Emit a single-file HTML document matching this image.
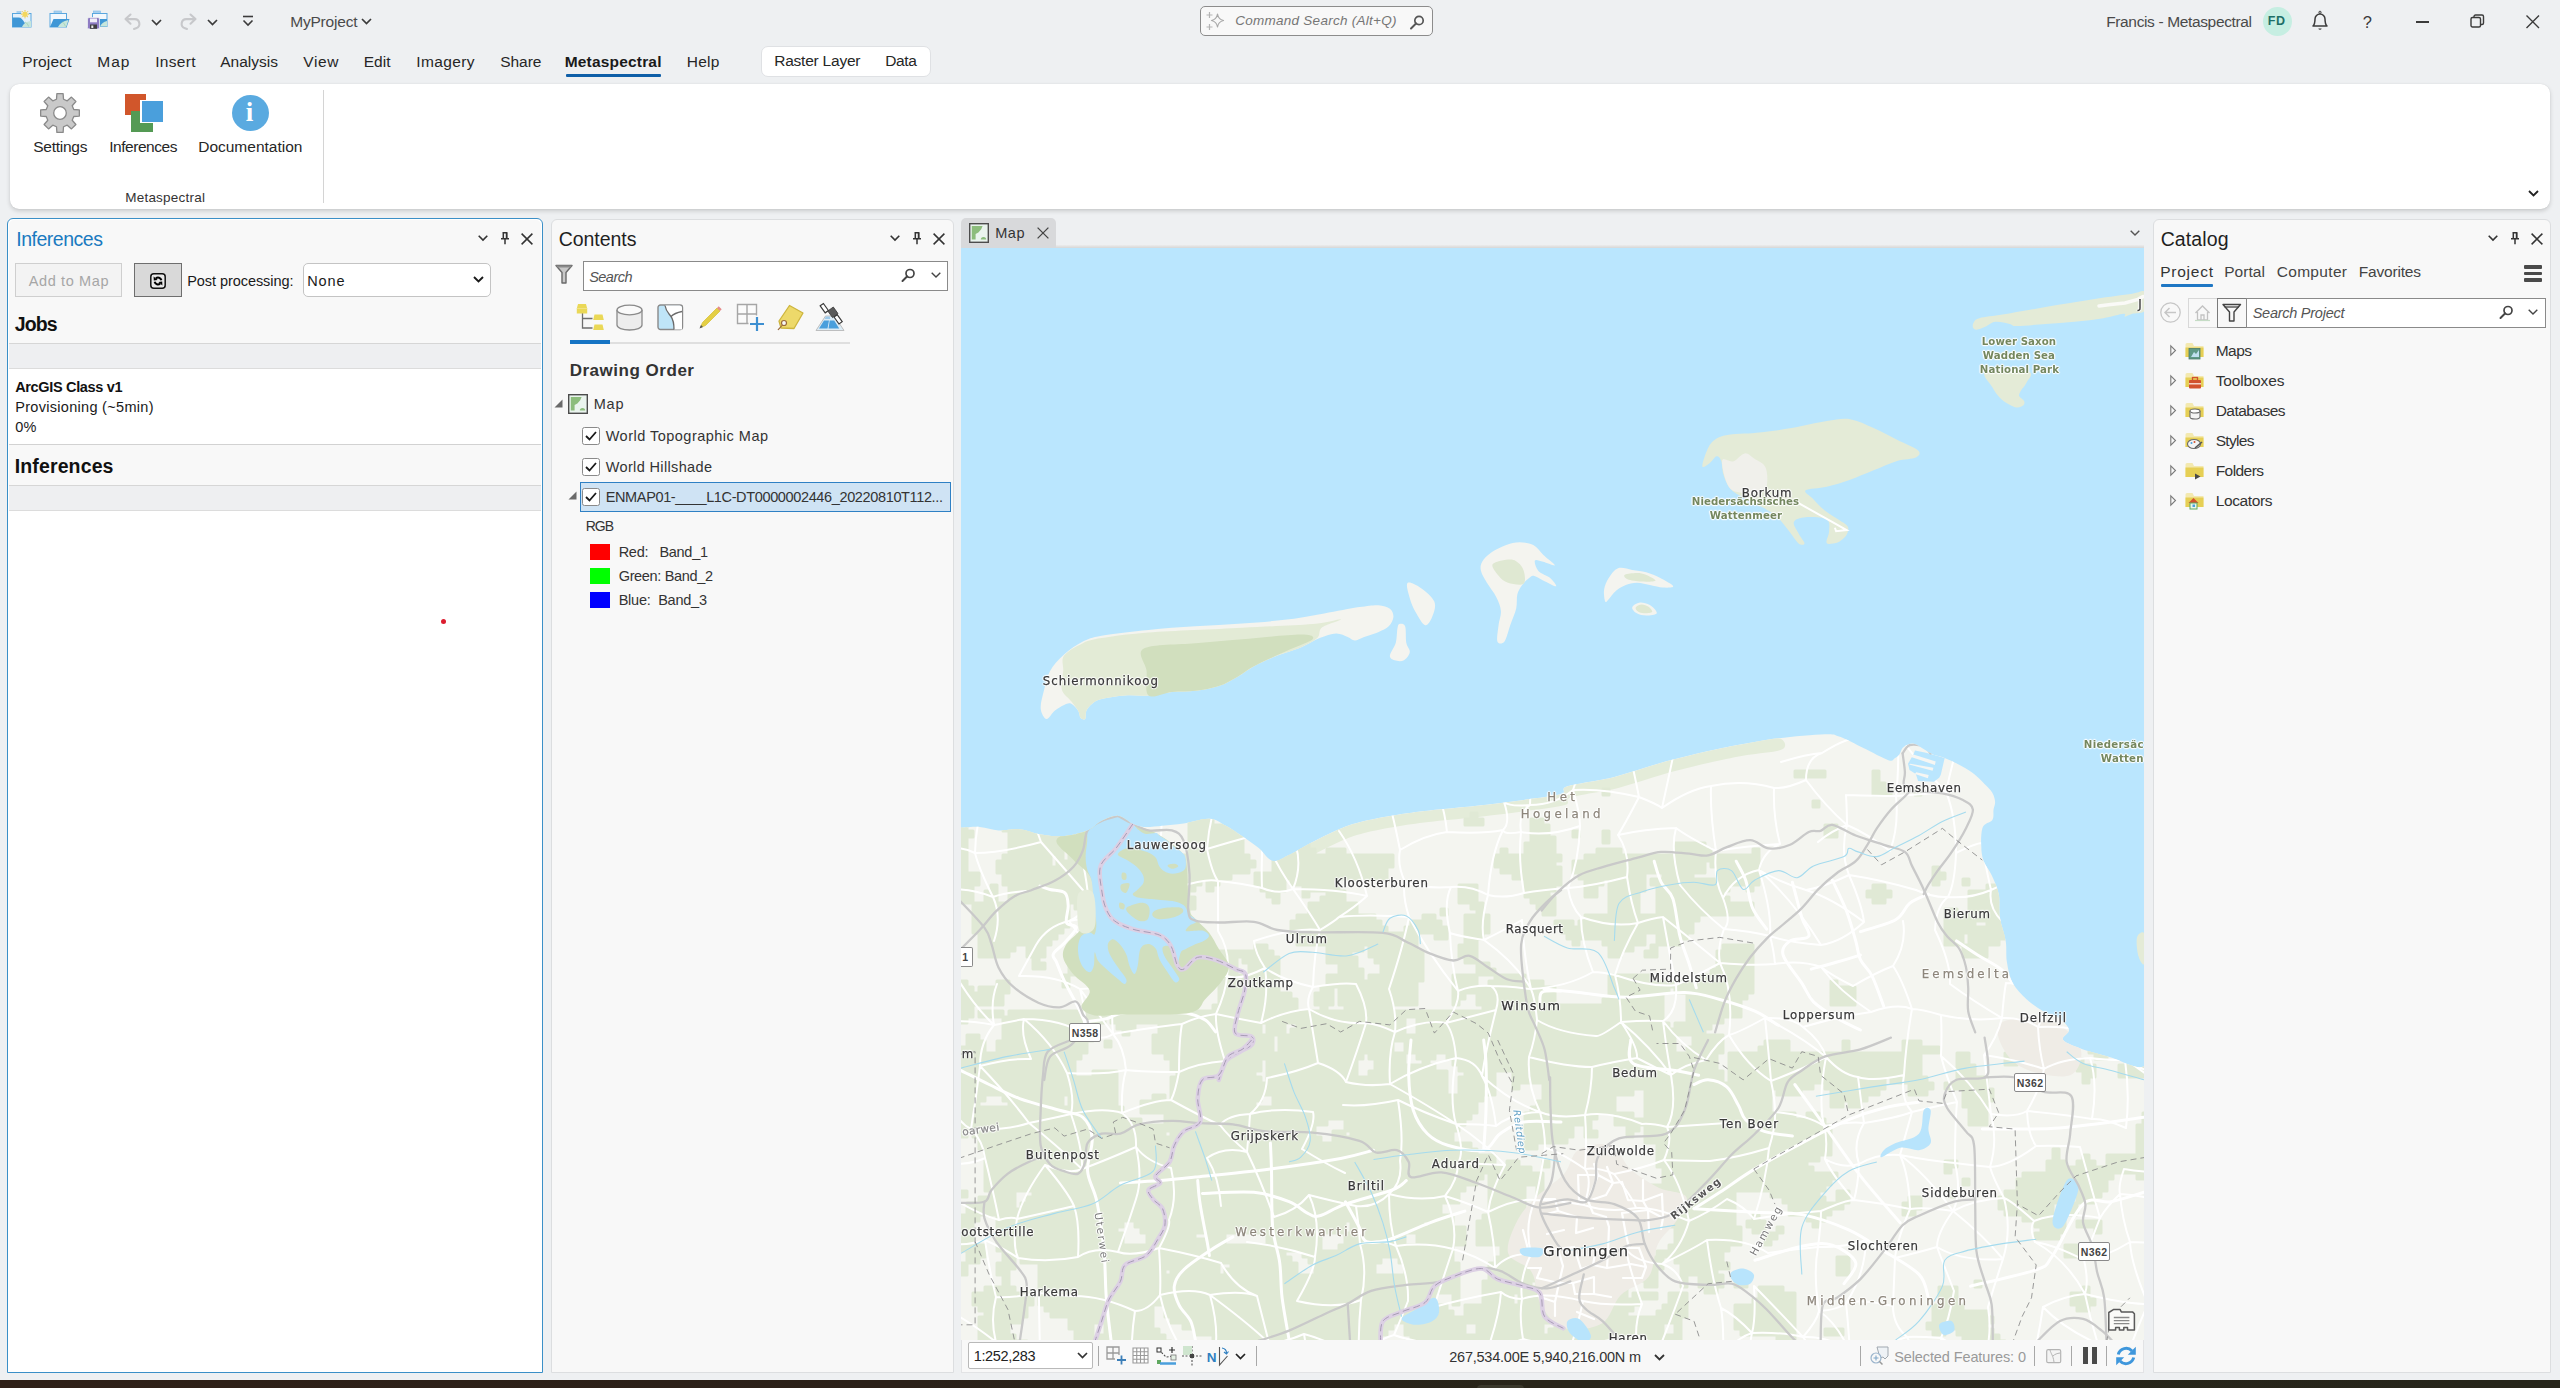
<!DOCTYPE html><html lang="en"><head><meta charset="utf-8"><title>MyProject - Map - ArcGIS Pro</title><style>
*{box-sizing:border-box;margin:0;padding:0}
html,body{width:2560px;height:1388px;overflow:hidden}
body{position:relative;background:#eef0f2;font-family:"Liberation Sans",sans-serif;color:#1f1f1f}
.b{position:absolute}
.t{position:absolute;white-space:pre;line-height:1;display:block}
svg{position:absolute;overflow:visible}

</style></head><body>
<div class="b" style="left:0px;top:1380px;width:2560px;height:8px;background:linear-gradient(90deg,#2f2118 0%,#2b2119 35%,#28251a 60%,#27261b 100%)"></div>
<div class="b" style="left:1477px;top:1385px;width:47px;height:5px;background:#3a382c;border-radius:4px 4px 0 0"></div>
<svg style="left:12px;top:10px" width="20" height="18" viewBox="0 0 20 18"><rect x="4.500" y="1" width="5" height="3" fill="#a8d0ee"/><rect x=".500" y="3.500" width="18.500" height="13.500" fill="#e4f1fb" stroke="#5aa7df" stroke-width="1"/><path d="M.500 7.500h6c3 0 4 2 6 5l3.500 4.500h-15.500z" fill="#3f97d6"/><path d="M10 17c1.500-3.500 4-5.500 9-6v6z" fill="#c6e6dc"/><path d="M13 12c2 1 3 2.500 3.500 4.500" fill="none" stroke="#9fd0b0" stroke-width=".800"/><circle cx="13" cy="4.200" r="3.900" fill="#eef0f2"/><circle cx="13" cy="4.200" r="2.700" fill="#f3d75e"/><path d="M13 0v1.200M13 7.200v1.200M8.800 4.200h1.200M16 4.200h1.200M10 1.200l.900.900M15.100 6.300l.900.900M16 1.200l-.900.900M10.900 6.300l-.900.900" stroke="#e6c440" stroke-width=".900"/></svg>
<svg style="left:49px;top:10px" width="22" height="18" viewBox="0 0 22 18"><rect x="5" y="1" width="7.500" height="2.500" fill="#a8d0ee" stroke="#7dbbe8" stroke-width=".600"/><rect x="1" y="3.500" width="16.500" height="13.500" fill="#f2f8fd" stroke="#5aa7df" stroke-width="1"/><path d="M1 17l3.500-8h16l-2.800 8z" fill="#3f97d6"/><path d="M9 17c2-3.500 5-6 10.500-7l-2.300 7z" fill="#c6e6dc"/><path d="M13 12c2 1 3 2.500 3.300 4.500" fill="none" stroke="#9fd0b0" stroke-width=".800"/></svg>
<svg style="left:87px;top:10px" width="21" height="20" viewBox="0 0 21 20"><rect x="6.500" y="1" width="7" height="2.500" fill="#a8d0ee" stroke="#7dbbe8" stroke-width=".600"/><rect x="5.500" y="3.500" width="14.500" height="13" fill="#f2f8fd" stroke="#5aa7df" stroke-width="1"/><path d="M12 9h8v7.500h-8z" fill="#3f97d6"/><path d="M13 16.500c1.500-3 3.500-4.800 7-5.500v5.500z" fill="#c6e6dc"/><rect x=".500" y="7.500" width="12" height="11.500" rx="1.500" fill="#8e7cc3" stroke="#eef0f2" stroke-width=".800"/><rect x="3" y="8.500" width="7" height="3.800" fill="#f1eef8"/><rect x="3" y="14.500" width="7" height="4.300" fill="#3f3f3f"/><rect x="4.300" y="15.500" width="2" height="2.500" fill="#e8e8e8"/></svg>
<svg style="left:124px;top:13px" width="18" height="17" viewBox="0 0 18 17"><path d="M6.500 1.500l-5 4.600 5 4.600M2 6.100h8.500a4.700 4.700 0 0 1 1.500 9.200l-2 .700" fill="none" stroke="#c7c8cb" stroke-width="2.100" stroke-linecap="round" stroke-linejoin="round"/></svg>
<svg style="left:151px;top:19px" width="11" height="7" viewBox="0 0 11 7"><path d="M1 1l4.500 4.500 4.500-4.500" fill="none" stroke="#3b3b3b" stroke-width="1.700"/></svg>
<svg style="left:179px;top:13px" width="18" height="17" viewBox="0 0 18 17"><path d="M11.500 1.500l5 4.600-5 4.600M16 6.100h-8.500a4.700 4.700 0 0 0-1.500 9.200l2 .700" fill="none" stroke="#c7c8cb" stroke-width="2.100" stroke-linecap="round" stroke-linejoin="round"/></svg>
<svg style="left:207px;top:19px" width="11" height="7" viewBox="0 0 11 7"><path d="M1 1l4.500 4.500 4.500-4.500" fill="none" stroke="#3b3b3b" stroke-width="1.700"/></svg>
<svg style="left:242px;top:15px" width="12" height="12" viewBox="0 0 12 12"><path d="M1 1.500h10" stroke="#3b3b3b" stroke-width="1.600"/><path d="M1.500 5.500l4.500 4.500 4.500-4.500" fill="none" stroke="#3b3b3b" stroke-width="1.600"/></svg>
<svg style="left:361px;top:18px" width="11" height="7" viewBox="0 0 11 7"><path d="M1 1l4.500 4.500 4.500-4.500" fill="none" stroke="#3b3b3b" stroke-width="1.700"/></svg>
<div class="b" style="left:1200px;top:6px;width:233px;height:30px;background:#f8f8f8;border:1px solid #8c8c8c;border-radius:5px"></div>
<svg style="left:1205px;top:11px" width="20" height="21" viewBox="0 0 20 21"><path d="M12.500 3c.600 4 2 5.500 6 6.500-4 1-5.400 2.500-6 6.500-.600-4-2-5.500-6-6.500 4-1 5.400-2.500 6-6.500z" fill="none" stroke="#a8a8a8" stroke-width="1.200" stroke-linejoin="round"/><path d="M4.500 1v6M1.500 4h6M4.500 13v6M1.500 16h6" stroke="#b4b4b4" stroke-width="1.200"/></svg>
<svg style="left:1410px;top:15px" width="15" height="15" viewBox="0 0 15 15"><circle cx="9" cy="5.500" r="4.200" fill="none" stroke="#555" stroke-width="1.700"/><path d="M6 8.500l-5 5" stroke="#555" stroke-width="2" stroke-linecap="round"/></svg>
<div class="b" style="left:2262.5px;top:6.5px;width:29.0px;height:29.0px;background:#c6eee2;border-radius:50%"></div>
<svg style="left:2311px;top:10px" width="18" height="21" viewBox="0 0 18 21"><path d="M2 16h14c-1.800-1.800-2-3.500-2-7a5 5 0 0 0-10 0c0 3.500-.200 5.200-2 7z" fill="none" stroke="#3b3b3b" stroke-width="1.500" stroke-linejoin="round"/><circle cx="9" cy="2.300" r="1.100" fill="none" stroke="#3b3b3b" stroke-width="1"/><path d="M7.300 18.500a1.800 1.800 0 0 0 3.400 0z" fill="#3b3b3b"/></svg>
<div class="b" style="left:2416px;top:21px;width:13px;height:1.5px;background:#3b3b3b"></div>
<svg style="left:2470px;top:14px" width="15" height="15" viewBox="0 0 15 15"><rect x="1" y="3.500" width="9.500" height="9.500" rx="1.500" fill="none" stroke="#3b3b3b" stroke-width="1.400"/><path d="M4 3.500v-1a1.500 1.500 0 0 1 1.500-1.500h6.500a1.500 1.500 0 0 1 1.500 1.500v6.500a1.500 1.500 0 0 1-1.500 1.500h-1.500" fill="none" stroke="#3b3b3b" stroke-width="1.400"/></svg>
<svg style="left:2526px;top:15px" width="14" height="14" viewBox="0 0 14 14"><path d="M.500.500l12.500 12.500M13 .500l-12.500 12.500" stroke="#3b3b3b" stroke-width="1.400"/></svg>
<div class="b" style="left:566px;top:74px;width:95px;height:3px;background:#0f5fa8;border-radius:1px"></div>
<div class="b" style="left:761px;top:45.5px;width:169.5px;height:31.0px;background:#fff;border:1px solid #dfe1e4;border-radius:7px"></div>
<div class="b" style="left:10px;top:84px;width:2540px;height:125px;background:#fff;border-radius:9px;box-shadow:0 2px 4px rgba(0,0,0,.16),0 0 1px rgba(0,0,0,.12)"></div>
<div class="b" style="left:323px;top:90px;width:1px;height:113px;background:#d4d4d4"></div>
<svg style="left:38px;top:91px" width="44" height="44" viewBox="0 0 44 44"><path d="M18.49 8.24 L18.88 2.65 L25.12 2.65 L25.51 8.24 L29.24 9.79 L33.47 6.11 L37.89 10.53 L34.21 14.76 L35.76 18.49 L41.35 18.88 L41.35 25.12 L35.76 25.51 L34.21 29.24 L37.89 33.47 L33.47 37.89 L29.24 34.21 L25.51 35.76 L25.12 41.35 L18.88 41.35 L18.49 35.76 L14.76 34.21 L10.53 37.89 L6.11 33.47 L9.79 29.24 L8.24 25.51 L2.65 25.12 L2.65 18.88 L8.24 18.49 L9.79 14.76 L6.11 10.53 L10.53 6.11 L14.76 9.79Z" fill="#c9c9c9" stroke="#8a8a8a" stroke-width="1.300" stroke-linejoin="round"/><circle cx="22" cy="22" r="6.300" fill="#fff" stroke="#8a8a8a" stroke-width="1.300"/></svg>
<div class="b" style="left:125px;top:94px;width:21px;height:21px;background:#d1562b"></div>
<div class="b" style="left:131px;top:110.5px;width:21.5px;height:21.5px;background:#549a54"></div>
<div class="b" style="left:140px;top:99.5px;width:23px;height:23.0px;background:#fff"></div>
<div class="b" style="left:141.5px;top:100.5px;width:21.5px;height:21.0px;background:#4a9fdc"></div>
<div class="b" style="left:232px;top:94.5px;width:37px;height:36.0px;background:#5aaae0;border-radius:50%"></div>
<svg style="left:2528px;top:190px" width="12" height="8" viewBox="0 0 12 8"><path d="M1 1l4.500 4.500 4.500-4.500" fill="none" stroke="#222" stroke-width="1.800"/></svg>
<div class="b" style="left:7px;top:218px;width:535.5px;height:1154.5px;background:#fff;border:1.500px solid #3a8fc7;border-radius:6px 6px 0 0"></div>
<div class="b" style="left:8.5px;top:220px;width:532.5px;height:123px;background:#f8f8f8;border-radius:5px 5px 0 0"></div>
<svg style="left:478px;top:235px" width="10" height="7" viewBox="0 0 10 7"><path d="M.700 .700l4.300 4.300 4.300-4.300" fill="none" stroke="#333" stroke-width="1.600"/></svg>
<svg style="left:500px;top:232px" width="10" height="13" viewBox="0 0 10 13"><path d="M2.500 .800h5M3.300 .800v5.500M6.700 .800v5.500M1 6.800h8M5 6.800v5.500" fill="none" stroke="#333" stroke-width="1.500"/><path d="M5.800 1h1.500v5.500h-1.500z" fill="#333"/></svg>
<svg style="left:521px;top:233px" width="12" height="12" viewBox="0 0 12 12"><path d="M.600 .600l10.800 10.800M11.400 .600l-10.800 10.800" stroke="#333" stroke-width="1.500"/></svg>
<div class="b" style="left:15px;top:263px;width:107px;height:34px;background:#f3f3f3;border:1px solid #cfcfcf"></div>
<div class="b" style="left:134px;top:263px;width:48px;height:34px;background:#d9d9d9;border:1px solid #6e6e6e"></div>
<svg style="left:150px;top:272.5px" width="16" height="16" viewBox="0 0 16 16"><rect x=".800" y=".800" width="14.400" height="14.400" rx="3" fill="#e9e9e9" stroke="#111" stroke-width="1.500"/><path d="M11.400 7.200a3.400 3.400 0 0 0-5.600-1.700M4.600 8.800a3.400 3.400 0 0 0 5.600 1.700" fill="none" stroke="#000" stroke-width="2"/><path d="M3.600 3.400l.200 4.200 3.800-.700zM12.400 12.600l-.200-4.200-3.800.700z" fill="#000"/></svg>
<div class="b" style="left:303px;top:263px;width:187.5px;height:34px;background:#fff;border:1px solid #c4c4c4;border-radius:5px"></div>
<svg style="left:473px;top:276px" width="12" height="8" viewBox="0 0 12 8"><path d="M1 1l4.500 4.500 4.500-4.500" fill="none" stroke="#1a1a1a" stroke-width="1.900"/></svg>
<div class="b" style="left:8.5px;top:343px;width:532.5px;height:26px;background:#eeeff1;border-top:1px solid #d6d6d6;border-bottom:1px solid #dcdcdc"></div>
<div class="b" style="left:8.5px;top:443.5px;width:532.5px;height:41.5px;background:#f8f8f8;border-top:1px solid #d2d2d2"></div>
<div class="b" style="left:8.5px;top:485px;width:532.5px;height:26px;background:#eeeff1;border-top:1px solid #d6d6d6;border-bottom:1px solid #dcdcdc"></div>
<div class="b" style="left:441px;top:619px;width:5px;height:5px;background:#dc1c2e;border-radius:50%"></div>
<div class="b" style="left:550.5px;top:218.5px;width:403.0px;height:1154.0px;background:#f8f8f8;border:1px solid #dcdee0;border-radius:6px 6px 0 0"></div>
<svg style="left:889.5px;top:235px" width="10" height="7" viewBox="0 0 10 7"><path d="M.700 .700l4.300 4.300 4.300-4.300" fill="none" stroke="#333" stroke-width="1.600"/></svg>
<svg style="left:912px;top:232px" width="10" height="13" viewBox="0 0 10 13"><path d="M2.500 .800h5M3.300 .800v5.500M6.700 .800v5.500M1 6.800h8M5 6.800v5.500" fill="none" stroke="#333" stroke-width="1.500"/><path d="M5.800 1h1.500v5.500h-1.500z" fill="#333"/></svg>
<svg style="left:933px;top:233px" width="12" height="12" viewBox="0 0 12 12"><path d="M.600 .600l10.800 10.800M11.400 .600l-10.800 10.800" stroke="#333" stroke-width="1.500"/></svg>
<svg style="left:555px;top:264px" width="18" height="21" viewBox="0 0 18 21"><path d="M1 1.500h16l-6 7v10.500h-4v-10.500z" fill="#c8c8c8" stroke="#6a6a6a" stroke-width="1.400" stroke-linejoin="round"/><path d="M1 1.500h16l-1.500 2h-13z" fill="#8a8a8a"/></svg>
<div class="b" style="left:582.5px;top:261px;width:365.0px;height:29.5px;background:#fff;border:1px solid #8a8a8a"></div>
<svg style="left:901px;top:268px" width="15" height="15" viewBox="0 0 15 15"><circle cx="9" cy="5.500" r="4" fill="none" stroke="#444" stroke-width="1.700"/><path d="M6 8.500l-4.500 4.500" stroke="#444" stroke-width="2" stroke-linecap="round"/></svg>
<svg style="left:931px;top:272px" width="10" height="7" viewBox="0 0 10 7"><path d="M.700 .700l4.300 4.300 4.300-4.300" fill="none" stroke="#444" stroke-width="1.400"/></svg>
<svg style="left:576px;top:303px" width="29" height="29" viewBox="0 0 29 29"><path d="M6.500 10v15h10M6.500 15.500h10" fill="none" stroke="#6e6e6e" stroke-width="1.300"/><path d="M2 1h8l1.200 4.500v5h-10.400v-5z" fill="#ead857"/><path d="M.800 5.500h10.400" stroke="#f3e68e" stroke-width=".800"/><path d="M18.500 11.500h8l1.300 5.500h-10.600z" fill="#ead857"/><path d="M18.500 21.500h8l1.300 5.500h-10.600z" fill="#ead857"/></svg>
<svg style="left:616px;top:304px" width="27" height="27" viewBox="0 0 27 27"><path d="M1 6v15c0 2.800 5.500 5 12.500 5s12.500-2.200 12.500-5v-15" fill="#ededed" stroke="#8a8a8a" stroke-width="1.300"/><ellipse cx="13.500" cy="6" rx="12.500" ry="4.800" fill="#fafafa" stroke="#8a8a8a" stroke-width="1.300"/></svg>
<svg style="left:657px;top:304px" width="27" height="27" viewBox="0 0 27 27"><rect x="1" y="1" width="24.500" height="24.500" rx="2.500" fill="#bfe5f8" stroke="#8a8a8a" stroke-width="1.400"/><path d="M8 1.500c1 6 3.500 7.500 6 11s3 7 3 13h8v-21.500a2.500 2.500 0 0 0-2.500-2.500z" fill="#fff"/><path d="M8 1.500c1 6 3.500 7.500 6 11s3 7 3 13M14 12.500c3-3 6-4 11-5" fill="none" stroke="#6a6a6a" stroke-width="1.300"/></svg>
<svg style="left:698px;top:305px" width="25" height="25" viewBox="0 0 25 25"><path d="M2.500 22.500l2-5 14.500-14.500 3 3-14.500 14.500z" fill="#e4cf45" stroke="#d8c23a" stroke-width=".8"/><path d="M19 3l1.700-1.700 3 3-1.700 1.700z" fill="#e58b8b"/><path d="M1.500 23.500l1.500-3.500 2 2z" fill="#555"/></svg>
<svg style="left:736px;top:303px" width="30" height="30" viewBox="0 0 30 30"><path d="M1.500 1.500h19v19h-19zM11 1.500v19M1.500 11h19" fill="#fbfbfb" stroke="#a6a6a6" stroke-width="1.400"/><rect x="12.500" y="12.500" width="17" height="17" fill="#f8f8f8"/><path d="M21 14v14M14 21h14" stroke="#3d8fd1" stroke-width="2.200"/></svg>
<svg style="left:777px;top:304px" width="28" height="28" viewBox="0 0 28 28"><path d="M12.500 1.500l13.500 7.500-9 15.500-13-.500-2-7z" fill="#edd96a" stroke="#cdb53e" stroke-width="1.300" stroke-linejoin="round"/><circle cx="7" cy="19" r="2.500" fill="#f8f8f8" stroke="#9a6a3a" stroke-width="1.200"/><path d="M5.500 21c-2 2.500-3.500 3.500-4.500 5" fill="none" stroke="#9a6a3a" stroke-width="1.200"/></svg>
<svg style="left:815px;top:303px" width="31" height="29" viewBox="0 0 31 29"><path d="M1 27.500l9.500-14.500 9 0 9.500 14.500z" fill="#dcecf6" stroke="#b8b8b8" stroke-width=".900"/><path d="M4 25.500l5-8h5l-1.500 8zM13.500 25.500l1.200-8h4.500l5 8z" fill="#4a9fdc"/><path d="M9.700 16l1-2.500h4l.500 2.500z" fill="#9cc9ea"/><path d="M5.200 2.800l3.200-2.300 5 7-3.200 2.300zM19 14l3.200-2.300 5 7-3.200 2.300z" fill="#fff" stroke="#3a3a3a" stroke-width="1.200"/><path d="M12.800 8l5.500-4 4.700 6.600-5.500 4z" fill="#5a5a5a" stroke="#333" stroke-width=".800"/></svg>
<div class="b" style="left:570px;top:341.5px;width:280px;height:2.5px;background:#dfdfdf"></div>
<div class="b" style="left:570px;top:339.5px;width:40px;height:4.5px;background:#1674c4"></div>
<svg style="left:553.5px;top:399px" width="9" height="9" viewBox="0 0 9 9"><path d="M8.500 .500v8h-8z" fill="#6a6a6a"/></svg>
<svg style="left:568px;top:394px" width="20" height="20" viewBox="0 0 20 20"><rect x=".700" y=".700" width="18.600" height="18.600" fill="#eaf4ee" stroke="#4c4c4c" stroke-width="1.400"/><path d="M2.800 3h10.800l-1.400 3.300-2.800 3.300-2.800 1.400v5.600h-3.800z" fill="#8cbd7c"/><path d="M11.800 16.600a2.700 2.700 0 0 1 5.400 0z" fill="#8cbd7c"/></svg>
<div class="b" style="left:582px;top:427px;width:17.5px;height:17.5px;background:#fff;border:1px solid #8a8a8a;border-radius:2.500px"></div>
<svg style="left:585px;top:431px" width="12" height="10" viewBox="0 0 12 10"><path d="M1 5l3.500 3.500 6.500-7.500" fill="none" stroke="#1a1a1a" stroke-width="1.800"/></svg>
<div class="b" style="left:582px;top:458px;width:17.5px;height:17.5px;background:#fff;border:1px solid #8a8a8a;border-radius:2.500px"></div>
<svg style="left:585px;top:462px" width="12" height="10" viewBox="0 0 12 10"><path d="M1 5l3.500 3.500 6.500-7.500" fill="none" stroke="#1a1a1a" stroke-width="1.800"/></svg>
<div class="b" style="left:580px;top:481.5px;width:370.5px;height:30.0px;background:#cfe3f4;border:1px solid #2f80c4"></div>
<svg style="left:567.5px;top:491px" width="9" height="9" viewBox="0 0 9 9"><path d="M8.500 .500v8h-8z" fill="#6a6a6a"/></svg>
<div class="b" style="left:582px;top:488px;width:17.5px;height:17.5px;background:#fff;border:1px solid #8a8a8a;border-radius:2.500px"></div>
<svg style="left:585px;top:492px" width="12" height="10" viewBox="0 0 12 10"><path d="M1 5l3.500 3.500 6.500-7.500" fill="none" stroke="#1a1a1a" stroke-width="1.800"/></svg>
<div class="b" style="left:589.5px;top:544px;width:20.0px;height:15.5px;background:#ff0000"></div>
<div class="b" style="left:589.5px;top:568px;width:20.0px;height:15.5px;background:#00ff00"></div>
<div class="b" style="left:589.5px;top:592px;width:20.0px;height:15.5px;background:#0000ff"></div>
<div class="b" style="left:961px;top:218px;width:95px;height:28px;background:#d8d9db;border-radius:5px 5px 0 0"></div>
<svg style="left:969px;top:223px" width="20" height="20" viewBox="0 0 20 20"><rect x=".700" y=".700" width="18.600" height="18.600" fill="#eaf4ee" stroke="#4c4c4c" stroke-width="1.400"/><path d="M2.800 3h10.800l-1.400 3.300-2.800 3.300-2.800 1.400v5.600h-3.800z" fill="#8cbd7c"/><path d="M11.800 16.600a2.700 2.700 0 0 1 5.400 0z" fill="#8cbd7c"/></svg>
<svg style="left:1037px;top:227px" width="12" height="12" viewBox="0 0 12 12"><path d="M.600 .600l10.800 10.800M11.400 .600l-10.800 10.800" stroke="#444" stroke-width="1.300"/></svg>
<svg style="left:2129.5px;top:230px" width="10" height="7" viewBox="0 0 10 7"><path d="M.700 .700l4.300 4.300 4.300-4.300" fill="none" stroke="#555" stroke-width="1.400"/></svg>
<div class="b" style="left:961px;top:245px;width:1183px;height:3px;background:linear-gradient(#ececec,#d6d6d6)"></div>
<div class="b" style="left:961px;top:245px;width:95px;height:3px;background:#d8d9db"></div>
<div class="b" style="left:961px;top:1340px;width:1183px;height:32.5px;background:#f8f8f8;border:1px solid #e2e3e5;border-top:none"></div>
<div class="b" style="left:2152.5px;top:218.5px;width:398.5px;height:1154.0px;background:#f8f8f8;border:1px solid #dcdee0;border-radius:6px 6px 0 0"></div>
<svg style="left:2488px;top:235px" width="10" height="7" viewBox="0 0 10 7"><path d="M.700 .700l4.300 4.300 4.300-4.300" fill="none" stroke="#333" stroke-width="1.600"/></svg>
<svg style="left:2510px;top:232px" width="10" height="13" viewBox="0 0 10 13"><path d="M2.500 .800h5M3.300 .800v5.500M6.700 .800v5.500M1 6.800h8M5 6.800v5.500" fill="none" stroke="#333" stroke-width="1.500"/><path d="M5.800 1h1.500v5.500h-1.500z" fill="#333"/></svg>
<svg style="left:2531px;top:233px" width="12" height="12" viewBox="0 0 12 12"><path d="M.600 .600l10.800 10.800M11.400 .600l-10.800 10.800" stroke="#333" stroke-width="1.500"/></svg>
<div class="b" style="left:2161px;top:283.5px;width:52px;height:3.0px;background:#1f77c4;border-radius:1px"></div>
<div class="b" style="left:2523.5px;top:265px;width:18.5px;height:3.5px;background:#4a4a4a;border-radius:1px"></div>
<div class="b" style="left:2523.5px;top:271.5px;width:18.5px;height:3.5px;background:#4a4a4a;border-radius:1px"></div>
<div class="b" style="left:2523.5px;top:278px;width:18.5px;height:3.5px;background:#4a4a4a;border-radius:1px"></div>
<svg style="left:2160px;top:302px" width="22" height="22" viewBox="0 0 22 22"><circle cx="10.500" cy="10.500" r="9.700" fill="none" stroke="#c6c6c6" stroke-width="1.300"/><path d="M16 10.500h-10.500M9.500 6l-4.500 4.500 4.500 4.500" fill="none" stroke="#c6c6c6" stroke-width="1.500"/></svg>
<div class="b" style="left:2187.5px;top:297.5px;width:30.0px;height:30.0px;background:#f8f8f8;border:1px solid #d8d8d8"></div>
<svg style="left:2194px;top:304px" width="17" height="17" viewBox="0 0 17 17"><path d="M1.500 9l7-7 7 7M3.500 8v8h10v-8M7 16v-5h3v5" fill="none" stroke="#c2c2c2" stroke-width="1.300"/><path d="M1 16.500h15" stroke="#c5dcc5" stroke-width="1.200"/></svg>
<div class="b" style="left:2217px;top:297.5px;width:30px;height:30.0px;background:#f8f8f8;border:1px solid #7a7a7a"></div>
<svg style="left:2222px;top:303px" width="20" height="19" viewBox="0 0 20 19"><path d="M1 1.500h17.500l-6.500 7.500v9h-4.500v-9z" fill="#f8f8f8" stroke="#444" stroke-width="1.400" stroke-linejoin="round"/><path d="M2.500 4h14.500" stroke="#444" stroke-width="1.300"/></svg>
<div class="b" style="left:2246px;top:297.5px;width:300px;height:30.0px;background:#fff;border:1px solid #8a8a8a"></div>
<svg style="left:2499px;top:305px" width="15" height="15" viewBox="0 0 15 15"><circle cx="9" cy="5.500" r="4" fill="none" stroke="#444" stroke-width="1.700"/><path d="M6 8.500l-4.500 4.500" stroke="#444" stroke-width="2" stroke-linecap="round"/></svg>
<svg style="left:2528px;top:309px" width="10" height="7" viewBox="0 0 10 7"><path d="M.700 .700l4.300 4.300 4.300-4.300" fill="none" stroke="#444" stroke-width="1.400"/></svg>
<svg style="left:2169.5px;top:344.5px" width="7" height="12" viewBox="0 0 7 12"><path d="M.800 .800l4.700 4.700-4.700 4.700z" fill="#f8f8f8" stroke="#7a7a7a" stroke-width="1.100"/></svg>
<svg style="left:2185px;top:340.5px" width="20" height="20" viewBox="0 0 20 20"><path d="M.500 3.500v12.500h18v-11h-9.500l-1.500-3h-5.500a1.500 1.500 0 0 0-1.500 1.500z" fill="#f3e9b0"/><path d="M.500 6.500h18v9.500h-18z" fill="#e6cf55"/><rect x="4" y="7.500" width="11" height="10.500" fill="#5f9a86" stroke="#4a7d6b" stroke-width=".8"/><path d="M6 16l3-5 2 2 3-4v7z" fill="#bfe0ef"/></svg>
<svg style="left:2169.5px;top:374.5px" width="7" height="12" viewBox="0 0 7 12"><path d="M.800 .800l4.700 4.700-4.700 4.700z" fill="#f8f8f8" stroke="#7a7a7a" stroke-width="1.100"/></svg>
<svg style="left:2185px;top:370.5px" width="20" height="20" viewBox="0 0 20 20"><path d="M.500 3.500v12.500h18v-11h-9.500l-1.500-3h-5.500a1.500 1.500 0 0 0-1.500 1.500z" fill="#f3e9b0"/><path d="M.500 6.500h18v9.500h-18z" fill="#e6cf55"/><rect x="4" y="9" width="12" height="8.500" rx="1" fill="#d2522e"/><rect x="7.500" y="6.500" width="5" height="3" fill="none" stroke="#d2522e" stroke-width="1.300"/><rect x="4" y="12" width="12" height="1.500" fill="#f5d2c5"/></svg>
<svg style="left:2169.5px;top:404.5px" width="7" height="12" viewBox="0 0 7 12"><path d="M.800 .800l4.700 4.700-4.700 4.700z" fill="#f8f8f8" stroke="#7a7a7a" stroke-width="1.100"/></svg>
<svg style="left:2185px;top:400.5px" width="20" height="20" viewBox="0 0 20 20"><path d="M.500 3.500v12.500h18v-11h-9.500l-1.500-3h-5.500a1.500 1.500 0 0 0-1.500 1.500z" fill="#f3e9b0"/><path d="M.500 6.500h18v9.500h-18z" fill="#e6cf55"/><path d="M5 10v6c0 1.200 2 2 5 2s5-.800 5-2v-6" fill="#f4f4f4" stroke="#6a6a6a" stroke-width="1.100"/><ellipse cx="10" cy="10" rx="5" ry="2" fill="#fff" stroke="#6a6a6a" stroke-width="1.100"/></svg>
<svg style="left:2169.5px;top:434.5px" width="7" height="12" viewBox="0 0 7 12"><path d="M.800 .800l4.700 4.700-4.700 4.700z" fill="#f8f8f8" stroke="#7a7a7a" stroke-width="1.100"/></svg>
<svg style="left:2185px;top:430.5px" width="20" height="20" viewBox="0 0 20 20"><path d="M.500 3.500v12.500h18v-11h-9.500l-1.500-3h-5.500a1.500 1.500 0 0 0-1.500 1.500z" fill="#f3e9b0"/><path d="M.500 6.500h18v9.500h-18z" fill="#e6cf55"/><ellipse cx="9" cy="13" rx="6.500" ry="4.500" fill="#f4f4f4" stroke="#6a6a6a" stroke-width="1.100"/><circle cx="6.500" cy="12" r="1" fill="#4a9fdc"/><circle cx="9.500" cy="11" r="1" fill="#d2522e"/><path d="M10 17l7-6" stroke="#555" stroke-width="1.600"/></svg>
<svg style="left:2169.5px;top:464.5px" width="7" height="12" viewBox="0 0 7 12"><path d="M.800 .800l4.700 4.700-4.700 4.700z" fill="#f8f8f8" stroke="#7a7a7a" stroke-width="1.100"/></svg>
<svg style="left:2185px;top:460.5px" width="20" height="20" viewBox="0 0 20 20"><path d="M.500 3.500v12.500h18v-11h-9.500l-1.500-3h-5.500a1.500 1.500 0 0 0-1.500 1.500z" fill="#f3e9b0"/><path d="M.500 6.500h18v9.500h-18z" fill="#e6cf55"/><path d="M10 12.500l5.500 3-5.500 3z" fill="#4a4a4a"/></svg>
<svg style="left:2169.5px;top:494.5px" width="7" height="12" viewBox="0 0 7 12"><path d="M.800 .800l4.700 4.700-4.700 4.700z" fill="#f8f8f8" stroke="#7a7a7a" stroke-width="1.100"/></svg>
<svg style="left:2185px;top:490.5px" width="20" height="20" viewBox="0 0 20 20"><path d="M.500 3.500v12.500h18v-11h-9.500l-1.500-3h-5.500a1.500 1.500 0 0 0-1.500 1.500z" fill="#f3e9b0"/><path d="M.500 6.500h18v9.500h-18z" fill="#e6cf55"/><path d="M3.500 12l5-5 5 5z" fill="#d2522e"/><rect x="5" y="12" width="7" height="6" fill="#eaf5ea" stroke="#5fa85f" stroke-width="1"/><rect x="7.500" y="13.500" width="2.500" height="2.500" fill="#4a9fdc"/></svg>
<div class="b" style="left:968px;top:1342px;width:125px;height:27px;background:#fff;border:1px solid #b9b9b9;border-radius:2px"></div>
<svg style="left:1077px;top:1352px" width="11" height="8" viewBox="0 0 11 8"><path d="M1 1l4.500 4.500 4.500-4.500" fill="none" stroke="#333" stroke-width="1.700"/></svg>
<div class="b" style="left:1098px;top:1346px;width:1.2999999999999545px;height:20px;background:#a8a8a8"></div>
<svg style="left:1106px;top:1346px" width="22" height="19" viewBox="0 0 22 19"><path d="M1 1h12v12h-12zM7 1v12M1 7h12" fill="none" stroke="#9a9a9a" stroke-width="1.300"/><rect x="9" y="9" width="12" height="10" fill="#f8f8f8"/><path d="M15.500 9.500v9M11 14h9" stroke="#3d7fb8" stroke-width="1.800"/></svg>
<svg style="left:1132px;top:1347px" width="17" height="17" viewBox="0 0 17 17"><path d="M1 1h15v15h-15zM1 4.750h15M1 8.500h15M1 12.250h15M4.750 1v15M8.500 1v15M12.250 1v15" fill="#fff" stroke="#9a9a9a" stroke-width="1.100"/></svg>
<svg style="left:1156px;top:1346px" width="21" height="20" viewBox="0 0 21 20"><path d="M3 4l7 7 8-1" fill="none" stroke="#4a4a4a" stroke-width="1.100" stroke-dasharray="2 1.500"/><rect x="1" y="2" width="4" height="4" fill="#fff" stroke="#333" stroke-width="1"/><rect x="1" y="14" width="4" height="4" fill="#5fa85f"/><path d="M4 17.500h16" stroke="#4a9fdc" stroke-width="2.500"/><path d="M16 1v6M13 4h6" stroke="#333" stroke-width="1.200"/><rect x="15" y="9" width="5" height="5" fill="#e4f0e4" stroke="#777" stroke-width=".8"/></svg>
<svg style="left:1182px;top:1346px" width="20" height="20" viewBox="0 0 20 20"><path d="M10 0v20M0 10h20" stroke="#555" stroke-width="1.100" stroke-dasharray="2 1.500"/><rect x="1" y="0" width="9" height="9" fill="#cfe5cf"/><rect x="8" y="8" width="4" height="4" fill="#444"/></svg>
<svg style="left:1217px;top:1346px" width="12" height="20" viewBox="0 0 12 20"><path d="M2.500 1v18l8-9" fill="none" stroke="#555" stroke-width="1.100"/><path d="M5 2c3 .500 4.500 2 4.500 5M7 6l2.500 2 2-2.500" fill="none" stroke="#2f7fc0" stroke-width="1.200"/></svg>
<svg style="left:1235px;top:1353px" width="11" height="7" viewBox="0 0 11 7"><path d="M1 1l4.500 4.500 4.500-4.500" fill="none" stroke="#222" stroke-width="1.700"/></svg>
<div class="b" style="left:1256px;top:1346px;width:1.2999999999999545px;height:20px;background:#a8a8a8"></div>
<svg style="left:1654px;top:1354px" width="11" height="7" viewBox="0 0 11 7"><path d="M1 1l4.500 4.500 4.500-4.500" fill="none" stroke="#333" stroke-width="1.800"/></svg>
<div class="b" style="left:1860px;top:1346px;width:1.2999999999999545px;height:20px;background:#a8a8a8"></div>
<svg style="left:1869px;top:1346px" width="20" height="20" viewBox="0 0 20 20"><path d="M8 1h11v9l-3 3-2-2-3 1z" fill="#eef2f6" stroke="#a0a8b0" stroke-width="1"/><circle cx="7" cy="12" r="5" fill="#f8f8f8" stroke="#9ab4cc" stroke-width="1.200"/><path d="M7 9.500v5M4.500 12h5" stroke="#7fa6c8" stroke-width="1.100"/><path d="M10.500 15.500l3 3" stroke="#9a9a9a" stroke-width="1.500"/></svg>
<div class="b" style="left:2034px;top:1346px;width:1.2999999999999545px;height:20px;background:#a8a8a8"></div>
<svg style="left:2046px;top:1349px" width="16" height="15" viewBox="0 0 16 15"><rect x=".700" y=".700" width="14" height="13" rx="1.500" fill="#f4f4f4" stroke="#b4b4b4" stroke-width="1.200"/><path d="M4 1c1 4 3 5 4 12M7 7c2-2 4-2.500 7-3" fill="none" stroke="#b4b4b4" stroke-width="1"/></svg>
<div class="b" style="left:2071px;top:1346px;width:1.300000000000182px;height:20px;background:#a8a8a8"></div>
<div class="b" style="left:2082.5px;top:1347px;width:5.0px;height:17px;background:#4a4a4a"></div>
<div class="b" style="left:2091.5px;top:1347px;width:5.0px;height:17px;background:#4a4a4a"></div>
<div class="b" style="left:2106px;top:1346px;width:1.300000000000182px;height:20px;background:#a8a8a8"></div>
<svg style="left:2115px;top:1345px" width="22" height="22" viewBox="0 0 22 22"><path d="M3.300 9.500a8 8 0 0 1 13.700-3.500M18.700 12.500a8 8 0 0 1-13.700 3.500" fill="none" stroke="#3f97dc" stroke-width="3"/><path d="M20.800 1.800v8h-8zM1.200 20.200v-8h8z" fill="#3f97dc"/></svg>
<svg style="left:961px;top:248px;overflow:hidden" width="1183" height="1092" viewBox="961 248 1183 1092"><rect x="961" y="248" width="1183" height="1092" fill="#bae6fe"/><path d="M1046.5 718.9C1044.2 718.5 1041.1 713.3 1040.7 708.4C1040.3 703.5 1042.6 695.9 1044.2 689.6C1045.8 683.4 1046.7 676.7 1050.1 670.9C1053.4 665.0 1058.7 659.4 1064.1 654.5C1069.6 649.6 1076.6 644.7 1082.9 641.6C1089.1 638.5 1090.7 637.7 1101.6 635.7C1112.6 633.8 1132.9 631.4 1148.5 629.9C1164.1 628.3 1179.7 627.4 1195.4 626.3C1211.0 625.3 1226.6 624.7 1242.2 623.5C1257.9 622.4 1275.5 621.0 1289.1 619.3C1302.8 617.6 1312.6 615.5 1324.3 613.5C1336.0 611.4 1350.5 608.5 1359.4 607.1C1368.4 605.8 1373.1 605.0 1378.2 605.2C1383.3 605.5 1387.4 606.8 1389.9 608.8C1392.4 610.7 1393.6 614.0 1393.4 617.0C1393.2 619.9 1391.3 623.8 1388.7 626.3C1386.2 628.9 1382.3 630.4 1378.2 632.2C1374.1 634.0 1368.0 635.5 1364.1 636.9C1360.2 638.3 1357.5 640.4 1354.7 640.4C1352.0 640.4 1350.8 638.1 1347.7 636.9C1344.6 635.7 1340.7 633.2 1336.0 633.4C1331.3 633.6 1325.5 635.7 1319.6 638.1C1313.7 640.4 1307.9 644.5 1300.8 647.4C1293.8 650.4 1285.2 652.5 1277.4 655.6C1269.6 658.8 1260.6 662.7 1254.0 666.2C1247.3 669.7 1243.4 673.4 1237.6 676.7C1231.7 680.1 1225.8 683.8 1218.8 686.1C1211.8 688.5 1203.2 689.8 1195.4 690.8C1187.6 691.8 1179.7 691.2 1171.9 692.0C1164.1 692.7 1156.3 694.9 1148.5 695.5C1140.7 696.1 1132.9 694.9 1125.1 695.5C1117.2 696.1 1107.1 697.6 1101.6 699.0C1096.2 700.4 1094.8 701.7 1092.2 703.7C1089.7 705.6 1087.6 708.2 1086.4 710.7C1085.2 713.3 1086.2 717.7 1085.2 718.9C1084.2 720.1 1081.7 719.1 1080.5 717.7C1079.4 716.4 1079.7 713.1 1078.2 710.7C1076.6 708.4 1073.5 704.7 1071.2 703.7C1068.8 702.7 1066.9 703.7 1064.1 704.9C1061.4 706.0 1057.7 708.4 1054.7 710.7C1051.8 713.1 1048.9 719.3 1046.5 718.9Z" fill="#f4f4ef"/><path d="M1064.1 655.6C1067.4 651.0 1076.6 646.1 1082.9 643.2C1089.1 640.3 1090.7 639.9 1101.6 638.1C1112.6 636.3 1125.1 634.2 1148.5 632.4C1171.9 630.7 1214.9 629.2 1242.2 627.7C1269.6 626.3 1296.2 625.4 1312.6 624.0C1329.0 622.6 1339.1 618.7 1340.7 619.3C1342.2 619.9 1325.8 624.4 1321.9 627.5C1318.0 630.6 1320.8 634.7 1317.2 638.1C1313.7 641.4 1307.5 644.5 1300.8 647.4C1294.2 650.4 1285.2 652.5 1277.4 655.6C1269.6 658.8 1260.6 662.7 1254.0 666.2C1247.3 669.7 1243.4 673.4 1237.6 676.7C1231.7 680.1 1225.8 683.8 1218.8 686.1C1211.8 688.5 1203.2 689.8 1195.4 690.8C1187.6 691.8 1179.7 691.2 1171.9 692.0C1164.1 692.7 1156.3 694.9 1148.5 695.5C1140.7 696.1 1132.9 694.9 1125.1 695.5C1117.2 696.1 1107.1 697.6 1101.6 699.0C1096.2 700.4 1094.8 701.7 1092.2 703.7C1089.7 705.6 1087.6 708.2 1086.4 710.7C1085.2 713.3 1086.2 717.7 1085.2 718.9C1084.2 720.1 1081.7 719.1 1080.5 717.7C1079.4 716.4 1079.7 713.5 1078.2 710.7C1076.6 708.0 1073.9 704.9 1071.2 701.3C1068.4 697.8 1063.1 694.7 1061.8 689.6C1060.5 684.5 1062.8 676.5 1063.2 670.9C1063.6 665.2 1060.8 660.2 1064.1 655.6Z" fill="#e3ebd6"/><path d="M1143.8 648.6C1151.9 644.0 1179.0 644.8 1195.4 643.2C1211.8 641.7 1224.7 640.7 1242.2 639.2C1259.8 637.8 1289.1 634.5 1300.8 634.5C1312.6 634.5 1314.5 636.7 1312.6 639.2C1310.6 641.8 1298.9 645.3 1289.1 649.8C1279.4 654.3 1262.6 661.7 1254.0 666.2C1245.4 670.7 1243.4 673.4 1237.6 676.7C1231.7 680.1 1225.8 683.8 1218.8 686.1C1211.8 688.5 1203.2 689.8 1195.4 690.8C1187.6 691.8 1179.7 691.2 1171.9 692.0C1164.1 692.7 1152.7 699.0 1148.5 695.5C1144.3 692.0 1147.4 678.7 1146.6 670.9C1145.8 663.1 1135.7 653.2 1143.8 648.6Z" fill="#d1dfbe"/><path d="M1407.5 583.0C1409.2 581.2 1415.9 584.5 1420.4 587.7C1424.9 590.8 1432.5 596.9 1434.4 601.7C1436.4 606.6 1433.7 613.1 1432.1 617.0C1430.5 620.9 1427.8 626.0 1425.1 625.2C1422.3 624.4 1418.2 616.8 1415.7 612.3C1413.1 607.8 1411.2 603.1 1409.8 598.2C1408.5 593.3 1405.7 584.7 1407.5 583.0Z" fill="#f4f4ef"/><path d="M1399.3 624.0C1400.6 623.6 1404.0 623.2 1405.1 626.3C1406.3 629.5 1405.5 638.5 1406.3 642.7C1407.1 647.0 1410.2 649.2 1409.8 652.1C1409.4 655.1 1406.5 659.0 1404.0 660.3C1401.4 661.7 1396.9 661.1 1394.6 660.3C1392.2 659.5 1389.7 658.6 1389.9 655.6C1390.1 652.7 1394.5 647.2 1395.8 642.7C1397.0 638.3 1396.8 631.8 1397.4 628.7C1398.0 625.6 1398.0 624.4 1399.3 624.0Z" fill="#f4f4ef"/><path d="M1497.4 641.4C1496.4 638.7 1498.0 630.1 1498.6 625.0C1499.2 619.9 1501.3 615.6 1500.9 610.9C1500.5 606.2 1498.6 601.6 1496.2 596.9C1493.9 592.2 1489.4 587.1 1486.9 582.8C1484.3 578.5 1481.8 574.6 1481.0 571.1C1480.2 567.6 1480.4 564.8 1482.2 561.7C1483.9 558.6 1487.7 555.1 1491.6 552.3C1495.5 549.6 1500.9 547.0 1505.6 545.3C1510.3 543.6 1515.0 542.3 1519.7 542.3C1524.4 542.3 1529.8 543.2 1533.7 545.3C1537.7 547.4 1539.6 551.4 1543.1 554.7C1546.6 558.0 1554.8 564.1 1554.8 565.2C1554.8 566.4 1546.4 562.5 1543.1 561.7C1539.8 560.9 1535.7 559.0 1534.9 560.5C1534.1 562.1 1535.9 568.2 1538.4 571.1C1541.0 574.0 1547.2 575.6 1550.2 578.1C1553.1 580.7 1557.2 585.9 1556.0 586.3C1554.8 586.7 1546.8 582.2 1543.1 580.5C1539.4 578.7 1536.1 576.2 1533.7 575.8C1531.4 575.4 1531.0 576.6 1529.1 578.1C1527.1 579.7 1524.0 582.4 1522.0 585.2C1520.1 587.9 1518.3 590.6 1517.3 594.5C1516.4 598.4 1517.3 603.5 1516.2 608.6C1515.0 613.7 1512.3 619.5 1510.3 625.0C1508.4 630.5 1506.6 638.7 1504.5 641.4C1502.3 644.1 1498.4 644.1 1497.4 641.4Z" fill="#f4f4ef"/><path d="M1492.7 564.1C1494.7 561.3 1505.8 559.4 1510.3 559.4C1514.8 559.4 1517.3 561.7 1519.7 564.1C1522.0 566.4 1523.8 570.1 1524.4 573.4C1525.0 576.8 1525.9 582.4 1523.2 584.0C1520.5 585.5 1512.1 584.2 1508.0 582.8C1503.9 581.4 1501.1 578.9 1498.6 575.8C1496.1 572.7 1490.8 566.8 1492.7 564.1Z" fill="#dfe8d2"/><path d="M1605.2 601.6C1604.5 600.0 1603.5 593.7 1604.1 589.8C1604.6 585.9 1606.4 581.7 1608.7 578.1C1611.1 574.5 1614.2 569.6 1618.1 568.3C1622.0 566.9 1627.5 569.3 1632.2 569.9C1636.9 570.6 1641.6 570.9 1646.2 572.3C1650.9 573.6 1655.8 575.8 1660.3 578.1C1664.8 580.5 1672.8 584.8 1673.2 586.3C1673.6 587.9 1666.4 587.7 1662.7 587.5C1658.9 587.3 1655.2 585.9 1650.9 585.2C1646.6 584.4 1641.2 582.8 1636.9 582.8C1632.6 582.8 1628.7 583.8 1625.2 585.2C1621.6 586.5 1618.5 588.7 1615.8 591.0C1613.0 593.4 1610.5 597.5 1608.7 599.2C1607.0 601.0 1606.0 603.1 1605.2 601.6Z" fill="#f4f4ef"/><path d="M1625.2 574.6C1627.5 573.6 1636.5 572.5 1641.6 573.4C1646.6 574.4 1655.6 579.1 1655.6 580.5C1655.6 581.8 1646.2 581.8 1641.6 581.6C1636.9 581.4 1630.2 580.5 1627.5 579.3C1624.8 578.1 1622.8 575.6 1625.2 574.6Z" fill="#dfe8d2"/><path d="M1632.2 607.4C1632.6 605.7 1636.3 603.1 1639.2 602.7C1642.1 602.3 1646.8 603.3 1649.8 605.1C1652.7 606.8 1657.4 611.5 1656.8 613.3C1656.2 615.0 1649.6 615.6 1646.2 615.6C1642.9 615.6 1639.2 614.6 1636.9 613.3C1634.5 611.9 1631.8 609.2 1632.2 607.4Z" fill="#f4f4ef"/><path d="M1635.7 607.4C1636.3 606.2 1639.4 604.5 1641.6 604.4C1643.7 604.3 1646.8 605.4 1648.6 606.7C1650.3 608.0 1652.9 611.0 1652.1 612.1C1651.3 613.2 1646.2 613.4 1643.9 613.3C1641.6 613.2 1639.4 612.6 1638.0 611.6C1636.7 610.7 1635.1 608.6 1635.7 607.4Z" fill="#dfe8d2"/><path d="M1702.5 466.8C1701.7 465.6 1703.3 460.4 1704.8 456.2C1706.4 452.1 1708.4 445.7 1711.9 442.2C1715.4 438.7 1718.5 436.7 1725.9 435.2C1733.4 433.6 1745.5 434.0 1756.4 432.8C1767.3 431.6 1779.8 430.1 1791.6 428.1C1803.3 426.2 1817.0 422.6 1826.7 421.1C1836.5 419.6 1842.3 418.0 1850.2 419.2C1858.0 420.4 1865.8 424.7 1873.6 428.1C1881.4 431.6 1889.6 436.1 1897.0 439.8C1904.4 443.6 1915.0 447.5 1918.1 450.4C1921.2 453.3 1919.3 455.7 1915.8 457.4C1912.3 459.2 1904.1 458.8 1897.0 460.9C1890.0 463.1 1881.4 467.2 1873.6 470.3C1865.8 473.4 1858.0 477.0 1850.2 479.7C1842.3 482.4 1834.1 485.0 1826.7 486.7C1819.3 488.5 1808.0 488.3 1805.6 490.2C1803.3 492.2 1809.5 495.1 1812.7 498.4C1815.8 501.8 1820.1 506.6 1824.4 510.2C1828.7 513.7 1834.5 516.8 1838.4 519.5C1842.3 522.3 1846.4 524.0 1847.8 526.6C1849.2 529.1 1847.8 532.4 1846.6 534.8C1845.5 537.1 1842.5 539.3 1840.8 540.6C1839.0 542.0 1838.4 542.6 1836.1 543.0C1833.7 543.4 1827.9 544.9 1826.7 543.0C1825.5 541.0 1829.1 535.2 1829.1 531.2C1829.1 527.3 1830.6 521.9 1826.7 519.5C1822.8 517.2 1811.1 516.8 1805.6 517.2C1800.2 517.6 1795.1 519.1 1793.9 521.9C1792.7 524.6 1796.8 530.0 1798.6 533.6C1800.3 537.2 1804.5 541.8 1804.5 543.4C1804.5 545.1 1801.1 545.5 1798.6 543.4C1796.1 541.4 1792.7 535.6 1789.2 531.2C1785.7 526.9 1781.8 521.1 1777.5 517.2C1773.2 513.3 1768.9 510.9 1763.4 507.8C1758.0 504.7 1750.2 501.6 1744.7 498.4C1739.2 495.3 1734.1 493.0 1730.6 489.1C1727.1 485.2 1725.2 479.7 1723.6 475.0C1722.0 470.3 1722.4 464.1 1721.2 460.9C1720.1 457.8 1718.5 455.9 1716.6 456.2C1714.6 456.6 1711.9 461.5 1709.5 463.3C1707.2 465.0 1703.3 468.0 1702.5 466.8Z" fill="#e4ebd7"/><path d="M1722.4 459.8C1723.8 457.1 1729.3 462.5 1733.0 461.4C1736.7 460.4 1741.2 453.9 1744.7 453.4C1748.2 453.0 1750.5 456.2 1754.1 458.6C1757.6 461.0 1763.8 462.9 1765.8 468.0C1767.7 473.0 1768.1 484.8 1765.8 489.1C1763.4 493.4 1756.0 493.2 1751.7 493.7C1747.4 494.3 1743.5 493.4 1740.0 492.6C1736.5 491.8 1733.2 491.6 1730.6 489.1C1728.1 486.5 1726.1 482.2 1724.8 477.3C1723.4 472.5 1721.1 462.4 1722.4 459.8Z" fill="#f0f0eb"/><path d="M1798.6 503.1 1836.1 524.2 1846.6 530.1 1836.1 531.2 1834.9 527.7" fill="none" stroke="#fff" stroke-width="2"/><path d="M1973.0 327.5C1972.5 326.3 1972.6 324.0 1973.7 322.5C1974.8 320.9 1974.6 319.5 1979.4 318.2C1984.2 316.8 1993.9 316.0 2002.5 314.6C2011.1 313.1 2021.7 311.2 2031.3 309.5C2040.9 307.8 2049.3 306.3 2060.1 304.5C2070.9 302.7 2084.2 300.5 2096.2 298.7C2108.2 296.9 2124.0 294.7 2132.2 293.7C2140.3 292.6 2143.0 289.5 2145.2 292.2C2147.3 295.0 2147.3 306.6 2145.2 310.2C2143.0 313.8 2135.5 312.8 2132.2 313.8C2128.8 314.9 2126.4 316.7 2125.0 316.7C2123.5 316.7 2127.1 313.6 2123.5 313.8C2119.9 314.1 2111.5 316.8 2103.4 318.2C2095.2 319.5 2084.2 320.8 2074.5 321.8C2064.9 322.7 2055.3 323.2 2045.7 323.9C2036.1 324.6 2022.9 326.1 2016.9 326.1C2010.9 326.1 2013.3 324.6 2009.7 323.9C2006.1 323.2 1999.4 321.3 1995.3 321.8C1991.2 322.2 1988.3 325.5 1985.2 326.8C1982.1 328.1 1978.6 329.6 1976.6 329.7C1974.5 329.8 1973.4 328.7 1973.0 327.5Z" fill="#e4ebd7"/><path d="M2099.0 305.9 2110.6 304.5 2125.0 303.0 2137.9 299.4 2143.0 296.6" fill="none" stroke="#fafaf7" stroke-width="3.500" stroke-linecap="round"/><path d="M1985.9 371.5C1991.9 368.8 2021.7 369.6 2028.4 371.5C2035.2 373.4 2027.5 379.9 2026.3 383.0C2025.1 386.1 2022.4 388.0 2021.2 390.2C2020.0 392.4 2018.6 394.2 2019.1 396.0C2019.6 397.8 2023.4 399.5 2024.1 401.0C2024.8 402.6 2024.6 404.3 2023.4 405.3C2022.2 406.4 2019.4 407.7 2016.9 407.5C2014.4 407.3 2011.1 405.6 2008.3 403.9C2005.4 402.2 2002.3 400.2 1999.6 397.4C1997.0 394.7 1994.7 391.7 1992.4 387.3C1990.1 383.0 1979.9 374.1 1985.9 371.5Z" fill="#e4ebd7"/><path d="M2137.0 937.4C2137.9 933.7 2142.0 931.0 2144.0 932.7C2145.9 934.5 2148.7 942.7 2148.7 948.0C2148.7 953.2 2145.8 963.2 2144.0 964.4C2142.2 965.5 2139.3 959.5 2138.1 955.0C2137.0 950.5 2136.0 941.1 2137.0 937.4Z" fill="#e4ebd7"/><clipPath id="lc"><path d="M958.7 828.0C962.2 827.9 973.1 826.5 979.7 826.9C986.4 827.3 991.9 830.0 998.5 830.4C1005.1 830.8 1013.0 828.6 1019.6 829.2C1026.2 829.8 1031.3 832.7 1038.3 833.9C1045.4 835.1 1053.6 836.8 1061.8 836.2C1070.0 835.7 1080.9 832.9 1087.6 830.4C1094.2 827.9 1096.5 823.4 1101.6 821.0C1106.7 818.6 1113.0 815.5 1118.0 815.9C1123.1 816.2 1127.8 821.5 1132.1 823.4C1136.4 825.2 1138.7 826.5 1143.8 826.9C1148.9 827.3 1155.9 826.3 1162.6 825.7C1169.2 825.1 1175.8 824.5 1183.7 823.4C1191.5 822.2 1202.4 818.3 1209.4 818.7C1216.5 819.1 1220.4 822.8 1225.8 825.7C1231.3 828.6 1236.8 832.5 1242.2 836.2C1247.7 840.0 1253.6 843.9 1258.7 848.0C1263.7 852.1 1267.6 859.7 1272.7 860.9C1277.8 862.0 1282.5 858.1 1289.1 855.0C1295.8 851.9 1304.7 846.2 1312.6 842.1C1320.4 838.0 1328.2 833.7 1336.0 830.4C1343.8 827.1 1349.7 824.7 1359.4 822.2C1369.2 819.6 1382.9 817.1 1394.6 815.2C1406.3 813.2 1416.1 812.0 1429.7 810.5C1443.4 808.9 1461.0 807.5 1476.6 805.8C1492.2 804.0 1509.4 801.9 1523.5 799.9C1537.6 798.0 1553.7 796.3 1561.0 794.1C1568.3 791.8 1558.6 789.1 1567.4 786.2C1576.3 783.4 1598.7 780.8 1614.3 776.9C1629.9 773.0 1645.6 767.1 1661.2 762.8C1676.8 758.5 1694.4 754.2 1708.1 751.1C1721.7 748.0 1731.5 746.2 1743.2 744.1C1754.9 741.9 1764.7 739.8 1778.4 738.2C1792.0 736.6 1815.0 734.5 1825.2 734.2C1835.5 734.0 1833.6 734.5 1840.0 736.8C1846.4 739.1 1855.4 744.2 1863.4 748.1C1871.5 752.0 1883.2 758.5 1888.4 760.2C1893.6 761.9 1892.9 759.3 1894.7 758.3C1896.5 757.3 1898.1 756.1 1899.4 754.4C1900.7 752.7 1901.1 749.8 1902.5 748.1C1903.9 746.5 1906.0 745.1 1908.0 744.4C1909.9 743.7 1911.9 743.2 1914.2 743.8C1916.6 744.5 1919.4 746.6 1922.0 748.1C1924.6 749.6 1927.6 751.6 1929.8 752.8C1932.1 754.0 1932.8 754.5 1935.3 755.3C1937.8 756.2 1941.0 756.5 1944.7 757.9C1948.3 759.3 1952.5 761.2 1957.2 763.8C1961.9 766.3 1968.3 769.7 1972.8 773.1C1977.4 776.5 1981.3 780.8 1984.5 784.1C1987.8 787.3 1990.6 789.7 1992.3 792.7C1994.1 795.7 1994.9 799.2 1995.1 802.0C1995.3 804.9 1994.0 806.8 1993.5 809.8C1993.1 812.8 1994.2 816.9 1992.3 820.0C1990.5 823.1 1984.0 822.3 1982.3 828.4C1980.6 834.5 1980.7 848.7 1982.3 856.6C1983.8 864.4 1988.9 869.1 1991.7 875.3C1994.4 881.6 1997.3 887.0 1998.7 894.1C2000.1 901.1 1998.7 909.7 1999.9 917.5C2001.0 925.3 2004.5 933.5 2005.7 940.9C2006.9 948.4 2005.7 955.0 2006.9 962.0C2008.1 969.1 2009.4 976.9 2012.7 983.1C2016.1 989.4 2021.7 994.8 2026.8 999.5C2031.9 1004.2 2037.7 1008.1 2043.2 1011.2C2048.7 1014.4 2055.3 1015.2 2059.6 1018.3C2063.9 1021.4 2068.4 1026.4 2069.0 1030.0C2069.6 1033.6 2060.8 1036.8 2063.1 1040.0C2065.5 1043.2 2075.1 1046.4 2083.1 1049.4C2091.1 1052.3 2102.2 1054.6 2111.2 1057.6C2120.2 1060.5 2129.9 1066.0 2137.0 1067.0C2144.0 1067.9 2150.6 1064.0 2153.4 1063.4L2160 1350L950 1350Z"/></clipPath><path d="M958.7 828.0C962.2 827.9 973.1 826.5 979.7 826.9C986.4 827.3 991.9 830.0 998.5 830.4C1005.1 830.8 1013.0 828.6 1019.6 829.2C1026.2 829.8 1031.3 832.7 1038.3 833.9C1045.4 835.1 1053.6 836.8 1061.8 836.2C1070.0 835.7 1080.9 832.9 1087.6 830.4C1094.2 827.9 1096.5 823.4 1101.6 821.0C1106.7 818.6 1113.0 815.5 1118.0 815.9C1123.1 816.2 1127.8 821.5 1132.1 823.4C1136.4 825.2 1138.7 826.5 1143.8 826.9C1148.9 827.3 1155.9 826.3 1162.6 825.7C1169.2 825.1 1175.8 824.5 1183.7 823.4C1191.5 822.2 1202.4 818.3 1209.4 818.7C1216.5 819.1 1220.4 822.8 1225.8 825.7C1231.3 828.6 1236.8 832.5 1242.2 836.2C1247.7 840.0 1253.6 843.9 1258.7 848.0C1263.7 852.1 1267.6 859.7 1272.7 860.9C1277.8 862.0 1282.5 858.1 1289.1 855.0C1295.8 851.9 1304.7 846.2 1312.6 842.1C1320.4 838.0 1328.2 833.7 1336.0 830.4C1343.8 827.1 1349.7 824.7 1359.4 822.2C1369.2 819.6 1382.9 817.1 1394.6 815.2C1406.3 813.2 1416.1 812.0 1429.7 810.5C1443.4 808.9 1461.0 807.5 1476.6 805.8C1492.2 804.0 1509.4 801.9 1523.5 799.9C1537.6 798.0 1553.7 796.3 1561.0 794.1C1568.3 791.8 1558.6 789.1 1567.4 786.2C1576.3 783.4 1598.7 780.8 1614.3 776.9C1629.9 773.0 1645.6 767.1 1661.2 762.8C1676.8 758.5 1694.4 754.2 1708.1 751.1C1721.7 748.0 1731.5 746.2 1743.2 744.1C1754.9 741.9 1764.7 739.8 1778.4 738.2C1792.0 736.6 1815.0 734.5 1825.2 734.2C1835.5 734.0 1833.6 734.5 1840.0 736.8C1846.4 739.1 1855.4 744.2 1863.4 748.1C1871.5 752.0 1883.2 758.5 1888.4 760.2C1893.6 761.9 1892.9 759.3 1894.7 758.3C1896.5 757.3 1898.1 756.1 1899.4 754.4C1900.7 752.7 1901.1 749.8 1902.5 748.1C1903.9 746.5 1906.0 745.1 1908.0 744.4C1909.9 743.7 1911.9 743.2 1914.2 743.8C1916.6 744.5 1919.4 746.6 1922.0 748.1C1924.6 749.6 1927.6 751.6 1929.8 752.8C1932.1 754.0 1932.8 754.5 1935.3 755.3C1937.8 756.2 1941.0 756.5 1944.7 757.9C1948.3 759.3 1952.5 761.2 1957.2 763.8C1961.9 766.3 1968.3 769.7 1972.8 773.1C1977.4 776.5 1981.3 780.8 1984.5 784.1C1987.8 787.3 1990.6 789.7 1992.3 792.7C1994.1 795.7 1994.9 799.2 1995.1 802.0C1995.3 804.9 1994.0 806.8 1993.5 809.8C1993.1 812.8 1994.2 816.9 1992.3 820.0C1990.5 823.1 1984.0 822.3 1982.3 828.4C1980.6 834.5 1980.7 848.7 1982.3 856.6C1983.8 864.4 1988.9 869.1 1991.7 875.3C1994.4 881.6 1997.3 887.0 1998.7 894.1C2000.1 901.1 1998.7 909.7 1999.9 917.5C2001.0 925.3 2004.5 933.5 2005.7 940.9C2006.9 948.4 2005.7 955.0 2006.9 962.0C2008.1 969.1 2009.4 976.9 2012.7 983.1C2016.1 989.4 2021.7 994.8 2026.8 999.5C2031.9 1004.2 2037.7 1008.1 2043.2 1011.2C2048.7 1014.4 2055.3 1015.2 2059.6 1018.3C2063.9 1021.4 2068.4 1026.4 2069.0 1030.0C2069.6 1033.6 2060.8 1036.8 2063.1 1040.0C2065.5 1043.2 2075.1 1046.4 2083.1 1049.4C2091.1 1052.3 2102.2 1054.6 2111.2 1057.6C2120.2 1060.5 2129.9 1066.0 2137.0 1067.0C2144.0 1067.9 2150.6 1064.0 2153.4 1063.4L2160 1350L950 1350Z" fill="#f4f5f0"/><g clip-path="url(#lc)"><path d="M1272.7 860.9C1274.8 858.0 1282.5 858.1 1289.1 855.0C1295.8 851.9 1304.7 846.2 1312.6 842.1C1320.4 838.0 1328.2 833.7 1336.0 830.4C1343.8 827.1 1349.7 824.7 1359.4 822.2C1369.2 819.6 1382.9 817.1 1394.6 815.2C1406.3 813.2 1416.1 812.0 1429.7 810.5C1443.4 808.9 1461.0 807.5 1476.6 805.8C1492.2 804.0 1509.4 801.9 1523.5 799.9C1537.6 798.0 1553.7 796.3 1561.0 794.1C1568.3 791.8 1558.6 789.1 1567.4 786.2C1576.3 783.4 1598.7 780.8 1614.3 776.9C1629.9 773.0 1645.6 767.1 1661.2 762.8C1676.8 758.5 1694.4 754.2 1708.1 751.1C1721.7 748.0 1731.5 746.2 1743.2 744.1C1754.9 741.9 1771.8 737.3 1778.4 738.2C1784.9 739.1 1787.6 746.4 1782.4 749.2C1777.2 752.0 1758.9 752.9 1747.2 755.1C1735.5 757.2 1725.7 759.0 1712.1 762.1C1698.4 765.2 1680.8 769.5 1665.2 773.8C1649.6 778.1 1633.9 784.0 1618.3 787.9C1602.7 791.8 1580.3 794.4 1571.4 797.2C1562.6 800.1 1572.3 802.8 1565.0 805.1C1557.7 807.3 1541.6 809.0 1527.5 810.9C1513.4 812.9 1496.2 815.0 1480.6 816.8C1465.0 818.5 1447.4 819.9 1433.7 821.5C1420.1 823.0 1410.3 824.2 1398.6 826.2C1386.9 828.1 1373.2 830.6 1363.4 833.2C1353.7 835.7 1347.8 838.1 1340.0 841.4C1332.2 844.7 1324.4 849.0 1316.6 853.1C1308.7 857.2 1299.8 862.9 1293.1 866.0C1286.5 869.1 1280.1 872.7 1276.7 871.9C1273.3 871.0 1270.6 863.7 1272.7 860.9Z" fill="#e4ecd9"/><path d="M1045 771h12v6h-12zM1087 771h18v6h-18zM1147 771h30v6h-30zM1795 771h30v6h-30zM1873 771h6v6h-6zM2005 771h12v6h-12zM2035 771h42v6h-42zM2095 771h12v6h-12zM2131 771h24v6h-24zM1027 777h18v6h-18zM1147 777h30v6h-30zM1873 777h6v6h-6zM2035 777h36v6h-36zM2125 777h30v6h-30zM1021 783h24v6h-24zM1153 783h24v6h-24zM1873 783h12v6h-12zM2035 783h30v6h-30zM2119 783h36v6h-36zM1021 789h24v6h-24zM1153 789h24v6h-24zM1603 789h6v6h-6zM1873 789h18v6h-18zM1915 789h6v6h-6zM2035 789h30v6h-30zM2125 789h30v6h-30zM1015 795h30v6h-30zM1147 795h30v6h-30zM2035 795h30v6h-30zM2137 795h18v6h-18zM1015 801h30v6h-30zM1153 801h18v6h-18zM1813 801h6v6h-6zM2035 801h30v6h-30zM2137 801h18v6h-18zM1015 807h66v6h-66zM2035 807h30v6h-30zM2137 807h18v6h-18zM1003 813h126v6h-126zM1195 813h12v6h-12zM1471 813h6v6h-6zM2035 813h30v6h-30zM2143 813h12v6h-12zM985 819h144v6h-144zM1189 819h24v6h-24zM1225 819h18v6h-18zM1465 819h18v6h-18zM1531 819h12v6h-12zM2035 819h24v6h-24zM2143 819h12v6h-12zM961 825h6v6h-6zM1003 825h114v6h-114zM1189 825h54v6h-54zM1531 825h18v6h-18zM1825 825h12v6h-12zM2035 825h30v6h-30zM2137 825h18v6h-18zM961 831h12v6h-12zM1009 831h102v6h-102zM1189 831h54v6h-54zM1531 831h18v6h-18zM1573 831h6v6h-6zM1603 831h6v6h-6zM1825 831h12v6h-12zM2035 831h36v6h-36zM2137 831h12v6h-12zM961 837h6v6h-6zM1009 837h132v6h-132zM1189 837h54v6h-54zM1531 837h24v6h-24zM1603 837h6v6h-6zM2035 837h18v6h-18zM961 843h6v6h-6zM1009 843h54v6h-54zM1069 843h78v6h-78zM1189 843h54v6h-54zM1291 843h18v6h-18zM1525 843h30v6h-30zM1675 843h30v6h-30zM961 849h6v6h-6zM1009 849h54v6h-54zM1075 849h72v6h-72zM1189 849h54v6h-54zM1285 849h30v6h-30zM1327 849h18v6h-18zM1501 849h6v6h-6zM1525 849h30v6h-30zM1597 849h24v6h-24zM1675 849h36v6h-36zM1753 849h6v6h-6zM2095 849h24v6h-24zM961 855h6v6h-6zM1003 855h48v6h-48zM1057 855h6v6h-6zM1069 855h18v6h-18zM1105 855h36v6h-36zM1183 855h66v6h-66zM1279 855h114v6h-114zM1495 855h66v6h-66zM1585 855h174v6h-174zM2077 855h48v6h-48zM961 861h6v6h-6zM997 861h54v6h-54zM1057 861h30v6h-30zM1111 861h24v6h-24zM1183 861h72v6h-72zM1273 861h120v6h-120zM1495 861h60v6h-60zM1573 861h132v6h-132zM1711 861h48v6h-48zM2071 861h24v6h-24zM2107 861h18v6h-18zM961 867h6v6h-6zM997 867h96v6h-96zM1111 867h30v6h-30zM1183 867h66v6h-66zM1273 867h114v6h-114zM1501 867h60v6h-60zM1573 867h132v6h-132zM1717 867h42v6h-42zM1933 867h6v6h-6zM2077 867h18v6h-18zM2107 867h18v6h-18zM961 873h18v6h-18zM1003 873h102v6h-102zM1117 873h30v6h-30zM1177 873h54v6h-54zM1255 873h132v6h-132zM1513 873h48v6h-48zM1579 873h66v6h-66zM1663 873h30v6h-30zM1717 873h42v6h-42zM1933 873h12v6h-12zM2107 873h24v6h-24zM961 879h18v6h-18zM1003 879h144v6h-144zM1171 879h30v6h-30zM1207 879h12v6h-12zM1255 879h30v6h-30zM1291 879h42v6h-42zM1525 879h36v6h-36zM1585 879h18v6h-18zM1609 879h36v6h-36zM1651 879h108v6h-108zM1933 879h6v6h-6zM1963 879h6v6h-6zM2107 879h30v6h-30zM961 885h12v6h-12zM991 885h6v6h-6zM1009 885h132v6h-132zM1165 885h30v6h-30zM1207 885h6v6h-6zM1261 885h24v6h-24zM1303 885h36v6h-36zM1459 885h18v6h-18zM1525 885h30v6h-30zM1585 885h12v6h-12zM1609 885h36v6h-36zM1657 885h72v6h-72zM1747 885h6v6h-6zM1873 885h12v6h-12zM1987 885h12v6h-12zM2107 885h30v6h-30zM961 891h12v6h-12zM985 891h12v6h-12zM1009 891h126v6h-126zM1165 891h24v6h-24zM1267 891h12v6h-12zM1303 891h6v6h-6zM1327 891h18v6h-18zM1459 891h18v6h-18zM1525 891h24v6h-24zM1585 891h12v6h-12zM1609 891h30v6h-30zM1657 891h66v6h-66zM1867 891h24v6h-24zM1969 891h36v6h-36zM2107 891h30v6h-30zM961 897h12v6h-12zM985 897h12v6h-12zM1009 897h138v6h-138zM1165 897h30v6h-30zM1273 897h6v6h-6zM1321 897h24v6h-24zM1459 897h18v6h-18zM1531 897h24v6h-24zM1609 897h30v6h-30zM1657 897h72v6h-72zM1873 897h12v6h-12zM1969 897h36v6h-36zM2107 897h30v6h-30zM973 903h96v6h-96zM1075 903h42v6h-42zM1129 903h24v6h-24zM1159 903h36v6h-36zM1309 903h48v6h-48zM1471 903h12v6h-12zM1537 903h18v6h-18zM1609 903h30v6h-30zM1657 903h96v6h-96zM1969 903h30v6h-30zM2107 903h24v6h-24zM2137 903h12v6h-12zM973 909h96v6h-96zM1129 909h60v6h-60zM1309 909h48v6h-48zM1441 909h6v6h-6zM1477 909h6v6h-6zM1543 909h12v6h-12zM1609 909h30v6h-30zM1657 909h96v6h-96zM1945 909h12v6h-12zM1969 909h30v6h-30zM2107 909h24v6h-24zM2137 909h18v6h-18zM973 915h96v6h-96zM1129 915h60v6h-60zM1297 915h78v6h-78zM1423 915h12v6h-12zM1465 915h24v6h-24zM1585 915h114v6h-114zM1945 915h54v6h-54zM2089 915h60v6h-60zM973 921h96v6h-96zM1129 921h60v6h-60zM1291 921h90v6h-90zM1411 921h30v6h-30zM1465 921h24v6h-24zM1555 921h18v6h-18zM1579 921h114v6h-114zM1945 921h30v6h-30zM1987 921h18v6h-18zM2071 921h12v6h-12zM2089 921h54v6h-54zM2149 921h6v6h-6zM973 927h90v6h-90zM1123 927h66v6h-66zM1291 927h96v6h-96zM1405 927h42v6h-42zM1465 927h24v6h-24zM1561 927h132v6h-132zM1945 927h60v6h-60zM2071 927h78v6h-78zM979 933h78v6h-78zM1117 933h54v6h-54zM1297 933h120v6h-120zM1435 933h12v6h-12zM1465 933h18v6h-18zM1567 933h78v6h-78zM1657 933h30v6h-30zM1945 933h18v6h-18zM1969 933h36v6h-36zM2077 933h36v6h-36zM2143 933h6v6h-6zM979 939h72v6h-72zM1117 939h48v6h-48zM1297 939h120v6h-120zM1465 939h12v6h-12zM1573 939h6v6h-6zM1603 939h42v6h-42zM1657 939h24v6h-24zM1945 939h18v6h-18zM1969 939h30v6h-30zM2077 939h48v6h-48zM979 945h36v6h-36zM1027 945h18v6h-18zM1111 945h54v6h-54zM1255 945h12v6h-12zM1327 945h36v6h-36zM1369 945h48v6h-48zM1459 945h18v6h-18zM1609 945h24v6h-24zM1651 945h6v6h-6zM1723 945h30v6h-30zM1963 945h24v6h-24zM2077 945h60v6h-60zM979 951h30v6h-30zM1027 951h18v6h-18zM1105 951h54v6h-54zM1207 951h66v6h-66zM1327 951h24v6h-24zM1369 951h54v6h-54zM1459 951h18v6h-18zM1609 951h12v6h-12zM1645 951h12v6h-12zM1717 951h36v6h-36zM1963 951h24v6h-24zM2077 951h60v6h-60zM1033 957h6v6h-6zM1105 957h48v6h-48zM1219 957h18v6h-18zM1243 957h36v6h-36zM1327 957h30v6h-30zM1375 957h48v6h-48zM1465 957h12v6h-12zM1717 957h36v6h-36zM2077 957h60v6h-60zM1033 963h12v6h-12zM1069 963h6v6h-6zM1105 963h42v6h-42zM1195 963h12v6h-12zM1225 963h12v6h-12zM1249 963h30v6h-30zM1339 963h18v6h-18zM1381 963h42v6h-42zM1477 963h12v6h-12zM1717 963h36v6h-36zM2077 963h66v6h-66zM1069 969h6v6h-6zM1111 969h36v6h-36zM1225 969h12v6h-12zM1249 969h30v6h-30zM1339 969h24v6h-24zM1381 969h42v6h-42zM1477 969h18v6h-18zM1711 969h42v6h-42zM2077 969h66v6h-66zM1063 975h6v6h-6zM1117 975h36v6h-36zM1165 975h6v6h-6zM1225 975h54v6h-54zM1327 975h36v6h-36zM1369 975h54v6h-54zM1453 975h24v6h-24zM1495 975h30v6h-30zM1609 975h42v6h-42zM1699 975h54v6h-54zM2083 975h24v6h-24zM2119 975h24v6h-24zM961 981h6v6h-6zM997 981h12v6h-12zM1063 981h6v6h-6zM1123 981h54v6h-54zM1219 981h60v6h-60zM1327 981h90v6h-90zM1453 981h24v6h-24zM1489 981h54v6h-54zM1609 981h144v6h-144zM1831 981h6v6h-6zM2071 981h6v6h-6zM2095 981h6v6h-6zM2125 981h24v6h-24zM961 987h12v6h-12zM979 987h30v6h-30zM1123 987h54v6h-54zM1219 987h60v6h-60zM1321 987h12v6h-12zM1339 987h78v6h-78zM1453 987h102v6h-102zM1609 987h60v6h-60zM1675 987h78v6h-78zM1831 987h24v6h-24zM961 993h42v6h-42zM1117 993h60v6h-60zM1219 993h72v6h-72zM1315 993h18v6h-18zM1339 993h78v6h-78zM1453 993h12v6h-12zM1477 993h78v6h-78zM1609 993h54v6h-54zM1687 993h60v6h-60zM1831 993h24v6h-24zM961 999h42v6h-42zM1123 999h54v6h-54zM1219 999h78v6h-78zM1315 999h18v6h-18zM1339 999h78v6h-78zM1453 999h6v6h-6zM1477 999h78v6h-78zM1603 999h60v6h-60zM1687 999h54v6h-54zM1831 999h24v6h-24zM961 1005h12v6h-12zM1135 1005h12v6h-12zM1165 1005h12v6h-12zM1213 1005h84v6h-84zM1321 1005h6v6h-6zM1345 1005h48v6h-48zM1483 1005h180v6h-180zM1687 1005h54v6h-54zM2125 1005h24v6h-24zM961 1011h12v6h-12zM979 1011h24v6h-24zM1009 1011h654v6h-654zM1687 1011h54v6h-54zM2071 1011h18v6h-18zM2119 1011h36v6h-36zM961 1017h6v6h-6zM1003 1017h102v6h-102zM1111 1017h294v6h-294zM1417 1017h246v6h-246zM1687 1017h36v6h-36zM2071 1017h84v6h-84zM1003 1023h96v6h-96zM1117 1023h18v6h-18zM1159 1023h102v6h-102zM1267 1023h18v6h-18zM1297 1023h108v6h-108zM1417 1023h252v6h-252zM1675 1023h36v6h-36zM2071 1023h84v6h-84zM1003 1029h96v6h-96zM1123 1029h6v6h-6zM1159 1029h102v6h-102zM1267 1029h18v6h-18zM1291 1029h114v6h-114zM1417 1029h288v6h-288zM2071 1029h84v6h-84zM967 1035h12v6h-12zM1003 1035h90v6h-90zM1153 1035h120v6h-120zM1279 1035h396v6h-396zM1693 1035h30v6h-30zM2077 1035h78v6h-78zM967 1041h18v6h-18zM997 1041h90v6h-90zM1105 1041h6v6h-6zM1153 1041h120v6h-120zM1279 1041h114v6h-114zM1405 1041h270v6h-270zM1693 1041h30v6h-30zM1765 1041h24v6h-24zM1843 1041h6v6h-6zM1903 1041h18v6h-18zM2089 1041h66v6h-66zM961 1047h24v6h-24zM997 1047h90v6h-90zM1153 1047h120v6h-120zM1279 1047h114v6h-114zM1405 1047h270v6h-270zM1687 1047h36v6h-36zM1759 1047h30v6h-30zM1843 1047h6v6h-6zM1903 1047h36v6h-36zM2089 1047h60v6h-60zM961 1053h120v6h-120zM1165 1053h198v6h-198zM1369 1053h36v6h-36zM1417 1053h18v6h-18zM1447 1053h270v6h-270zM1729 1053h192v6h-192zM1957 1053h12v6h-12zM2005 1053h12v6h-12zM2095 1053h12v6h-12zM961 1059h114v6h-114zM1171 1059h90v6h-90zM1267 1059h90v6h-90zM1375 1059h30v6h-30zM1423 1059h6v6h-6zM1453 1059h264v6h-264zM1729 1059h192v6h-192zM1957 1059h12v6h-12zM2005 1059h12v6h-12zM2077 1059h6v6h-6zM961 1065h114v6h-114zM1171 1065h90v6h-90zM1267 1065h90v6h-90zM1375 1065h60v6h-60zM1459 1065h258v6h-258zM1729 1065h192v6h-192zM1957 1065h18v6h-18zM2077 1065h18v6h-18zM2119 1065h24v6h-24zM961 1071h114v6h-114zM1093 1071h24v6h-24zM1177 1071h78v6h-78zM1267 1071h90v6h-90zM1369 1071h78v6h-78zM1465 1071h30v6h-30zM1513 1071h210v6h-210zM1729 1071h192v6h-192zM1957 1071h18v6h-18zM2083 1071h12v6h-12zM2119 1071h24v6h-24zM961 1077h156v6h-156zM1171 1077h90v6h-90zM1267 1077h180v6h-180zM1459 1077h36v6h-36zM1513 1077h210v6h-210zM1729 1077h156v6h-156zM1891 1077h36v6h-36zM1957 1077h30v6h-30zM2083 1077h6v6h-6zM961 1083h156v6h-156zM1171 1083h276v6h-276zM1459 1083h36v6h-36zM1513 1083h6v6h-6zM1543 1083h270v6h-270zM1825 1083h60v6h-60zM1909 1083h24v6h-24zM1945 1083h42v6h-42zM961 1089h156v6h-156zM1171 1089h276v6h-276zM1459 1089h36v6h-36zM1543 1089h90v6h-90zM1645 1089h126v6h-126zM1777 1089h24v6h-24zM1831 1089h48v6h-48zM1909 1089h18v6h-18zM1963 1089h30v6h-30zM961 1095h24v6h-24zM1003 1095h60v6h-60zM1069 1095h48v6h-48zM1153 1095h12v6h-12zM1171 1095h90v6h-90zM1273 1095h210v6h-210zM1543 1095h72v6h-72zM1645 1095h126v6h-126zM1831 1095h36v6h-36zM1963 1095h30v6h-30zM961 1101h18v6h-18zM1009 1101h54v6h-54zM1069 1101h48v6h-48zM1141 1101h114v6h-114zM1273 1101h204v6h-204zM1537 1101h78v6h-78zM1645 1101h126v6h-126zM1831 1101h12v6h-12zM1849 1101h12v6h-12zM1963 1101h24v6h-24zM961 1107h162v6h-162zM1141 1107h336v6h-336zM1531 1107h84v6h-84zM1645 1107h126v6h-126zM1969 1107h18v6h-18zM961 1113h162v6h-162zM1165 1113h306v6h-306zM1525 1113h72v6h-72zM1615 1113h18v6h-18zM1645 1113h150v6h-150zM1807 1113h12v6h-12zM1969 1113h18v6h-18zM2143 1113h6v6h-6zM961 1119h180v6h-180zM1165 1119h162v6h-162zM1345 1119h120v6h-120zM1525 1119h66v6h-66zM1615 1119h210v6h-210zM1969 1119h18v6h-18zM2143 1119h12v6h-12zM961 1125h354v6h-354zM1345 1125h114v6h-114zM1525 1125h48v6h-48zM1585 1125h6v6h-6zM1627 1125h12v6h-12zM1645 1125h186v6h-186zM2137 1125h18v6h-18zM961 1131h6v6h-6zM973 1131h192v6h-192zM1171 1131h144v6h-144zM1333 1131h12v6h-12zM1351 1131h102v6h-102zM1525 1131h48v6h-48zM1585 1131h12v6h-12zM1627 1131h6v6h-6zM1645 1131h186v6h-186zM2137 1131h18v6h-18zM979 1137h342v6h-342zM1333 1137h120v6h-120zM1525 1137h42v6h-42zM1645 1137h186v6h-186zM2137 1137h18v6h-18zM979 1143h492v6h-492zM1525 1143h12v6h-12zM1657 1143h174v6h-174zM2137 1143h18v6h-18zM985 1149h492v6h-492zM1657 1149h174v6h-174zM2053 1149h6v6h-6zM2137 1149h18v6h-18zM985 1155h510v6h-510zM1603 1155h6v6h-6zM1657 1155h162v6h-162zM2053 1155h6v6h-6zM2083 1155h6v6h-6zM2107 1155h48v6h-48zM985 1161h510v6h-510zM1507 1161h12v6h-12zM1543 1161h6v6h-6zM1657 1161h150v6h-150zM1945 1161h12v6h-12zM2047 1161h18v6h-18zM2077 1161h18v6h-18zM2107 1161h48v6h-48zM985 1167h546v6h-546zM1603 1167h6v6h-6zM1663 1167h150v6h-150zM1945 1167h6v6h-6zM2047 1167h108v6h-108zM985 1173h498v6h-498zM1489 1173h54v6h-54zM1603 1173h6v6h-6zM1663 1173h174v6h-174zM2023 1173h90v6h-90zM2137 1173h18v6h-18zM985 1179h492v6h-492zM1489 1179h54v6h-54zM1597 1179h18v6h-18zM1663 1179h168v6h-168zM1963 1179h6v6h-6zM2017 1179h90v6h-90zM985 1185h480v6h-480zM1489 1185h36v6h-36zM1537 1185h6v6h-6zM1591 1185h12v6h-12zM1609 1185h6v6h-6zM1651 1185h174v6h-174zM2017 1185h90v6h-90zM961 1191h6v6h-6zM991 1191h24v6h-24zM1033 1191h426v6h-426zM1489 1191h36v6h-36zM1537 1191h6v6h-6zM1585 1191h18v6h-18zM1609 1191h18v6h-18zM1645 1191h90v6h-90zM1771 1191h48v6h-48zM1837 1191h12v6h-12zM1951 1191h6v6h-6zM2005 1191h60v6h-60zM2077 1191h24v6h-24zM979 1197h36v6h-36zM1027 1197h432v6h-432zM1489 1197h36v6h-36zM1537 1197h6v6h-6zM1579 1197h156v6h-156zM1783 1197h42v6h-42zM1837 1197h12v6h-12zM1909 1197h12v6h-12zM1999 1197h66v6h-66zM2077 1197h18v6h-18zM967 1203h48v6h-48zM1021 1203h420v6h-420zM1489 1203h36v6h-36zM1537 1203h6v6h-6zM1579 1203h36v6h-36zM1627 1203h108v6h-108zM1789 1203h54v6h-54zM1903 1203h18v6h-18zM1999 1203h54v6h-54zM2065 1203h12v6h-12zM967 1209h474v6h-474zM1489 1209h36v6h-36zM1537 1209h6v6h-6zM1579 1209h30v6h-30zM1627 1209h18v6h-18zM1657 1209h78v6h-78zM1789 1209h42v6h-42zM1903 1209h12v6h-12zM2005 1209h48v6h-48zM2065 1209h12v6h-12zM961 1215h18v6h-18zM997 1215h456v6h-456zM1483 1215h42v6h-42zM1537 1215h6v6h-6zM1633 1215h12v6h-12zM1669 1215h66v6h-66zM1753 1215h6v6h-6zM1807 1215h18v6h-18zM2023 1215h42v6h-42zM961 1221h12v6h-12zM997 1221h126v6h-126zM1135 1221h210v6h-210zM1351 1221h72v6h-72zM1429 1221h24v6h-24zM1477 1221h42v6h-42zM1537 1221h6v6h-6zM1669 1221h66v6h-66zM1747 1221h18v6h-18zM1813 1221h6v6h-6zM2035 1221h30v6h-30zM2077 1221h24v6h-24zM961 1227h12v6h-12zM997 1227h120v6h-120zM1141 1227h120v6h-120zM1267 1227h54v6h-54zM1327 1227h18v6h-18zM1351 1227h114v6h-114zM1477 1227h48v6h-48zM1537 1227h6v6h-6zM1675 1227h66v6h-66zM1753 1227h12v6h-12zM1777 1227h6v6h-6zM2041 1227h24v6h-24zM2095 1227h6v6h-6zM961 1233h12v6h-12zM997 1233h126v6h-126zM1147 1233h48v6h-48zM1207 1233h18v6h-18zM1267 1233h54v6h-54zM1345 1233h60v6h-60zM1417 1233h48v6h-48zM1477 1233h48v6h-48zM1675 1233h66v6h-66zM1765 1233h12v6h-12zM2035 1233h24v6h-24zM961 1239h12v6h-12zM997 1239h126v6h-126zM1147 1239h78v6h-78zM1267 1239h54v6h-54zM1345 1239h60v6h-60zM1417 1239h48v6h-48zM1477 1239h48v6h-48zM1675 1239h66v6h-66zM1765 1239h6v6h-6zM961 1245h24v6h-24zM997 1245h324v6h-324zM1339 1245h114v6h-114zM1501 1245h24v6h-24zM1669 1245h60v6h-60zM2065 1245h12v6h-12zM967 1251h18v6h-18zM1003 1251h282v6h-282zM1303 1251h150v6h-150zM1501 1251h24v6h-24zM1585 1251h12v6h-12zM1657 1251h66v6h-66zM2065 1251h12v6h-12zM967 1257h12v6h-12zM1003 1257h12v6h-12zM1021 1257h270v6h-270zM1309 1257h72v6h-72zM1399 1257h54v6h-54zM1495 1257h36v6h-36zM1537 1257h6v6h-6zM1585 1257h12v6h-12zM1633 1257h30v6h-30zM1675 1257h48v6h-48zM1837 1257h12v6h-12zM961 1263h6v6h-6zM997 1263h18v6h-18zM1039 1263h180v6h-180zM1231 1263h66v6h-66zM1315 1263h60v6h-60zM1405 1263h54v6h-54zM1489 1263h54v6h-54zM1585 1263h30v6h-30zM1627 1263h36v6h-36zM1681 1263h48v6h-48zM1837 1263h12v6h-12zM961 1269h6v6h-6zM997 1269h12v6h-12zM1039 1269h126v6h-126zM1171 1269h48v6h-48zM1225 1269h72v6h-72zM1315 1269h60v6h-60zM1405 1269h54v6h-54zM1489 1269h54v6h-54zM1555 1269h6v6h-6zM1585 1269h30v6h-30zM1627 1269h30v6h-30zM1681 1269h36v6h-36zM1837 1269h12v6h-12zM1003 1275h6v6h-6zM1039 1275h420v6h-420zM1489 1275h54v6h-54zM1555 1275h78v6h-78zM1639 1275h18v6h-18zM1681 1275h6v6h-6zM1699 1275h24v6h-24zM1003 1281h6v6h-6zM1039 1281h420v6h-420zM1483 1281h48v6h-48zM1537 1281h6v6h-6zM1555 1281h72v6h-72zM1645 1281h12v6h-12zM1681 1281h6v6h-6zM1699 1281h24v6h-24zM1735 1281h12v6h-12zM1975 1281h6v6h-6zM985 1287h30v6h-30zM1039 1287h420v6h-420zM1483 1287h60v6h-60zM1585 1287h42v6h-42zM1705 1287h12v6h-12zM1759 1287h24v6h-24zM1939 1287h18v6h-18zM2083 1287h6v6h-6zM973 1293h60v6h-60zM1039 1293h396v6h-396zM1453 1293h6v6h-6zM1483 1293h30v6h-30zM1519 1293h24v6h-24zM1591 1293h36v6h-36zM1633 1293h24v6h-24zM1669 1293h18v6h-18zM1759 1293h36v6h-36zM1939 1293h18v6h-18zM2071 1293h18v6h-18zM973 1299h60v6h-60zM1039 1299h396v6h-396zM1453 1299h6v6h-6zM1483 1299h30v6h-30zM1519 1299h24v6h-24zM1585 1299h54v6h-54zM1669 1299h18v6h-18zM1753 1299h42v6h-42zM1939 1299h18v6h-18zM2071 1299h24v6h-24zM979 1305h48v6h-48zM1045 1305h108v6h-108zM1165 1305h282v6h-282zM1465 1305h90v6h-90zM1579 1305h54v6h-54zM1663 1305h24v6h-24zM1735 1305h60v6h-60zM1933 1305h30v6h-30zM2077 1305h12v6h-12zM985 1311h42v6h-42zM1051 1311h102v6h-102zM1165 1311h288v6h-288zM1465 1311h102v6h-102zM1579 1311h48v6h-48zM1657 1311h30v6h-30zM1735 1311h60v6h-60zM1933 1311h54v6h-54zM979 1317h42v6h-42zM1069 1317h84v6h-84zM1171 1317h510v6h-510zM1735 1317h60v6h-60zM1933 1317h60v6h-60zM979 1323h30v6h-30zM1069 1323h24v6h-24zM1105 1323h48v6h-48zM1183 1323h210v6h-210zM1405 1323h60v6h-60zM1477 1323h66v6h-66zM1555 1323h108v6h-108zM1675 1323h6v6h-6zM1735 1323h60v6h-60zM1927 1323h60v6h-60zM979 1329h30v6h-30zM1075 1329h18v6h-18zM1105 1329h54v6h-54zM1195 1329h192v6h-192zM1405 1329h60v6h-60zM1477 1329h66v6h-66zM1549 1329h114v6h-114zM1675 1329h6v6h-6zM1741 1329h54v6h-54zM1825 1329h18v6h-18zM1933 1329h12v6h-12zM1957 1329h36v6h-36zM979 1335h36v6h-36zM1075 1335h18v6h-18zM1099 1335h66v6h-66zM1213 1335h168v6h-168zM1411 1335h270v6h-270zM1777 1335h18v6h-18zM1963 1335h36v6h-36zM979 1341h48v6h-48zM1081 1341h90v6h-90zM1219 1341h156v6h-156zM1405 1341h276v6h-276zM1783 1341h12v6h-12zM1969 1341h36v6h-36z" fill="#e0e9d5" stroke="#e0e9d5" stroke-width="3" stroke-linejoin="round"/><path d="M1536.3 1196.9C1544.1 1189.1 1557.3 1181.3 1564.4 1173.4C1571.4 1165.6 1570.6 1154.7 1578.4 1150.0C1586.3 1145.3 1602.7 1142.2 1611.3 1145.3C1619.8 1148.4 1622.2 1161.7 1630.0 1168.8C1637.8 1175.8 1648.8 1182.8 1658.1 1187.5C1667.5 1192.2 1683.1 1191.4 1686.3 1196.9C1689.4 1202.3 1681.6 1212.5 1676.9 1220.3C1672.2 1228.1 1662.8 1234.4 1658.1 1243.8C1653.4 1253.1 1655.0 1268.0 1648.8 1276.6C1642.5 1285.2 1628.4 1287.5 1620.6 1295.3C1612.8 1303.1 1611.3 1318.0 1601.9 1323.4C1592.5 1328.9 1574.5 1331.3 1564.4 1328.1C1554.2 1325.0 1546.4 1314.1 1540.9 1304.7C1535.5 1295.3 1537.0 1280.5 1531.6 1271.9C1526.1 1263.3 1510.5 1261.7 1508.1 1253.1C1505.8 1244.5 1512.8 1229.7 1517.5 1220.3C1522.2 1210.9 1528.4 1204.7 1536.3 1196.9Z" fill="#efece6"/><path d="M2000.3 1023.4C2007.3 1018.0 2033.9 1014.8 2047.2 1018.8C2060.5 1022.7 2076.1 1037.5 2080.0 1046.9C2083.9 1056.3 2079.2 1071.1 2070.6 1075.0C2062.0 1078.9 2039.4 1074.2 2028.4 1070.3C2017.5 1066.4 2009.7 1059.4 2005.0 1051.6C2000.3 1043.8 1993.3 1028.9 2000.3 1023.4Z" fill="#efece6"/><path d="M937 749Q963 740 997 746M937 749Q930 777 925 797M997 746Q1006 746 1030 750M997 746Q1003 772 992 786M1030 750Q1046 752 1067 747M1030 750Q1025 768 1018 788M1030 750Q1069 781 1090 801M1067 747Q1098 748 1126 756M1067 747Q1079 770 1090 801M1126 756Q1144 744 1156 741M1126 756Q1122 768 1111 785M1156 741Q1183 746 1202 756M1156 741Q1183 755 1223 783M1202 756Q1238 739 1266 733M1202 756Q1218 771 1223 783M1202 756Q1227 768 1262 791M1266 733Q1291 739 1320 761M1320 761Q1341 761 1357 750M1357 750Q1371 733 1388 732M1357 750Q1352 783 1341 797M1388 732Q1418 724 1445 734M1388 732Q1384 764 1386 791M1388 732Q1409 759 1435 786M1481 739Q1506 750 1522 746M1481 739Q1490 771 1504 802M1522 746Q1560 752 1580 757M1522 746Q1532 770 1530 805M1580 757Q1599 747 1629 751M1580 757Q1578 777 1573 790M1629 751Q1633 767 1639 797M1674 752Q1704 747 1719 740M1674 752Q1669 776 1662 808M1781 762Q1807 754 1822 753M1822 753Q1843 740 1852 739M1822 753Q1806 758 1806 780M1898 734Q1931 743 1958 744M1898 734Q1899 771 1896 796M1898 734Q1917 762 1946 792M1958 744Q1980 745 2006 744M1958 744Q1952 764 1946 792M2006 744Q2034 742 2056 757M2006 744Q2002 776 2010 793M2056 757Q2063 750 2073 738M2056 757Q2055 785 2044 804M2146 746Q2169 746 2194 744M2194 744Q2182 771 2172 784M925 797Q951 796 992 786M992 786Q1010 784 1018 788M992 786Q976 813 975 853M1018 788Q1052 786 1090 801M1018 788Q1030 810 1041 842M1090 801Q1095 785 1111 785M1111 785Q1140 781 1156 780M1156 780Q1165 805 1160 845M1223 783Q1243 795 1262 791M1223 783Q1210 812 1207 849M1262 791Q1286 801 1297 800M1262 791Q1260 814 1263 833M1262 791Q1271 826 1296 846M1297 800Q1319 806 1341 797M1341 797Q1360 802 1386 791M1386 791Q1393 814 1400 850M1435 786Q1444 804 1447 832M1504 802Q1510 807 1530 805M1504 802Q1511 823 1503 830M1530 805Q1555 805 1573 790M1530 805Q1518 813 1521 832M1573 790Q1601 788 1639 797M1573 790Q1580 813 1580 826M1639 797Q1657 804 1662 808M1639 797Q1625 824 1618 835M1662 808Q1689 789 1711 786M1711 786Q1743 779 1774 788M1711 786Q1710 814 1716 851M1774 788Q1786 789 1806 780M1774 788Q1773 817 1780 844M1806 780Q1826 807 1847 825M1846 795Q1879 796 1896 796M1846 795Q1847 813 1847 825M1896 796Q1926 794 1946 792M1896 796Q1899 827 1890 851M1946 792Q1956 816 1956 853M2010 793Q2026 803 2044 804M2044 804Q2061 788 2078 783M2044 804Q2043 817 2041 846M2078 783Q2114 799 2146 803M2078 783Q2074 810 2083 854M2146 803Q2158 789 2172 784M2146 803Q2174 828 2187 851M2172 784Q2185 813 2187 851M945 852Q957 844 975 853M945 852Q947 872 945 891M975 853Q1001 853 1041 842M975 853Q979 869 993 897M1041 842Q1063 867 1088 896M1074 827Q1099 832 1108 853M1074 827Q1086 870 1088 896M1108 853Q1139 841 1160 845M1108 853Q1121 867 1120 894M1160 845Q1182 839 1207 849M1160 845Q1178 871 1179 887M1207 849Q1230 842 1263 833M1207 849Q1212 873 1218 881M1263 833Q1288 841 1296 846M1263 833Q1261 863 1262 888M1263 833Q1275 864 1293 889M1296 846Q1302 867 1293 889M1339 831Q1358 858 1367 896M1400 850Q1424 835 1447 832M1400 850Q1397 865 1405 882M1447 832Q1484 834 1503 830M1503 830Q1504 835 1521 832M1503 830Q1491 854 1488 895M1521 832Q1549 837 1580 826M1521 832Q1518 860 1524 893M1580 826Q1579 861 1568 888M1618 835Q1644 829 1676 828M1618 835Q1630 853 1627 877M1676 828Q1688 837 1716 851M1676 828Q1670 850 1680 885M1716 851Q1745 846 1780 844M1716 851Q1713 878 1723 898M1780 844Q1763 852 1759 870M1818 842Q1831 831 1847 825M1847 825Q1866 833 1890 851M1847 825Q1840 852 1849 875M1956 853Q1976 843 1982 843M1956 853Q1955 883 1948 897M1982 843Q2014 837 2041 846M1982 843Q1984 859 1991 890M2041 846Q2062 846 2083 854M2041 846Q2035 864 2033 883M2083 854Q2097 840 2121 840M2083 854Q2088 869 2097 897M2121 840Q2155 849 2187 851M2121 840Q2131 859 2145 882M2121 840Q2150 852 2182 879M2187 851Q2186 865 2182 879M945 891Q965 886 993 897M945 891Q943 912 927 931M993 897Q1004 893 1026 891M993 897Q1002 917 994 941M1088 896Q1102 893 1120 894M1088 896Q1085 915 1069 921M1120 894Q1113 909 1121 924M1179 887Q1207 878 1218 881M1179 887Q1164 911 1159 928M1218 881Q1241 883 1262 888M1218 881Q1218 909 1218 931M1262 888Q1279 895 1293 889M1293 889Q1337 889 1367 896M1293 889Q1310 913 1320 930M1367 896Q1355 907 1339 917M1405 882Q1424 889 1451 887M1405 882Q1402 895 1409 917M1451 887Q1470 885 1488 895M1451 887Q1443 903 1450 933M1488 895Q1505 899 1524 893M1488 895Q1480 924 1484 940M1524 893Q1541 890 1568 888M1568 888Q1593 886 1627 877M1568 888Q1571 907 1581 917M1627 877Q1631 904 1638 923M1680 885Q1700 910 1724 929M1723 898Q1735 875 1759 870M1723 898Q1732 922 1724 929M1759 870Q1781 883 1806 890M1759 870Q1772 912 1770 936M1759 870Q1794 901 1821 945M1806 890Q1824 887 1849 875M1806 890Q1832 898 1864 922M1849 875Q1882 880 1916 890M1849 875Q1862 905 1864 922M1916 890Q1934 898 1948 897M1948 897Q1970 899 1991 890M1948 897Q1936 906 1935 930M1991 890Q2012 880 2033 883M1991 890Q1988 907 2002 921M2033 883Q2061 885 2097 897M2033 883Q2032 900 2035 926M2033 883Q2056 914 2094 932M2097 897Q2114 884 2145 882M2097 897Q2104 909 2094 932M2145 882Q2162 886 2182 879M2145 882Q2133 911 2137 939M2182 879Q2176 918 2177 940M1036 945Q1047 926 1069 921M1036 945Q1025 965 1019 976M1069 921Q1086 917 1121 924M1069 921Q1094 956 1118 979M1218 931Q1231 952 1227 976M1254 941Q1295 927 1320 930M1254 941Q1255 953 1265 968M1320 930Q1335 921 1339 917M1320 930Q1314 954 1313 987M1339 917Q1367 914 1409 917M1409 917Q1403 947 1389 989M1409 917Q1427 952 1458 991M1450 933Q1458 936 1484 940M1450 933Q1451 963 1458 991M1484 940Q1510 927 1522 920M1484 940Q1516 963 1531 989M1522 920Q1524 958 1531 989M1581 917Q1612 928 1638 923M1581 917Q1581 942 1593 972M1638 923Q1653 918 1663 917M1638 923Q1622 951 1615 975M1663 917Q1669 952 1676 985M1663 917Q1697 944 1720 963M1724 929Q1750 931 1770 936M1724 929Q1717 948 1720 963M1770 936Q1787 942 1821 945M1770 936Q1774 951 1775 964M1821 945Q1842 942 1864 922M1903 921Q1907 944 1893 966M1935 930Q1951 963 1950 984M2002 921Q2028 916 2035 926M2035 926Q2070 928 2094 932M2035 926Q2052 946 2055 977M2094 932Q2108 936 2137 939M2137 939Q2163 946 2177 940M950 965Q944 987 942 1024M950 965Q969 1001 994 1025M997 984Q990 1002 994 1025M1019 976Q1057 975 1080 989M1080 989Q1106 988 1118 979M1080 989Q1086 1011 1086 1035M1080 989Q1094 1008 1113 1034M1118 979Q1145 984 1179 986M1118 979Q1110 1000 1113 1034M1179 986Q1197 974 1227 976M1227 976Q1240 981 1265 968M1227 976Q1226 992 1216 1014M1265 968Q1282 980 1313 987M1265 968Q1269 994 1261 1023M1313 987Q1342 982 1356 984M1313 987Q1306 999 1309 1009M1356 984Q1368 1007 1366 1023M1389 989Q1397 1012 1395 1032M1458 991Q1473 985 1491 986M1458 991Q1460 1003 1446 1023M1491 986Q1506 986 1531 989M1491 986Q1501 993 1496 1010M1531 989Q1567 987 1593 972M1531 989Q1535 998 1537 1020M1593 972Q1602 972 1615 975M1615 975Q1653 988 1676 985M1615 975Q1621 998 1621 1022M1676 985Q1694 977 1720 963M1676 985Q1678 1012 1663 1021M1720 963Q1753 966 1775 964M1720 963Q1734 991 1729 1035M1775 964Q1801 960 1821 967M1821 967Q1831 975 1853 986M1821 967Q1840 992 1871 1012M1853 986Q1877 972 1893 966M1893 966Q1902 979 1912 1009M1950 984Q1973 1001 2002 1018M2006 983Q2024 985 2055 977M2006 983Q2004 993 2002 1018M2055 977Q2071 971 2101 965M2055 977Q2052 997 2038 1027M2101 965Q2108 970 2126 978M2101 965Q2088 1004 2076 1030M2101 965Q2118 988 2123 1023M2126 978Q2122 1003 2123 1023M942 1024Q959 1018 994 1025M994 1025Q1003 1023 1024 1019M994 1025Q980 1042 980 1066M1024 1019Q1062 1019 1086 1035M1024 1019Q1020 1035 1031 1059M1024 1019Q1053 1043 1067 1073M1086 1035Q1103 1041 1113 1034M1113 1034Q1155 1027 1182 1024M1113 1034Q1124 1047 1126 1070M1182 1024Q1199 1016 1216 1014M1182 1024Q1179 1040 1179 1072M1216 1014Q1239 1019 1261 1023M1216 1014Q1215 1030 1225 1061M1261 1023Q1285 1011 1309 1009M1309 1009Q1336 1025 1366 1023M1309 1009Q1315 1044 1318 1063M1366 1023Q1378 1024 1395 1032M1366 1023Q1358 1049 1346 1082M1395 1032Q1425 1019 1446 1023M1395 1032Q1388 1054 1390 1084M1446 1023Q1477 1015 1496 1010M1446 1023Q1454 1033 1456 1058M1496 1010Q1486 1049 1482 1076M1537 1020Q1558 1033 1596 1036M1537 1020Q1535 1040 1529 1057M1596 1036Q1600 1037 1621 1022M1621 1022Q1646 1020 1663 1021M1621 1022Q1638 1047 1637 1058M1621 1022Q1651 1047 1671 1075M1663 1021Q1666 1047 1671 1075M1663 1021Q1681 1045 1706 1060M1729 1035Q1740 1032 1765 1018M1729 1035Q1718 1041 1706 1060M1729 1035Q1747 1066 1771 1081M1765 1018Q1792 1017 1803 1027M1765 1018Q1769 1056 1771 1081M1765 1018Q1802 1037 1826 1057M1803 1027Q1836 1017 1871 1012M1803 1027Q1822 1042 1826 1057M1871 1012Q1897 1003 1912 1009M1912 1009Q1921 1009 1941 1015M1912 1009Q1906 1043 1904 1075M1941 1015Q1973 1022 2002 1018M1941 1015Q1942 1035 1941 1056M2002 1018Q2023 1017 2038 1027M2002 1018Q1997 1038 1984 1055M2038 1027Q2063 1026 2076 1030M2038 1027Q2039 1050 2044 1069M2123 1023Q2143 1023 2173 1014M2123 1023Q2120 1048 2125 1060M2123 1023Q2160 1055 2190 1084M2173 1014Q2178 1043 2190 1084M980 1066Q1011 1058 1031 1059M980 1066Q976 1099 971 1129M980 1066Q1009 1096 1029 1123M1067 1073Q1105 1075 1126 1070M1067 1073Q1075 1098 1071 1114M1126 1070Q1144 1072 1179 1072M1126 1070Q1121 1087 1122 1113M1179 1072Q1198 1063 1225 1061M1179 1072Q1175 1093 1171 1100M1267 1078Q1297 1072 1318 1063M1267 1078Q1266 1101 1250 1114M1318 1063Q1340 1070 1346 1082M1346 1082Q1366 1087 1390 1084M1390 1084Q1420 1066 1456 1058M1390 1084Q1431 1107 1456 1124M1456 1058Q1476 1060 1482 1076M1456 1058Q1449 1100 1456 1124M1482 1076Q1492 1093 1496 1126M1482 1076Q1512 1103 1540 1112M1529 1057Q1567 1067 1592 1067M1529 1057Q1527 1085 1540 1112M1592 1067Q1612 1062 1637 1058M1592 1067Q1592 1089 1585 1115M1637 1058Q1654 1067 1671 1075M1671 1075Q1685 1064 1706 1060M1671 1075Q1677 1110 1667 1127M1771 1081Q1799 1071 1826 1057M1771 1081Q1775 1099 1775 1112M1826 1057Q1842 1075 1858 1077M1826 1057Q1818 1099 1824 1126M1858 1077Q1873 1082 1904 1075M1858 1077Q1861 1101 1864 1123M1904 1075Q1900 1099 1912 1112M1941 1056Q1946 1076 1957 1102M1941 1056Q1971 1081 1991 1114M1984 1055Q2014 1059 2044 1069M1984 1055Q1987 1080 1991 1114M2044 1069Q2061 1059 2090 1058M2044 1069Q2041 1087 2027 1111M2090 1058Q2103 1060 2125 1060M2090 1058Q2098 1083 2092 1119M2125 1060Q2154 1076 2190 1084M2125 1060Q2130 1095 2126 1128M2125 1060Q2160 1081 2185 1110M2190 1084Q2186 1106 2185 1110M951 1103Q958 1123 971 1129M971 1129Q1005 1131 1029 1123M971 1129Q983 1141 985 1158M1029 1123Q1054 1118 1071 1114M1029 1123Q1055 1144 1082 1169M1071 1114Q1104 1107 1122 1113M1071 1114Q1083 1150 1082 1169M1122 1113Q1154 1100 1171 1100M1122 1113Q1137 1124 1136 1147M1171 1100Q1202 1117 1220 1125M1220 1125Q1228 1115 1250 1114M1220 1125Q1228 1136 1247 1152M1250 1114Q1278 1107 1313 1112M1250 1114Q1249 1133 1247 1152M1313 1112Q1316 1123 1302 1149M1343 1105Q1367 1107 1398 1100M1398 1100Q1424 1113 1456 1124M1398 1100Q1404 1139 1400 1161M1456 1124Q1482 1124 1496 1126M1456 1124Q1465 1152 1458 1163M1456 1124Q1485 1143 1505 1165M1496 1126Q1512 1113 1540 1112M1540 1112Q1557 1119 1585 1115M1540 1112Q1545 1130 1545 1148M1585 1115Q1610 1111 1642 1124M1585 1115Q1587 1140 1585 1169M1642 1124Q1651 1123 1667 1127M1667 1127Q1698 1125 1727 1123M1667 1127Q1673 1139 1664 1160M1775 1112Q1808 1115 1824 1126M1775 1112Q1776 1125 1769 1148M1824 1126Q1852 1121 1864 1123M1824 1126Q1828 1140 1825 1159M1864 1123Q1896 1118 1912 1112M1864 1123Q1852 1143 1859 1164M1912 1112Q1937 1106 1957 1102M1912 1112Q1906 1133 1900 1155M1957 1102Q1955 1125 1955 1163M1991 1114Q2015 1118 2027 1111M1991 1114Q1998 1141 1990 1167M2027 1111Q2068 1115 2092 1119M2027 1111Q2028 1135 2036 1146M2092 1119Q2104 1118 2126 1128M943 1163Q969 1166 985 1158M943 1163Q950 1175 945 1194M985 1158Q992 1186 999 1220M1045 1165Q1071 1175 1082 1169M1045 1165Q1023 1195 1017 1219M1045 1165Q1068 1192 1074 1206M1082 1169Q1104 1161 1136 1147M1136 1147Q1147 1162 1171 1168M1136 1147Q1143 1178 1136 1199M1171 1168Q1178 1197 1169 1220M1207 1158Q1224 1146 1247 1152M1207 1158Q1219 1177 1221 1206M1247 1152Q1261 1181 1274 1217M1302 1149Q1326 1164 1345 1173M1400 1161Q1403 1182 1389 1194M1458 1163Q1482 1164 1505 1165M1458 1163Q1458 1180 1445 1196M1505 1165Q1491 1190 1488 1212M1545 1148Q1557 1150 1585 1169M1545 1148Q1540 1182 1535 1200M1585 1169Q1598 1167 1614 1174M1585 1169Q1593 1180 1584 1205M1614 1174Q1644 1168 1664 1160M1614 1174Q1633 1198 1636 1208M1664 1160Q1696 1161 1710 1161M1664 1160Q1681 1182 1689 1221M1710 1161Q1736 1158 1769 1148M1769 1148Q1766 1182 1754 1219M1825 1159Q1842 1169 1859 1164M1825 1159Q1832 1175 1854 1200M1859 1164Q1878 1153 1900 1155M1859 1164Q1858 1186 1854 1200M1900 1155Q1931 1161 1955 1163M1900 1155Q1909 1175 1910 1209M1900 1155Q1926 1174 1953 1211M1955 1163Q1970 1165 1990 1167M1955 1163Q1962 1193 1953 1211M1990 1167Q2009 1166 2036 1146M1990 1167Q1993 1178 2004 1198M2036 1146Q2057 1145 2080 1147M2080 1147Q2089 1180 2100 1218M2124 1169Q2147 1173 2177 1173M2124 1169Q2118 1186 2120 1194M2177 1173Q2182 1188 2173 1205M945 1194Q979 1215 999 1220M999 1220Q1012 1216 1017 1219M1017 1219Q1049 1212 1074 1206M1017 1219Q1012 1244 1018 1258M1074 1206Q1080 1223 1078 1257M1136 1199Q1129 1221 1118 1252M1169 1220Q1171 1226 1159 1248M1274 1217Q1296 1211 1309 1195M1309 1195Q1336 1202 1356 1206M1309 1195Q1321 1220 1315 1257M1356 1206Q1376 1208 1389 1194M1356 1206Q1359 1226 1360 1244M1389 1194Q1419 1202 1445 1196M1389 1194Q1389 1225 1396 1246M1445 1196Q1468 1203 1488 1212M1445 1196Q1458 1224 1453 1249M1488 1212Q1516 1198 1535 1200M1488 1212Q1495 1243 1495 1268M1535 1200Q1555 1200 1584 1205M1535 1200Q1524 1225 1531 1254M1584 1205Q1607 1213 1636 1208M1636 1208Q1656 1207 1689 1221M1689 1221Q1708 1213 1727 1199M1689 1221Q1681 1249 1662 1264M1727 1199Q1744 1206 1754 1219M1754 1219Q1784 1214 1821 1211M1821 1211Q1846 1200 1854 1200M1821 1211Q1821 1223 1818 1247M1854 1200Q1881 1203 1910 1209M1910 1209Q1925 1207 1953 1211M1910 1209Q1897 1240 1895 1258M1953 1211Q1976 1199 2004 1198M1953 1211Q1937 1233 1937 1247M1953 1211Q1984 1236 2003 1259M2004 1198Q2012 1201 2034 1221M2004 1198Q2012 1230 2003 1259M2034 1221Q2060 1211 2100 1218M2034 1221Q2029 1228 2035 1242M2100 1218Q2107 1206 2120 1194M2100 1218Q2093 1236 2084 1260M2120 1194Q2143 1195 2173 1205M2120 1194Q2122 1219 2130 1242M2173 1205Q2186 1229 2186 1255M942 1241Q960 1248 985 1240M985 1240Q1005 1249 1018 1258M985 1240Q989 1269 996 1297M1018 1258Q1048 1263 1078 1257M1078 1257Q1094 1246 1118 1252M1118 1252Q1133 1257 1159 1248M1159 1248Q1195 1255 1221 1263M1159 1248Q1161 1278 1160 1295M1221 1263Q1235 1288 1257 1296M1247 1242Q1282 1246 1315 1257M1315 1257Q1315 1270 1297 1301M1360 1244Q1380 1238 1396 1246M1360 1244Q1368 1271 1361 1300M1396 1246Q1426 1242 1453 1249M1396 1246Q1409 1276 1408 1301M1453 1249Q1475 1255 1495 1268M1453 1249Q1446 1269 1434 1307M1495 1268Q1508 1253 1531 1254M1531 1254Q1519 1279 1522 1299M1626 1249Q1635 1262 1662 1264M1626 1249Q1629 1268 1642 1304M1662 1264Q1693 1249 1707 1240M1662 1264Q1678 1269 1683 1286M1707 1240Q1745 1238 1768 1253M1707 1240Q1712 1280 1721 1308M1768 1253Q1787 1250 1818 1247M1818 1247Q1849 1247 1866 1240M1818 1247Q1813 1274 1819 1311M1866 1240Q1865 1275 1846 1303M1895 1258Q1920 1252 1937 1247M1895 1258Q1894 1280 1893 1306M1937 1247Q1962 1262 2003 1259M1937 1247Q1943 1263 1954 1291M2003 1259Q1995 1283 1988 1307M2035 1242Q2055 1245 2084 1260M2035 1242Q2067 1260 2085 1294M2084 1260Q2106 1257 2130 1242M2084 1260Q2089 1282 2085 1294M2130 1242Q2164 1242 2186 1255M2130 1242Q2131 1264 2148 1304M2186 1255Q2176 1269 2180 1300M951 1312Q955 1323 945 1351M951 1312Q970 1322 996 1342M996 1297Q1012 1298 1039 1293M996 1297Q990 1320 996 1342M1039 1293Q1056 1295 1071 1296M1039 1293Q1039 1313 1040 1350M1071 1296Q1100 1295 1135 1311M1135 1311Q1148 1311 1160 1295M1135 1311Q1131 1337 1132 1357M1160 1295Q1193 1287 1210 1295M1160 1295Q1167 1327 1182 1349M1210 1295Q1241 1290 1257 1296M1210 1295Q1219 1328 1215 1351M1210 1295Q1248 1323 1269 1343M1257 1296Q1265 1327 1269 1343M1297 1301Q1336 1310 1361 1300M1361 1300Q1358 1331 1359 1360M1408 1301Q1403 1314 1394 1335M1434 1307Q1462 1299 1501 1292M1501 1292Q1509 1299 1522 1299M1501 1292Q1499 1320 1484 1359M1522 1299Q1544 1291 1583 1301M1522 1299Q1519 1315 1523 1339M1583 1301Q1605 1306 1642 1304M1583 1301Q1577 1329 1570 1349M1642 1304Q1636 1318 1636 1335M1683 1286Q1675 1309 1661 1344M1721 1308Q1724 1326 1723 1357M1721 1308Q1735 1315 1752 1333M1754 1286Q1756 1318 1752 1333M1754 1286Q1771 1303 1803 1337M1819 1311Q1838 1310 1846 1303M1819 1311Q1817 1321 1803 1337M1819 1311Q1837 1323 1850 1352M1846 1303Q1861 1299 1893 1306M1846 1303Q1848 1321 1850 1352M1893 1306Q1893 1325 1907 1337M1954 1291Q1949 1321 1941 1338M1988 1307Q1992 1332 1986 1353M2043 1307Q2063 1296 2085 1294M2043 1307Q2040 1327 2036 1346M2043 1307Q2063 1328 2098 1344M2085 1294Q2125 1304 2148 1304M2085 1294Q2090 1319 2098 1344M2148 1304Q2171 1302 2180 1300M2148 1304Q2137 1328 2127 1357M2180 1300Q2184 1313 2192 1340M945 1351Q964 1340 996 1342M945 1351Q944 1383 939 1405M996 1342Q1016 1353 1040 1350M996 1342Q981 1369 983 1383M1040 1350Q1057 1359 1087 1354M1040 1350Q1066 1364 1085 1388M1087 1354Q1111 1347 1132 1357M1132 1357Q1162 1346 1182 1349M1132 1357Q1130 1374 1123 1391M1182 1349Q1163 1379 1161 1406M1215 1351Q1249 1342 1269 1343M1215 1351Q1209 1375 1219 1383M1269 1343Q1283 1343 1304 1334M1304 1334Q1331 1341 1359 1360M1304 1334Q1311 1374 1302 1400M1359 1360Q1373 1341 1394 1335M1394 1335Q1413 1342 1435 1343M1435 1343Q1452 1345 1484 1359M1484 1359Q1501 1347 1523 1339M1484 1359Q1501 1377 1501 1391M1484 1359Q1516 1384 1540 1406M1523 1339Q1551 1346 1570 1349M1570 1349Q1606 1340 1636 1335M1570 1349Q1570 1373 1575 1392M1636 1335Q1655 1345 1661 1344M1636 1335Q1633 1365 1618 1399M1661 1344Q1688 1343 1723 1357M1723 1357Q1735 1338 1752 1333M1723 1357Q1729 1386 1730 1401M1723 1357Q1734 1375 1753 1384M1752 1333Q1784 1332 1803 1337M1752 1333Q1747 1355 1753 1384M1803 1337Q1830 1336 1850 1352M1803 1337Q1816 1355 1818 1379M1850 1352Q1871 1349 1907 1337M1850 1352Q1845 1370 1857 1390M1907 1337Q1915 1336 1941 1338M1907 1337Q1921 1363 1918 1394M1941 1338Q1944 1367 1961 1385M1941 1338Q1974 1356 2005 1389M1986 1353Q2010 1343 2036 1346M2098 1344Q2112 1356 2127 1357M2098 1344Q2091 1364 2098 1382M2127 1357Q2163 1352 2192 1340M2127 1357Q2136 1380 2135 1392M2127 1357Q2142 1371 2170 1401M2192 1340Q2189 1367 2170 1401M939 1405Q961 1395 983 1383M983 1383Q1005 1390 1016 1404M1123 1391Q1143 1391 1161 1406M1219 1383Q1228 1391 1245 1390M1245 1390Q1277 1393 1302 1400M1302 1400Q1325 1396 1358 1394M1358 1394Q1376 1380 1388 1381M1388 1381Q1408 1383 1439 1384M1439 1384Q1461 1396 1501 1391M1540 1406Q1551 1405 1575 1392M1618 1399Q1643 1406 1659 1401M1730 1401Q1735 1386 1753 1384M1753 1384Q1793 1389 1818 1379M1818 1379Q1831 1382 1857 1390M1857 1390Q1890 1396 1918 1394M1961 1385Q1982 1386 2005 1389M2005 1389Q2029 1387 2055 1379M2055 1379Q2073 1382 2098 1382M2098 1382Q2108 1385 2135 1392M2135 1392Q2144 1389 2170 1401" fill="none" stroke="#fff" stroke-width="2" stroke-linecap="round"/><path d="M1594 1164L1598 1175M1607 1167L1613 1183M1578 1175L1598 1175M1578 1175L1579 1200M1598 1175L1613 1183M1598 1175L1588 1201M1613 1183L1622 1182M1613 1183L1606 1195M1622 1182L1628 1200M1643 1180L1643 1201M1542 1199L1555 1199M1555 1199L1558 1211M1579 1200L1588 1201M1588 1201L1606 1195M1588 1201L1593 1213M1628 1200L1643 1201M1643 1201L1662 1194M1643 1201L1648 1210M1662 1194L1663 1218M1547 1214L1558 1211M1558 1211L1577 1217M1577 1217L1576 1233M1593 1213L1606 1217M1606 1217L1609 1227M1622 1213L1648 1210M1622 1213L1626 1235M1648 1210L1663 1218M1648 1210L1649 1232M1663 1218L1661 1229M1523 1230L1528 1249M1547 1234L1564 1230M1576 1233L1593 1228M1609 1227L1608 1252M1626 1235L1629 1248M1528 1249L1544 1250M1544 1250L1558 1249M1558 1249L1574 1247M1558 1249L1563 1266M1574 1247L1581 1269M1596 1249L1608 1252M1596 1249L1593 1265M1608 1252L1629 1248M1608 1252L1607 1268M1629 1248L1639 1248M1639 1248L1646 1267M1528 1268L1541 1268M1541 1268L1537 1278M1563 1266L1559 1283M1581 1269L1593 1265M1593 1265L1607 1268M1607 1268L1631 1264M1631 1264L1646 1267M1646 1267L1642 1278M1537 1278L1559 1283M1559 1283L1573 1283M1559 1283L1555 1302M1573 1283L1594 1277M1573 1283L1575 1294M1594 1277L1594 1294M1623 1278L1642 1278M1540 1297L1555 1302M1555 1302L1555 1316M1575 1294L1594 1294M1594 1294L1611 1297M1577 1312L1594 1319" fill="none" stroke="#fff" stroke-width="2.200" stroke-linecap="round"/><path d="M1040.0 886.1C1041.7 886.7 1045.8 888.4 1049.9 889.5C1054.1 890.6 1061.8 890.0 1064.9 892.8C1067.9 895.5 1067.9 901.1 1068.2 906.0C1068.4 911.0 1065.1 919.0 1066.5 922.6C1067.9 926.2 1076.7 924.3 1076.4 927.6C1076.2 930.9 1068.7 938.1 1064.9 942.5C1061.0 946.9 1054.6 950.8 1053.3 954.1C1051.9 957.4 1054.6 957.7 1056.6 962.4C1058.5 967.1 1061.5 975.3 1064.9 982.2C1068.2 989.1 1073.1 997.2 1076.4 1003.8C1079.8 1010.4 1083.4 1019.0 1084.7 1022.0" fill="none" stroke="#fff" stroke-width="3" stroke-linecap="round" stroke-linejoin="round"/><path d="M1084.7 1022.0C1088.3 1021.4 1099.9 1020.2 1106.3 1018.7C1112.6 1017.2 1114.6 1014.0 1122.8 1012.9C1131.1 1011.8 1144.9 1011.9 1156.0 1012.1C1167.0 1012.2 1180.8 1012.3 1189.1 1013.7C1197.4 1015.1 1201.3 1017.3 1205.7 1020.3C1210.1 1023.4 1214.0 1030.0 1215.6 1031.9" fill="none" stroke="#fff" stroke-width="3" stroke-linecap="round" stroke-linejoin="round"/><path d="M961.0 1070.5C965.7 1072.8 979.4 1079.8 989.1 1084.5C998.9 1089.2 1007.9 1094.3 1019.6 1098.6C1031.3 1102.9 1048.9 1107.2 1059.4 1110.3C1070.0 1113.4 1077.4 1112.7 1082.9 1117.3C1088.3 1122.0 1091.5 1129.5 1092.2 1138.4C1093.0 1147.4 1086.8 1160.7 1087.6 1171.2C1088.3 1181.8 1094.2 1188.4 1096.9 1201.7C1099.7 1215.0 1102.4 1234.9 1104.0 1250.9C1105.5 1267.0 1105.1 1283.0 1106.3 1297.8C1107.5 1312.7 1110.2 1333.0 1111.0 1340.0" fill="none" stroke="#fff" stroke-width="3" stroke-linecap="round" stroke-linejoin="round"/><path d="M1120.4 1183.0C1127.0 1182.6 1147.7 1181.6 1160.2 1180.6C1172.7 1179.6 1177.0 1179.1 1195.4 1177.1C1213.7 1175.2 1246.2 1172.0 1270.4 1168.9C1294.6 1165.8 1323.5 1161.5 1340.7 1158.4C1357.9 1155.2 1368.0 1151.5 1373.5 1150.2" fill="none" stroke="#fff" stroke-width="3" stroke-linecap="round" stroke-linejoin="round"/><path d="M1270.4 1143.1C1270.6 1147.8 1271.2 1157.2 1271.5 1171.2C1271.9 1185.3 1271.3 1212.3 1272.7 1227.5C1274.1 1242.7 1278.2 1250.9 1279.7 1262.7C1281.3 1274.4 1280.5 1284.9 1282.1 1297.8C1283.7 1310.7 1288.0 1333.0 1289.1 1340.0" fill="none" stroke="#fff" stroke-width="3" stroke-linecap="round" stroke-linejoin="round"/><path d="M1197.7 1180.6C1198.1 1184.5 1198.5 1193.9 1200.1 1204.1C1201.6 1214.2 1205.5 1233.0 1207.1 1241.6C1208.7 1250.2 1209.0 1253.3 1209.4 1255.6" fill="none" stroke="#fff" stroke-width="3" stroke-linecap="round" stroke-linejoin="round"/><path d="M1202.4 1193.5C1211.0 1193.3 1239.5 1191.0 1254.0 1192.3C1268.4 1193.7 1280.1 1198.2 1289.1 1201.7C1298.1 1205.2 1302.8 1211.1 1307.9 1213.4C1313.0 1215.8 1313.3 1217.3 1319.6 1215.8C1325.8 1214.2 1333.3 1208.4 1345.4 1204.1C1357.5 1199.8 1382.1 1193.9 1392.2 1190.0C1402.4 1186.1 1404.0 1182.2 1406.3 1180.6" fill="none" stroke="#fff" stroke-width="3" stroke-linecap="round" stroke-linejoin="round"/><path d="M1345.4 1201.7C1347.7 1206.0 1355.9 1220.9 1359.4 1227.5C1362.9 1234.1 1361.4 1239.6 1366.5 1241.6C1371.5 1243.5 1379.4 1242.3 1389.9 1239.2C1400.4 1236.1 1417.2 1227.5 1429.7 1222.8C1442.2 1218.1 1459.0 1213.0 1464.9 1211.1" fill="none" stroke="#fff" stroke-width="3" stroke-linecap="round" stroke-linejoin="round"/><path d="M1232.9 1236.9C1229.0 1239.2 1217.6 1245.5 1209.4 1250.9C1201.2 1256.4 1189.5 1263.8 1183.7 1269.7C1177.8 1275.5 1175.1 1280.2 1174.3 1286.1C1173.5 1292.0 1176.2 1299.0 1179.0 1304.8C1181.7 1310.7 1188.0 1315.4 1190.7 1321.2C1193.4 1327.1 1194.6 1336.9 1195.4 1340.0" fill="none" stroke="#fff" stroke-width="3" stroke-linecap="round" stroke-linejoin="round"/><path d="M1411.0 1040.0C1410.6 1045.9 1408.3 1063.4 1408.7 1075.2C1409.0 1086.9 1410.2 1100.5 1413.3 1110.3C1416.5 1120.1 1421.5 1127.9 1427.4 1133.7C1433.3 1139.6 1439.1 1142.7 1448.5 1145.5C1457.9 1148.2 1475.1 1152.1 1483.7 1150.2C1492.2 1148.2 1493.4 1138.4 1500.1 1133.7C1506.7 1129.1 1513.3 1124.0 1523.5 1122.0C1533.7 1120.1 1554.7 1122.0 1561.0 1122.0" fill="none" stroke="#fff" stroke-width="3" stroke-linecap="round" stroke-linejoin="round"/><path d="M1483.7 1150.2C1484.0 1143.5 1485.6 1124.8 1486.0 1110.3C1486.4 1095.9 1486.4 1075.2 1486.0 1063.4C1485.6 1051.7 1484.0 1043.9 1483.7 1040.0" fill="none" stroke="#fff" stroke-width="3" stroke-linecap="round" stroke-linejoin="round"/><path d="M1561.0 990.9C1557.9 991.1 1545.8 990.2 1542.2 992.1C1538.7 994.1 1540.3 1000.9 1539.9 1002.7" fill="none" stroke="#fff" stroke-width="3" stroke-linecap="round" stroke-linejoin="round"/><path d="M1544.0 989.0C1549.9 989.6 1565.5 991.1 1579.2 992.5C1592.8 993.9 1608.5 997.2 1626.0 997.2C1643.6 997.2 1669.0 992.1 1684.6 992.5C1700.2 992.9 1708.1 996.4 1719.8 999.5C1731.5 1002.7 1745.2 1007.0 1754.9 1011.2C1764.7 1015.5 1774.5 1023.0 1778.4 1025.3" fill="none" stroke="#fff" stroke-width="3" stroke-linecap="round" stroke-linejoin="round"/><path d="M1654.2 861.2C1655.3 864.8 1658.1 876.1 1661.2 882.3C1664.3 888.6 1669.8 889.8 1672.9 898.7C1676.0 907.7 1677.2 925.3 1679.9 936.2C1682.7 947.2 1686.6 955.8 1689.3 964.4C1692.0 973.0 1695.2 983.9 1696.3 987.8" fill="none" stroke="#fff" stroke-width="3" stroke-linecap="round" stroke-linejoin="round"/><path d="M1736.2 861.2C1737.7 864.4 1742.8 872.2 1745.6 880.0C1748.3 887.8 1749.1 899.9 1752.6 908.1C1756.1 916.3 1764.3 925.7 1766.7 929.2" fill="none" stroke="#fff" stroke-width="3" stroke-linecap="round" stroke-linejoin="round"/><path d="M1792.4 882.3C1794.0 888.2 1799.1 908.5 1801.8 917.5C1804.5 926.5 1810.8 932.3 1808.8 936.2C1806.9 940.2 1794.4 937.8 1790.1 940.9C1785.8 944.1 1781.1 948.0 1783.1 955.0C1785.0 962.0 1796.7 975.3 1801.8 983.1C1806.9 990.9 1807.7 996.0 1813.5 1001.9C1819.4 1007.7 1829.2 1013.6 1837.0 1018.3C1844.8 1023.0 1856.5 1028.0 1860.4 1030.0" fill="none" stroke="#fff" stroke-width="3" stroke-linecap="round" stroke-linejoin="round"/><path d="M1832.3 880.0C1834.6 885.1 1842.4 900.3 1846.3 910.5C1850.2 920.6 1853.4 932.7 1855.7 940.9C1858.1 949.1 1857.7 953.8 1860.4 959.7C1863.1 965.5 1868.2 968.3 1872.1 976.1C1876.0 983.9 1881.9 1001.5 1883.8 1006.6" fill="none" stroke="#fff" stroke-width="3" stroke-linecap="round" stroke-linejoin="round"/><path d="M1811.2 969.1C1815.5 967.9 1828.8 964.4 1837.0 962.0C1845.2 959.7 1856.5 956.2 1860.4 955.0" fill="none" stroke="#fff" stroke-width="3" stroke-linecap="round" stroke-linejoin="round"/><path d="M1860.4 931.6C1866.3 929.6 1887.4 924.5 1895.6 919.8C1903.8 915.2 1904.2 907.7 1909.6 903.4C1915.1 899.1 1925.2 895.6 1928.4 894.1" fill="none" stroke="#fff" stroke-width="3" stroke-linecap="round" stroke-linejoin="round"/><path d="M1956.5 940.9C1960.0 943.3 1970.2 950.3 1977.6 955.0C1985.0 959.7 1995.2 964.4 2001.0 969.1C2006.9 973.7 2010.8 980.8 2012.7 983.1" fill="none" stroke="#fff" stroke-width="3" stroke-linecap="round" stroke-linejoin="round"/><path d="M1694.0 1208.7C1704.2 1209.3 1737.0 1211.3 1754.9 1212.3C1772.9 1213.2 1786.2 1211.7 1801.8 1214.6C1817.4 1217.5 1835.0 1223.8 1848.7 1229.8C1862.4 1235.9 1872.1 1243.5 1883.8 1250.9C1895.6 1258.4 1911.6 1266.6 1919.0 1274.4C1926.4 1282.2 1926.8 1293.9 1928.4 1297.8" fill="none" stroke="#fff" stroke-width="3" stroke-linecap="round" stroke-linejoin="round"/><path d="M1694.0 1208.7C1698.3 1206.0 1709.6 1199.0 1719.8 1192.3C1729.9 1185.7 1741.3 1177.1 1754.9 1168.9C1768.6 1160.7 1786.2 1151.3 1801.8 1143.1C1817.4 1134.9 1835.0 1125.5 1848.7 1119.7C1862.4 1113.8 1872.1 1110.9 1883.8 1108.0C1895.6 1105.0 1913.1 1103.1 1919.0 1102.1" fill="none" stroke="#fff" stroke-width="3" stroke-linecap="round" stroke-linejoin="round"/><path d="M1794.8 1084.5C1799.9 1091.6 1814.3 1111.5 1825.2 1126.7C1836.2 1142.0 1847.9 1159.9 1860.4 1175.9C1872.9 1192.0 1893.6 1215.0 1900.2 1222.8" fill="none" stroke="#fff" stroke-width="3" stroke-linecap="round" stroke-linejoin="round"/><path d="M1754.9 1260.3C1762.7 1258.0 1788.9 1248.8 1801.8 1246.2C1814.7 1243.7 1823.3 1242.3 1832.3 1245.1C1841.3 1247.8 1853.8 1256.2 1855.7 1262.7C1857.7 1269.1 1846.0 1280.2 1844.0 1283.7" fill="none" stroke="#fff" stroke-width="3" stroke-linecap="round" stroke-linejoin="round"/><path d="M1694.0 1084.5C1696.3 1083.7 1702.6 1079.5 1708.1 1079.8C1713.5 1080.2 1721.7 1082.6 1726.8 1086.9C1731.9 1091.2 1735.4 1100.2 1738.5 1105.6C1741.7 1111.1 1741.3 1115.4 1745.6 1119.7C1749.9 1124.0 1756.5 1128.7 1764.3 1131.4C1772.1 1134.1 1787.7 1135.3 1792.4 1136.1" fill="none" stroke="#fff" stroke-width="3" stroke-linecap="round" stroke-linejoin="round"/><path d="M1630.7 1040.0C1631.1 1043.9 1625.6 1058.4 1633.1 1063.4C1640.5 1068.5 1664.3 1068.5 1675.2 1070.5C1686.2 1072.4 1694.8 1074.4 1698.7 1075.2" fill="none" stroke="#fff" stroke-width="3" stroke-linecap="round" stroke-linejoin="round"/><path d="M1982.3 1129.1C1995.2 1128.9 2032.7 1129.8 2059.6 1127.9C2086.6 1125.9 2129.9 1119.1 2144.0 1117.3" fill="none" stroke="#fff" stroke-width="3" stroke-linecap="round" stroke-linejoin="round"/><path d="M1970.6 1286.1C1981.5 1283.4 2022.5 1274.8 2036.2 1269.7C2049.9 1264.6 2044.8 1266.6 2052.6 1255.6C2060.4 1244.7 2073.3 1213.0 2083.1 1204.1C2092.8 1195.1 2101.0 1203.7 2111.2 1201.7C2121.3 1199.8 2138.5 1193.9 2144.0 1192.3" fill="none" stroke="#fff" stroke-width="3" stroke-linecap="round" stroke-linejoin="round"/><path d="M1056.6 839.8C1058.8 834.4 1076.2 831.2 1086.4 827.3C1096.6 823.5 1110.1 817.1 1117.9 816.6C1125.6 816.0 1126.4 821.3 1132.8 824.0C1139.1 826.8 1148.0 828.6 1156.0 833.1C1164.0 837.7 1175.7 845.8 1180.8 851.4C1185.9 856.9 1185.2 856.9 1186.6 866.3C1188.0 875.7 1187.6 898.9 1189.1 907.7C1190.6 916.5 1192.4 915.1 1195.7 919.3C1199.0 923.4 1205.1 927.6 1209.0 932.5C1212.9 937.5 1215.6 943.6 1218.9 949.1C1222.2 954.6 1228.3 960.4 1228.9 965.7C1229.4 970.9 1226.1 975.1 1222.2 980.6C1218.4 986.1 1211.2 993.4 1205.7 998.8C1200.2 1004.2 1202.9 1010.3 1189.1 1012.9C1175.3 1015.5 1138.6 1014.1 1122.8 1014.5C1107.1 1015.0 1101.6 1016.6 1094.7 1015.4C1087.8 1014.1 1082.2 1011.2 1081.4 1007.1C1080.6 1002.9 1091.1 996.0 1089.7 990.5C1088.3 985.0 1077.6 979.5 1073.1 974.0C1068.7 968.4 1064.3 962.4 1063.2 957.4C1062.1 952.4 1064.0 948.3 1066.5 944.1C1069.0 940.0 1073.7 937.2 1078.1 932.5C1082.5 927.8 1090.8 924.8 1093.0 916.0C1095.2 907.1 1094.7 888.9 1091.4 879.5C1088.0 870.1 1078.9 866.3 1073.1 859.6C1067.3 853.0 1054.4 845.1 1056.6 839.8Z" fill="#d1dfbe"/><path d="M1088.0 826.5C1089.6 823.5 1092.7 824.6 1096.3 823.2C1099.9 821.8 1106.0 819.3 1109.6 818.2C1113.2 817.1 1115.1 816.4 1117.9 816.6C1120.6 816.7 1123.7 817.8 1126.1 819.1C1128.6 820.3 1130.6 822.1 1132.8 824.0C1135.0 826.0 1137.2 829.0 1139.4 830.6C1141.6 832.3 1143.3 833.5 1146.0 834.0C1148.8 834.4 1153.8 832.9 1156.0 833.1C1158.2 833.4 1157.6 834.5 1159.3 835.6C1160.9 836.7 1163.7 838.1 1165.9 839.8C1168.1 841.4 1170.1 843.6 1172.5 845.6C1175.0 847.5 1178.8 849.6 1180.8 851.4C1182.9 853.2 1184.1 853.8 1185.0 856.3C1185.8 858.8 1186.2 863.8 1185.8 866.3C1185.4 868.8 1184.7 870.0 1182.5 871.2C1180.3 872.5 1175.6 873.7 1172.5 873.7C1169.5 873.7 1166.5 872.5 1164.3 871.2C1162.0 870.0 1160.7 868.5 1159.3 866.3C1157.9 864.1 1157.6 860.2 1156.0 858.0C1154.3 855.8 1152.1 854.4 1149.3 853.0C1146.6 851.6 1142.7 850.5 1139.4 849.7C1136.1 848.9 1132.2 848.0 1129.5 848.0C1126.7 848.0 1124.8 848.6 1122.8 849.7C1120.9 850.8 1117.3 853.0 1117.9 854.7C1118.4 856.3 1123.1 857.7 1126.1 859.6C1129.2 861.6 1133.3 863.8 1136.1 866.3C1138.9 868.8 1141.5 871.8 1142.7 874.6C1144.0 877.3 1144.4 880.4 1143.5 882.8C1142.7 885.3 1139.5 887.5 1137.7 889.5C1136.0 891.4 1132.5 893.1 1132.8 894.4C1133.1 895.8 1135.5 896.9 1139.4 897.7C1143.3 898.6 1150.4 898.9 1156.0 899.4C1161.5 900.0 1168.1 900.2 1172.5 901.1C1177.0 901.9 1180.3 903.3 1182.5 904.4C1184.7 905.5 1184.7 906.0 1185.8 907.7C1186.9 909.3 1187.4 912.4 1189.1 914.3C1190.8 916.2 1194.6 917.9 1195.7 919.3C1196.8 920.7 1196.8 921.5 1195.7 922.6C1194.6 923.7 1190.8 924.5 1189.1 925.9C1187.4 927.3 1185.2 930.1 1185.8 930.9C1186.3 931.7 1189.4 930.9 1192.4 930.9C1195.5 930.9 1201.3 930.1 1204.0 930.9C1206.8 931.7 1209.0 934.2 1209.0 935.9C1209.0 937.5 1206.2 939.4 1204.0 940.8C1201.8 942.2 1198.8 942.8 1195.7 944.1C1192.7 945.5 1188.3 947.7 1185.8 949.1C1183.3 950.5 1182.2 949.9 1180.8 952.4C1179.4 954.9 1178.6 962.9 1177.5 964.0C1176.4 965.1 1175.3 961.5 1174.2 959.0C1173.1 956.6 1172.0 951.3 1170.9 949.1C1169.8 946.9 1168.9 946.1 1167.6 945.8C1166.2 945.5 1163.1 945.8 1162.6 947.4C1162.0 949.1 1162.9 952.7 1164.3 955.7C1165.6 958.8 1168.7 962.4 1170.9 965.7C1173.1 969.0 1176.1 973.3 1177.5 975.6C1178.9 978.0 1179.6 978.7 1179.2 979.8C1178.8 980.9 1177.0 983.5 1175.0 982.2C1173.1 981.0 1170.2 976.2 1167.6 972.3C1164.9 968.4 1161.2 962.9 1159.3 959.0C1157.4 955.2 1157.6 951.6 1156.0 949.1C1154.3 946.6 1151.6 944.7 1149.3 944.1C1147.1 943.6 1144.4 944.4 1142.7 945.8C1141.1 947.2 1140.2 949.1 1139.4 952.4C1138.6 955.7 1138.6 962.1 1137.7 965.7C1136.9 969.3 1135.8 974.0 1134.4 974.0C1133.1 974.0 1130.8 969.0 1129.5 965.7C1128.1 962.4 1127.8 957.7 1126.1 954.1C1124.5 950.5 1121.7 946.6 1119.5 944.1C1117.3 941.7 1114.8 939.2 1112.9 939.2C1111.0 939.2 1108.5 941.7 1107.9 944.1C1107.4 946.6 1107.9 950.2 1109.6 954.1C1111.2 957.9 1115.1 963.2 1117.9 967.3C1120.6 971.5 1125.0 976.2 1126.1 978.9C1127.3 981.7 1125.9 983.9 1124.5 983.9C1123.1 983.9 1120.9 981.4 1117.9 978.9C1114.8 976.4 1109.6 972.0 1106.3 969.0C1103.0 965.9 1099.9 963.5 1098.0 960.7C1096.1 957.9 1095.4 951.6 1094.7 952.4C1094.0 953.2 1094.7 962.4 1093.8 965.7C1093.0 969.0 1091.5 972.0 1089.7 972.3C1087.9 972.6 1084.9 969.8 1083.1 967.3C1081.3 964.8 1079.8 961.0 1078.9 957.4C1078.1 953.8 1077.7 949.4 1078.1 945.8C1078.5 942.2 1079.5 938.1 1081.4 935.9C1083.4 933.6 1087.5 932.8 1089.7 932.5C1091.9 932.3 1093.6 935.9 1094.7 934.2C1095.8 932.5 1096.5 927.0 1096.3 922.6C1096.2 918.2 1094.4 912.7 1093.8 907.7C1093.3 902.7 1093.4 897.5 1093.0 892.8C1092.6 888.1 1092.3 883.4 1091.4 879.5C1090.4 875.7 1088.2 873.4 1087.2 869.6C1086.3 865.7 1085.6 861.0 1085.6 856.3C1085.6 851.6 1086.8 846.4 1087.2 841.4C1087.6 836.4 1086.5 829.5 1088.0 826.5Z" fill="#b8e4fc"/><path d="M1129.5 906.0C1132.2 904.9 1139.4 902.4 1142.7 902.7C1146.0 903.0 1148.5 904.9 1149.3 907.7C1150.2 910.4 1149.3 917.1 1147.7 919.3C1146.0 921.5 1142.4 921.8 1139.4 920.9C1136.4 920.1 1131.7 916.2 1129.5 914.3C1127.3 912.4 1126.1 910.7 1126.1 909.3C1126.1 908.0 1126.7 907.1 1129.5 906.0Z" fill="#d1dfbe"/><path d="M1119.5 902.7C1120.4 902.2 1123.8 903.3 1124.5 904.4C1125.2 905.5 1124.5 908.8 1123.7 909.3C1122.8 909.9 1120.2 908.8 1119.5 907.7C1118.8 906.6 1118.7 903.3 1119.5 902.7Z" fill="#d1dfbe"/><path d="M1154.3 911.0C1156.5 909.6 1161.5 908.2 1165.9 907.7C1170.3 907.1 1178.1 906.9 1180.8 907.7C1183.6 908.5 1183.9 911.0 1182.5 912.7C1181.1 914.3 1176.4 916.5 1172.5 917.6C1168.7 918.7 1162.6 919.6 1159.3 919.3C1156.0 919.0 1153.5 917.4 1152.7 916.0C1151.8 914.6 1152.1 912.4 1154.3 911.0Z" fill="#d1dfbe"/><path d="M1121.2 884.5C1122.6 883.4 1128.6 882.3 1129.5 883.7C1130.3 885.0 1127.5 891.7 1126.1 892.8C1124.8 893.9 1122.0 891.7 1121.2 890.3C1120.4 888.9 1119.8 885.6 1121.2 884.5Z" fill="#d1dfbe"/><path d="M1122.0 872.9C1122.7 872.1 1125.5 872.6 1126.1 873.7C1126.8 874.8 1126.8 878.7 1126.1 879.5C1125.5 880.4 1122.7 879.8 1122.0 878.7C1121.3 877.6 1121.3 873.7 1122.0 872.9Z" fill="#d1dfbe"/><path d="M1167.6 865.4C1167.8 864.6 1172.4 863.6 1174.2 863.8C1176.0 863.9 1178.6 865.4 1178.3 866.3C1178.1 867.1 1174.3 868.9 1172.5 868.8C1170.7 868.6 1167.3 866.3 1167.6 865.4Z" fill="#d1dfbe"/><path d="M1078.9 892.8C1081.6 889.5 1090.3 887.8 1093.0 892.8C1095.8 897.7 1096.1 916.0 1095.5 922.6C1094.9 929.2 1092.3 931.2 1089.7 932.5C1087.1 933.9 1081.8 934.2 1079.8 930.9C1077.7 927.6 1077.4 919.0 1077.3 912.7C1077.1 906.3 1076.3 896.1 1078.9 892.8Z" fill="#e6eddc"/><path d="M1883.8 1150.2C1886.2 1147.8 1889.7 1145.9 1895.6 1143.1C1901.4 1140.4 1914.3 1139.2 1919.0 1133.7C1923.7 1128.3 1921.7 1114.2 1923.7 1110.3C1925.6 1106.4 1929.9 1107.2 1930.7 1110.3C1931.5 1113.4 1928.4 1123.6 1928.4 1129.1C1928.4 1134.5 1932.3 1139.6 1930.7 1143.1C1929.2 1146.6 1924.1 1149.4 1919.0 1150.2C1913.9 1150.9 1906.5 1146.6 1900.2 1147.8C1894.0 1149.0 1884.2 1156.8 1881.5 1157.2C1878.8 1157.6 1881.5 1152.5 1883.8 1150.2Z" fill="#b8e4fc"/><path d="M1731.5 1272.0C1733.5 1270.3 1739.5 1268.1 1743.2 1268.5C1746.9 1268.9 1752.6 1271.8 1753.8 1274.4C1754.9 1276.9 1752.8 1282.0 1750.2 1283.7C1747.7 1285.5 1741.7 1285.7 1738.5 1284.9C1735.4 1284.1 1732.7 1281.2 1731.5 1279.1C1730.3 1276.9 1729.5 1273.8 1731.5 1272.0Z" fill="#b8e4fc"/><path d="M2052.6 1220.5C2053.4 1212.7 2062.4 1186.5 2066.7 1180.6C2070.9 1174.8 2077.2 1181.4 2078.4 1185.3C2079.5 1189.2 2076.4 1197.0 2073.7 1204.1C2070.9 1211.1 2065.5 1224.8 2062.0 1227.5C2058.4 1230.2 2051.8 1228.3 2052.6 1220.5Z" fill="#b8e4fc"/><path d="M1940.1 1323.6C1942.0 1322.0 1949.5 1320.1 1951.8 1321.2C1954.2 1322.4 1955.3 1328.3 1954.2 1330.6C1953.0 1333.0 1947.1 1335.3 1944.8 1335.3C1942.4 1335.3 1940.9 1332.6 1940.1 1330.6C1939.3 1328.7 1938.1 1325.2 1940.1 1323.6Z" fill="#b8e4fc"/><path d="M1567.4 1321.2C1569.0 1318.9 1575.2 1316.6 1579.2 1318.9C1583.1 1321.2 1590.1 1331.4 1590.9 1335.3C1591.7 1339.2 1587.4 1342.7 1583.8 1342.3C1580.3 1342.0 1572.5 1336.5 1569.8 1333.0C1567.0 1329.5 1565.9 1323.6 1567.4 1321.2Z" fill="#b8e4fc"/><path d="M1401.6 1318.9C1401.6 1316.4 1410.2 1313.0 1415.7 1309.5C1421.2 1306.0 1430.5 1297.4 1434.4 1297.8C1438.3 1298.2 1439.5 1308.0 1439.1 1311.9C1438.7 1315.8 1436.0 1319.1 1432.1 1321.2C1428.2 1323.4 1420.8 1325.2 1415.7 1324.8C1410.6 1324.4 1401.6 1321.4 1401.6 1318.9Z" fill="#b8e4fc"/><path d="M1521.2 1248.6C1524.3 1247.4 1539.1 1247.2 1542.2 1248.6C1545.4 1250.0 1543.0 1255.6 1539.9 1256.8C1536.8 1258.0 1526.6 1257.0 1523.5 1255.6C1520.4 1254.3 1518.0 1249.8 1521.2 1248.6Z" fill="#b8e4fc"/><path d="M1935.3 755.3 1944.7 757.9 1940.8 774.7 1939.2 777.8 1933.8 781.7 1918.1 780.9 1915.8 773.9 1909.5 770.0 1908.0 763.8 1913.4 754.4 1915.0 750.5 1925.9 752.8Z" fill="#bae6fe"/><path d="M1910.3 756.7 1913.4 754.4 1935.7 761.4 1934.9 764.9ZM1909.1 764.5 1910.3 763.8 1933.4 767.7 1932.6 770.8ZM1915.0 773.9 1916.2 772.3 1928.7 775.1 1927.9 778.2Z" fill="#f6f6f3"/><path d="M1118.0 815.9C1115.3 816.7 1106.7 818.6 1101.6 821.0C1096.5 823.4 1090.7 825.5 1087.6 830.4C1084.4 835.3 1085.2 844.3 1082.9 850.3C1080.5 856.4 1078.2 861.6 1073.5 866.7C1068.8 871.8 1061.8 876.9 1054.7 880.8C1047.7 884.7 1038.0 887.6 1031.3 890.2C1024.7 892.7 1020.8 892.5 1014.9 896.0C1009.0 899.5 1002.0 905.6 996.2 911.2C990.3 916.9 986.0 923.4 979.7 930.0C973.5 936.6 962.2 947.6 958.7 951.1" fill="none" stroke="#c9c9c9" stroke-width="2.300" stroke-linecap="round" stroke-linejoin="round"/><path d="M1118.0 815.9C1120.4 817.1 1127.0 820.9 1132.1 823.4C1137.2 825.8 1141.9 829.2 1148.5 830.4C1155.1 831.6 1166.1 828.6 1171.9 830.4C1177.8 832.1 1180.7 833.7 1183.7 840.9C1186.6 848.2 1188.7 862.0 1189.5 873.7C1190.3 885.5 1187.4 903.4 1188.3 911.2C1189.3 919.1 1190.3 918.7 1195.4 920.6C1200.5 922.5 1209.0 922.3 1218.8 922.5C1228.6 922.7 1244.2 920.5 1254.0 921.8C1263.7 923.0 1267.6 928.2 1277.4 930.0C1287.2 931.8 1295.0 931.9 1312.6 932.3C1330.1 932.8 1367.2 931.2 1382.9 932.8C1398.5 934.4 1398.5 938.3 1406.3 941.7C1414.1 945.2 1421.9 950.3 1429.7 953.4C1437.6 956.6 1446.5 960.1 1453.2 960.5C1459.8 960.9 1463.7 954.6 1469.6 955.8C1475.4 957.0 1482.1 963.6 1488.3 967.5C1494.6 971.4 1501.2 976.9 1507.1 979.2C1512.9 981.6 1520.8 981.2 1523.5 981.6" fill="none" stroke="#c9c9c9" stroke-width="2.300" stroke-linecap="round" stroke-linejoin="round"/><path d="M958.7 899.5C963.0 904.2 979.0 920.2 984.4 927.7C989.9 935.1 989.1 937.4 991.5 944.1C993.8 950.7 995.0 960.5 998.5 967.5C1002.0 974.5 1005.9 980.4 1012.6 986.2C1019.2 992.1 1030.5 999.1 1038.3 1002.7C1046.2 1006.2 1053.2 1007.5 1059.4 1007.3C1065.7 1007.1 1071.9 1000.3 1075.8 1001.5C1079.7 1002.7 1080.9 1010.7 1082.9 1014.4C1084.8 1018.1 1089.5 1018.7 1087.6 1023.7C1085.6 1028.8 1077.4 1039.4 1071.2 1044.8C1064.9 1050.3 1054.6 1050.7 1050.1 1056.6C1045.6 1062.4 1045.2 1076.1 1044.2 1080.0" fill="none" stroke="#c9c9c9" stroke-width="2.300" stroke-linecap="round" stroke-linejoin="round"/><path d="M1071.2 1040.0C1067.2 1042.0 1052.4 1045.9 1047.7 1051.7C1043.0 1057.6 1044.2 1065.4 1043.0 1075.2C1041.9 1084.9 1041.1 1098.6 1040.7 1110.3C1040.3 1122.0 1039.1 1136.5 1040.7 1145.5C1042.2 1154.5 1046.2 1159.9 1050.1 1164.2C1054.0 1168.5 1059.4 1169.7 1064.1 1171.2C1068.8 1172.8 1074.7 1175.2 1078.2 1173.6C1081.7 1172.0 1083.7 1167.0 1085.2 1161.9C1086.8 1156.8 1084.8 1147.8 1087.6 1143.1C1090.3 1138.4 1096.2 1135.3 1101.6 1133.7C1107.1 1132.2 1114.1 1135.3 1120.4 1133.7C1126.6 1132.2 1130.5 1126.5 1139.1 1124.4C1147.7 1122.2 1161.8 1121.1 1171.9 1120.9C1182.1 1120.7 1189.9 1122.6 1200.1 1123.2C1210.2 1123.8 1221.9 1123.0 1232.9 1124.4C1243.8 1125.7 1252.4 1130.0 1265.7 1131.4C1279.0 1132.8 1296.9 1131.0 1312.6 1132.6C1328.2 1134.1 1348.9 1137.5 1359.4 1140.8C1370.0 1144.1 1369.6 1150.9 1375.8 1152.5C1382.1 1154.1 1391.5 1148.6 1396.9 1150.2C1402.4 1151.7 1406.3 1157.4 1408.7 1161.9C1411.0 1166.4 1405.5 1175.4 1411.0 1177.1C1416.5 1178.9 1430.5 1171.4 1441.5 1172.4C1452.4 1173.4 1464.9 1178.9 1476.6 1183.0C1488.3 1187.1 1501.2 1192.9 1511.8 1197.0C1522.3 1201.1 1530.1 1206.6 1539.9 1207.6C1549.7 1208.6 1565.3 1203.7 1570.4 1202.9" fill="none" stroke="#c9c9c9" stroke-width="2.300" stroke-linecap="round" stroke-linejoin="round"/><path d="M958.7 1202.9C963.0 1202.7 979.0 1203.9 984.4 1201.7C989.9 1199.6 987.6 1194.7 991.5 1190.0C995.4 1185.3 1002.0 1178.1 1007.9 1173.6C1013.7 1169.1 1021.2 1165.8 1026.6 1163.0C1032.1 1160.3 1038.3 1158.2 1040.7 1157.2" fill="none" stroke="#c9c9c9" stroke-width="2.300" stroke-linecap="round" stroke-linejoin="round"/><path d="M984.4 1201.7C984.4 1204.5 982.5 1211.5 984.4 1218.1C986.4 1224.8 990.3 1233.0 996.2 1241.6C1002.0 1250.2 1014.5 1262.7 1019.6 1269.7C1024.7 1276.7 1025.8 1277.1 1026.6 1283.7C1027.4 1290.4 1025.5 1299.8 1024.3 1309.5C1023.1 1319.3 1020.4 1336.9 1019.6 1342.3" fill="none" stroke="#c9c9c9" stroke-width="2.300" stroke-linecap="round" stroke-linejoin="round"/><path d="M1254.0 1342.3C1259.8 1340.4 1277.4 1335.3 1289.1 1330.6C1300.8 1325.9 1314.5 1318.7 1324.3 1314.2C1334.0 1309.7 1339.9 1307.6 1347.7 1303.7C1355.5 1299.8 1361.4 1293.9 1371.2 1290.8C1380.9 1287.7 1394.6 1286.5 1406.3 1284.9C1418.0 1283.4 1429.7 1284.1 1441.5 1281.4C1453.2 1278.7 1466.9 1270.3 1476.6 1268.5C1486.4 1266.8 1492.2 1268.3 1500.1 1270.9C1507.9 1273.4 1515.7 1280.8 1523.5 1283.7C1531.3 1286.7 1539.1 1288.8 1546.9 1288.4C1554.7 1288.0 1566.5 1282.6 1570.4 1281.4" fill="none" stroke="#c9c9c9" stroke-width="2.300" stroke-linecap="round" stroke-linejoin="round"/><path d="M1347.7 1303.7 1350.1 1342.3" fill="none" stroke="#c9c9c9" stroke-width="2.300" stroke-linecap="round" stroke-linejoin="round"/><path d="M1523.5 981.6C1524.3 986.2 1526.2 1002.3 1528.2 1009.7C1530.1 1017.1 1532.5 1019.5 1535.2 1026.1C1537.9 1032.7 1542.2 1040.5 1544.6 1049.5C1546.9 1058.5 1548.5 1074.9 1549.3 1080.0" fill="none" stroke="#c9c9c9" stroke-width="2.300" stroke-linecap="round" stroke-linejoin="round"/><path d="M1523.5 981.6C1523.1 975.3 1520.0 954.2 1521.2 944.1C1522.3 933.9 1526.2 927.7 1530.5 920.6C1534.8 913.6 1541.9 907.0 1546.9 901.9C1552.0 896.8 1558.7 892.1 1561.0 890.2" fill="none" stroke="#c9c9c9" stroke-width="2.300" stroke-linecap="round" stroke-linejoin="round"/><path d="M1555.4 1150.2C1554.7 1155.2 1554.2 1171.1 1551.6 1180.6C1549.0 1190.2 1539.5 1197.8 1539.9 1207.6C1540.3 1217.3 1550.1 1232.0 1554.0 1239.2C1557.9 1246.4 1561.8 1249.0 1563.3 1250.9" fill="none" stroke="#c9c9c9" stroke-width="2.300" stroke-linecap="round" stroke-linejoin="round"/><path d="M1550.1 1077.5C1550.2 1083.0 1550.0 1099.0 1550.6 1110.3C1551.1 1121.6 1551.0 1133.7 1553.4 1145.5C1555.8 1157.2 1559.6 1171.6 1565.1 1180.6C1570.6 1189.6 1578.0 1195.5 1586.2 1199.4C1594.4 1203.3 1605.7 1200.9 1614.3 1204.1C1622.9 1207.2 1632.7 1211.5 1637.7 1218.1C1642.8 1224.8 1641.7 1236.1 1644.8 1243.9C1647.9 1251.7 1651.4 1258.7 1656.5 1265.0C1661.6 1271.2 1666.7 1278.1 1675.2 1281.4C1683.8 1284.7 1698.7 1284.5 1708.1 1284.9C1717.4 1285.3 1724.9 1282.4 1731.5 1283.7C1738.1 1285.1 1742.0 1288.8 1747.9 1293.1C1753.8 1297.4 1759.6 1302.5 1766.7 1309.5C1773.7 1316.6 1785.0 1329.8 1790.1 1335.3C1795.2 1340.8 1796.0 1341.2 1797.1 1342.3" fill="none" stroke="#c9c9c9" stroke-width="2.300" stroke-linecap="round" stroke-linejoin="round"/><path d="M1541.7 1204.1C1546.0 1203.3 1560.0 1199.8 1567.4 1199.4C1574.9 1199.0 1581.5 1204.8 1586.2 1201.7C1590.9 1198.6 1593.6 1188.0 1595.6 1180.6C1597.5 1173.2 1594.0 1164.2 1597.9 1157.2C1601.8 1150.2 1607.7 1142.3 1619.0 1138.4C1630.3 1134.5 1654.9 1138.4 1665.9 1133.7C1676.8 1129.1 1679.9 1120.9 1684.6 1110.3C1689.3 1099.8 1690.1 1082.2 1694.0 1070.5C1697.9 1058.7 1705.7 1045.1 1708.1 1040.0" fill="none" stroke="#c9c9c9" stroke-width="2.300" stroke-linecap="round" stroke-linejoin="round"/><path d="M1541.7 1288.4C1546.0 1286.5 1557.3 1281.4 1567.4 1276.7C1577.6 1272.0 1592.8 1265.4 1602.6 1260.3C1612.4 1255.2 1619.0 1249.0 1626.0 1246.2C1633.1 1243.5 1641.7 1244.3 1644.8 1243.9" fill="none" stroke="#c9c9c9" stroke-width="2.300" stroke-linecap="round" stroke-linejoin="round"/><path d="M1644.8 1220.5C1649.5 1219.3 1662.4 1220.1 1672.9 1213.4C1683.5 1206.8 1698.3 1190.4 1708.1 1180.6C1717.8 1170.9 1723.7 1162.7 1731.5 1154.8C1739.3 1147.0 1747.1 1141.6 1754.9 1133.7C1762.7 1125.9 1772.9 1116.6 1778.4 1108.0C1783.8 1099.4 1783.8 1088.4 1787.7 1082.2C1791.7 1075.9 1795.6 1074.8 1801.8 1070.5C1808.1 1066.2 1815.5 1059.9 1825.2 1056.4C1835.0 1052.9 1849.5 1052.5 1860.4 1049.4C1871.3 1046.2 1885.8 1039.6 1890.9 1037.7" fill="none" stroke="#c9c9c9" stroke-width="2.300" stroke-linecap="round" stroke-linejoin="round"/><path d="M1541.7 1213.4C1549.9 1214.2 1573.7 1217.0 1590.9 1218.1C1608.1 1219.3 1635.8 1220.1 1644.8 1220.5" fill="none" stroke="#c9c9c9" stroke-width="2.300" stroke-linecap="round" stroke-linejoin="round"/><path d="M1984.6 1037.7C1985.2 1042.0 1988.1 1056.8 1988.1 1063.4C1988.1 1070.1 1989.9 1074.8 1984.6 1077.5C1979.3 1080.2 1963.1 1077.1 1956.5 1079.8C1949.9 1082.6 1946.3 1089.2 1944.8 1093.9C1943.2 1098.6 1943.6 1101.7 1947.1 1108.0C1950.6 1114.2 1961.4 1125.2 1965.9 1131.4C1970.4 1137.7 1972.5 1133.4 1974.1 1145.5C1975.6 1157.6 1974.9 1186.5 1975.2 1204.1C1975.6 1221.6 1974.9 1238.0 1976.4 1250.9C1978.0 1263.8 1982.1 1272.4 1984.6 1281.4C1987.2 1290.4 1990.3 1294.7 1991.7 1304.8C1993.0 1315.0 1992.6 1336.1 1992.8 1342.3" fill="none" stroke="#c9c9c9" stroke-width="2.300" stroke-linecap="round" stroke-linejoin="round"/><path d="M1984.6 1077.5C1989.7 1077.5 2005.3 1075.2 2015.1 1077.5C2024.9 1079.8 2033.8 1088.4 2043.2 1091.6C2052.6 1094.7 2066.8 1089.2 2071.3 1096.2C2075.8 1103.3 2070.9 1122.8 2070.2 1133.7C2069.4 1144.7 2065.3 1153.3 2066.7 1161.9C2068.0 1170.5 2075.2 1178.3 2078.4 1185.3C2081.5 1192.3 2084.6 1197.8 2085.4 1204.1C2086.2 1210.3 2081.9 1215.8 2083.1 1222.8C2084.2 1229.8 2090.1 1238.0 2092.4 1246.2C2094.8 1254.5 2095.2 1263.4 2097.1 1272.0C2099.1 1280.6 2102.6 1286.1 2104.2 1297.8C2105.7 1309.5 2106.1 1334.9 2106.5 1342.3" fill="none" stroke="#c9c9c9" stroke-width="2.300" stroke-linecap="round" stroke-linejoin="round"/><path d="M1975.2 1199.4C1971.7 1199.8 1963.5 1199.0 1954.2 1201.7C1944.8 1204.5 1927.6 1211.9 1919.0 1215.8C1910.4 1219.7 1908.5 1219.3 1902.6 1225.2C1896.7 1231.0 1890.9 1242.0 1883.8 1250.9C1876.8 1259.9 1868.2 1271.2 1860.4 1279.1C1852.6 1286.9 1843.2 1293.5 1837.0 1297.8C1830.7 1302.1 1825.6 1297.4 1822.9 1304.8C1820.2 1312.3 1821.0 1336.1 1820.6 1342.3" fill="none" stroke="#c9c9c9" stroke-width="2.300" stroke-linecap="round" stroke-linejoin="round"/><path d="M2036.2 1342.3C2040.1 1338.8 2051.8 1325.2 2059.6 1321.2C2067.4 1317.3 2076.0 1317.3 2083.1 1318.9C2090.1 1320.5 2096.7 1326.7 2101.8 1330.6C2106.9 1334.5 2111.6 1340.4 2113.5 1342.3" fill="none" stroke="#c9c9c9" stroke-width="2.300" stroke-linecap="round" stroke-linejoin="round"/><path d="M1583.8 1274.4C1583.1 1278.3 1578.8 1292.0 1579.2 1297.8C1579.5 1303.7 1582.3 1305.6 1586.2 1309.5C1590.1 1313.4 1596.7 1315.8 1602.6 1321.2C1608.5 1326.7 1618.2 1338.8 1621.3 1342.3" fill="none" stroke="#c9c9c9" stroke-width="2.300" stroke-linecap="round" stroke-linejoin="round"/><path d="M1541.7 910.5C1544.4 907.3 1551.8 897.6 1558.1 891.7C1564.3 885.9 1571.7 879.4 1579.2 875.3C1586.6 871.2 1592.8 870.0 1602.6 867.1C1612.4 864.2 1628.0 860.3 1637.7 857.7C1647.5 855.2 1652.6 852.5 1661.2 851.9C1669.8 851.2 1681.5 853.2 1689.3 853.7C1697.1 854.3 1701.8 856.5 1708.1 855.4C1714.3 854.3 1719.8 849.7 1726.8 847.2C1733.8 844.6 1743.2 840.0 1750.2 840.2C1757.3 840.4 1762.4 847.6 1769.0 848.4C1775.6 849.1 1783.5 847.6 1790.1 844.8C1796.7 842.1 1803.8 834.3 1808.8 832.0C1813.9 829.6 1816.7 832.0 1820.6 830.8C1824.5 829.6 1826.4 824.1 1832.3 824.9C1838.1 825.7 1847.1 832.1 1855.7 835.5C1864.3 838.8 1875.6 842.1 1883.8 844.8C1892.0 847.6 1900.2 848.4 1904.9 851.9C1909.6 855.4 1908.8 859.7 1912.0 865.9C1915.1 872.2 1919.4 880.0 1923.7 889.4C1928.0 898.7 1933.8 914.4 1937.7 922.2C1941.7 930.0 1943.6 932.0 1947.1 936.2C1950.6 940.5 1955.7 942.9 1958.8 948.0C1962.0 953.0 1964.3 960.1 1965.9 966.7C1967.4 973.4 1967.8 980.4 1968.2 987.8C1968.6 995.2 1967.0 1003.8 1968.2 1011.2C1969.4 1018.7 1974.1 1028.8 1975.2 1032.3" fill="none" stroke="#c9c9c9" stroke-width="2.300" stroke-linecap="round" stroke-linejoin="round"/><path d="M1902.6 753.4C1903.0 756.6 1904.7 767.1 1904.9 772.2C1905.1 777.3 1903.0 780.8 1903.8 783.9C1904.5 787.0 1911.8 786.6 1909.6 790.9C1907.5 795.2 1896.3 803.4 1890.9 809.7C1885.4 815.9 1880.7 822.6 1876.8 828.4C1872.9 834.3 1871.0 839.4 1867.4 844.8C1863.9 850.3 1860.8 856.6 1855.7 861.2C1850.6 865.9 1843.2 868.3 1837.0 873.0C1830.7 877.7 1824.1 883.5 1818.2 889.4C1812.4 895.2 1807.7 902.3 1801.8 908.1C1796.0 914.0 1788.9 919.5 1783.1 924.5C1777.2 929.6 1772.1 933.1 1766.7 938.6C1761.2 944.1 1755.3 950.7 1750.2 957.3C1745.2 964.0 1740.5 971.0 1736.2 978.4C1731.9 985.9 1728.0 992.9 1724.5 1001.9C1721.0 1010.9 1716.7 1027.3 1715.1 1032.3" fill="none" stroke="#c9c9c9" stroke-width="2.300" stroke-linecap="round" stroke-linejoin="round"/><path d="M1909.6 790.9C1915.1 791.3 1933.5 791.7 1942.4 793.3C1951.4 794.8 1958.4 797.6 1963.5 800.3C1968.6 803.0 1972.5 805.0 1972.9 809.7C1973.3 814.4 1969.4 821.4 1965.9 828.4C1962.4 835.5 1956.5 844.8 1951.8 851.9C1947.1 858.9 1941.7 865.2 1937.7 870.6C1933.8 876.1 1930.7 880.8 1928.4 884.7C1926.0 888.6 1924.5 892.5 1923.7 894.1" fill="none" stroke="#c9c9c9" stroke-width="2.300" stroke-linecap="round" stroke-linejoin="round"/><path d="M1902.6 753.4C1903.8 752.1 1906.1 746.4 1909.6 745.2C1913.1 744.1 1920.2 745.0 1923.7 746.4C1927.2 747.8 1929.5 752.3 1930.7 753.4" fill="none" stroke="#c9c9c9" stroke-width="2.300" stroke-linecap="round" stroke-linejoin="round"/><path d="M1382.9 932.3C1384.0 930.0 1386.0 921.0 1389.9 918.3C1393.8 915.5 1401.6 914.0 1406.3 915.9C1411.0 917.9 1415.7 925.3 1418.0 930.0C1420.4 934.7 1420.0 941.7 1420.4 944.1" fill="none" stroke="#a5dbee" stroke-width="1.100"/><path d="M1263.3 972.2C1267.6 969.1 1280.9 956.8 1289.1 953.4C1297.3 950.1 1302.8 951.9 1312.6 952.3C1322.3 952.7 1336.8 957.1 1347.7 955.8C1358.7 954.4 1373.1 946.0 1378.2 944.1" fill="none" stroke="#a5dbee" stroke-width="1.100"/><path d="M1614.3 940.9C1615.1 934.7 1614.3 911.6 1619.0 903.4C1623.7 895.2 1633.8 894.8 1642.4 891.7C1651.0 888.6 1662.0 886.2 1670.6 884.7C1679.2 883.1 1686.6 882.3 1694.0 882.3C1701.4 882.3 1711.2 886.6 1715.1 884.7C1719.0 882.7 1714.7 873.0 1717.4 870.6C1720.2 868.3 1727.2 867.5 1731.5 870.6C1735.8 873.7 1739.3 887.8 1743.2 889.4C1747.1 890.9 1749.1 883.1 1754.9 880.0C1760.8 876.9 1771.3 871.0 1778.4 870.6C1785.4 870.2 1791.3 878.4 1797.1 877.7C1803.0 876.9 1805.7 869.5 1813.5 865.9C1821.3 862.4 1838.1 859.5 1844.0 856.6C1849.9 853.6 1846.3 849.1 1848.7 848.4C1851.0 847.6 1853.4 850.5 1858.1 851.9C1862.7 853.2 1870.6 857.3 1876.8 856.6C1883.1 855.8 1888.5 850.7 1895.6 847.2C1902.6 843.7 1911.2 839.8 1919.0 835.5C1926.8 831.2 1934.6 825.3 1942.4 821.4C1950.2 817.5 1962.0 813.6 1965.9 812.0" fill="none" stroke="#a5dbee" stroke-width="1.100"/><path d="M1544.0 936.2C1547.9 938.2 1558.5 945.2 1567.4 948.0C1576.4 950.7 1590.1 946.0 1597.9 952.7C1605.7 959.3 1610.8 980.0 1614.3 987.8C1617.8 995.6 1618.2 997.6 1619.0 999.5" fill="none" stroke="#a5dbee" stroke-width="1.100"/><path d="M1689.3 999.5C1690.5 1002.3 1694.0 1010.5 1696.3 1015.9C1698.7 1021.4 1702.2 1029.6 1703.4 1032.3" fill="none" stroke="#a5dbee" stroke-width="1.100"/><path d="M961.0 1068.1C968.8 1066.2 993.0 1059.5 1007.9 1056.4C1022.7 1053.3 1043.0 1050.5 1050.1 1049.4" fill="none" stroke="#a5dbee" stroke-width="1.100"/><path d="M1064.1 1051.7C1065.7 1056.4 1070.4 1070.1 1073.5 1079.8C1076.6 1089.6 1078.2 1100.5 1082.9 1110.3C1087.6 1120.1 1098.5 1133.7 1101.6 1138.4" fill="none" stroke="#a5dbee" stroke-width="1.100"/><path d="M961.0 1253.3C968.8 1249.0 992.2 1234.1 1007.9 1227.5C1023.5 1220.9 1040.7 1217.3 1054.7 1213.4C1068.8 1209.5 1081.3 1208.7 1092.2 1204.1C1103.2 1199.4 1110.2 1190.8 1120.4 1185.3C1130.5 1179.8 1147.3 1177.9 1153.2 1171.2C1159.0 1164.6 1155.1 1149.8 1155.5 1145.5" fill="none" stroke="#a5dbee" stroke-width="1.100"/><path d="M1195.4 1131.4C1196.9 1135.7 1202.0 1149.0 1204.7 1157.2C1207.5 1165.4 1210.6 1176.7 1211.8 1180.6" fill="none" stroke="#a5dbee" stroke-width="1.100"/><path d="M1284.4 1063.4C1286.0 1068.1 1290.3 1082.6 1293.8 1091.6C1297.3 1100.5 1302.8 1109.1 1305.5 1117.3C1308.3 1125.5 1311.0 1134.1 1310.2 1140.8C1309.4 1147.4 1304.4 1153.7 1300.8 1157.2C1297.3 1160.7 1291.1 1161.1 1289.1 1161.9" fill="none" stroke="#a5dbee" stroke-width="1.100"/><path d="M1373.5 1159.5C1379.0 1158.7 1393.0 1156.4 1406.3 1154.8C1419.6 1153.3 1435.6 1150.5 1453.2 1150.2C1470.8 1149.8 1493.8 1150.5 1511.8 1152.5C1529.7 1154.5 1552.8 1160.3 1561.0 1161.9" fill="none" stroke="#a5dbee" stroke-width="1.100"/><path d="M1284.4 1283.7C1289.1 1280.6 1304.0 1269.7 1312.6 1265.0C1321.2 1260.3 1328.2 1259.1 1336.0 1255.6C1343.8 1252.1 1350.5 1246.2 1359.4 1243.9C1368.4 1241.6 1382.1 1242.7 1389.9 1241.6C1397.7 1240.4 1403.6 1237.7 1406.3 1236.9" fill="none" stroke="#a5dbee" stroke-width="1.100"/><path d="M1354.7 1161.9C1357.5 1167.0 1366.5 1182.2 1371.2 1192.3C1375.8 1202.5 1379.7 1213.0 1382.9 1222.8C1386.0 1232.6 1387.9 1240.4 1389.9 1250.9C1391.9 1261.5 1392.6 1275.2 1394.6 1286.1C1396.5 1297.0 1400.4 1311.5 1401.6 1316.6" fill="none" stroke="#a5dbee" stroke-width="1.100"/><path d="M1675.2 1225.2C1669.0 1226.3 1649.9 1229.1 1637.7 1232.2C1625.6 1235.3 1614.3 1240.8 1602.6 1243.9C1590.9 1247.0 1573.3 1249.8 1567.4 1250.9" fill="none" stroke="#a5dbee" stroke-width="1.100"/><path d="M1801.8 1274.4C1801.8 1266.6 1797.9 1241.2 1801.8 1227.5C1805.7 1213.8 1817.4 1201.7 1825.2 1192.3C1833.1 1183.0 1840.1 1176.3 1848.7 1171.2C1857.3 1166.2 1872.1 1163.4 1876.8 1161.9" fill="none" stroke="#a5dbee" stroke-width="1.100"/><path d="M1895.6 1340.0C1899.5 1336.9 1911.2 1330.2 1919.0 1321.2C1926.8 1312.3 1938.1 1296.2 1942.4 1286.1C1946.7 1275.9 1940.9 1266.2 1944.8 1260.3C1948.7 1254.5 1956.5 1253.7 1965.9 1250.9C1975.2 1248.2 1989.3 1245.9 2001.0 1243.9C2012.7 1242.0 2030.3 1240.0 2036.2 1239.2" fill="none" stroke="#a5dbee" stroke-width="1.100"/><path d="M1815.9 1096.2C1825.2 1094.7 1854.9 1089.6 1872.1 1086.9C1889.3 1084.1 1903.4 1083.0 1919.0 1079.8C1934.6 1076.7 1948.3 1071.2 1965.9 1068.1C1983.4 1065.0 2014.7 1062.3 2024.5 1061.1" fill="none" stroke="#a5dbee" stroke-width="1.100"/><path d="M2066.7 1051.7C2069.4 1053.7 2075.6 1060.3 2083.1 1063.4C2090.5 1066.6 2101.0 1067.7 2111.2 1070.5C2121.3 1073.2 2138.5 1078.3 2144.0 1079.8" fill="none" stroke="#a5dbee" stroke-width="1.100"/><path d="M1132.8 824.0C1130.0 828.0 1121.6 841.0 1116.2 848.0C1110.8 855.1 1102.8 858.8 1100.5 866.3C1098.1 873.7 1101.2 885.6 1102.1 892.8C1103.1 900.0 1104.2 904.6 1106.3 909.3C1108.3 914.0 1110.1 917.6 1114.6 920.9C1119.0 924.3 1125.3 926.9 1132.8 929.2C1140.2 931.6 1152.9 932.3 1159.3 935.0C1165.6 937.8 1167.8 940.7 1170.9 945.8C1173.9 950.9 1175.3 961.8 1177.5 965.7C1179.7 969.5 1180.8 970.4 1184.1 969.0C1187.4 967.6 1192.1 958.9 1197.4 957.4C1202.6 955.9 1209.3 957.9 1215.6 959.9C1222.0 961.8 1230.5 966.6 1235.5 969.0C1240.5 971.3 1243.9 970.3 1245.4 974.0C1247.0 977.6 1245.9 984.2 1244.6 990.9C1243.3 997.7 1239.1 1007.3 1237.6 1014.4C1236.0 1021.4 1232.9 1029.4 1235.2 1033.1C1237.6 1036.8 1248.9 1034.7 1251.6 1036.6C1254.4 1038.6 1253.6 1042.3 1251.6 1044.8C1249.7 1047.4 1244.2 1049.1 1239.9 1051.9C1235.6 1054.6 1229.4 1056.6 1225.8 1061.2C1222.3 1065.9 1220.0 1076.9 1218.8 1080.0" fill="none" stroke="#dcd0e4" stroke-width="4.500" stroke-linecap="round" stroke-linejoin="round"/><path d="M1132.8 824.0C1130.0 828.0 1121.6 841.0 1116.2 848.0C1110.8 855.1 1102.8 858.8 1100.5 866.3C1098.1 873.7 1101.2 885.6 1102.1 892.8C1103.1 900.0 1104.2 904.6 1106.3 909.3C1108.3 914.0 1110.1 917.6 1114.6 920.9C1119.0 924.3 1125.3 926.9 1132.8 929.2C1140.2 931.6 1152.9 932.3 1159.3 935.0C1165.6 937.8 1167.8 940.7 1170.9 945.8C1173.9 950.9 1175.3 961.8 1177.5 965.7C1179.7 969.5 1180.8 970.4 1184.1 969.0C1187.4 967.6 1192.1 958.9 1197.4 957.4C1202.6 955.9 1209.3 957.9 1215.6 959.9C1222.0 961.8 1230.5 966.6 1235.5 969.0C1240.5 971.3 1243.9 970.3 1245.4 974.0C1247.0 977.6 1245.9 984.2 1244.6 990.9C1243.3 997.7 1239.1 1007.3 1237.6 1014.4C1236.0 1021.4 1232.9 1029.4 1235.2 1033.1C1237.6 1036.8 1248.9 1034.7 1251.6 1036.6C1254.4 1038.6 1253.6 1042.3 1251.6 1044.8C1249.7 1047.4 1244.2 1049.1 1239.9 1051.9C1235.6 1054.6 1229.4 1056.6 1225.8 1061.2C1222.3 1065.9 1220.0 1076.9 1218.8 1080.0" fill="none" stroke="#a79bb5" stroke-width="1" stroke-dasharray="7 4"/><path d="M1251.6 1040.0C1250.1 1041.6 1246.2 1046.6 1242.2 1049.4C1238.3 1052.1 1232.1 1052.1 1228.2 1056.4C1224.3 1060.7 1223.1 1071.2 1218.8 1075.2C1214.5 1079.1 1205.9 1075.9 1202.4 1079.8C1198.9 1083.7 1198.1 1091.6 1197.7 1098.6C1197.3 1105.6 1202.4 1116.6 1200.1 1122.0C1197.7 1127.5 1188.0 1127.5 1183.7 1131.4C1179.4 1135.3 1176.6 1140.4 1174.3 1145.5C1171.9 1150.5 1172.7 1156.8 1169.6 1161.9C1166.5 1167.0 1157.1 1172.4 1155.5 1175.9C1154.0 1179.5 1161.4 1180.6 1160.2 1183.0C1159.0 1185.3 1149.7 1187.3 1148.5 1190.0C1147.3 1192.7 1150.8 1196.2 1153.2 1199.4C1155.5 1202.5 1160.6 1204.5 1162.6 1208.7C1164.5 1213.0 1165.7 1220.1 1164.9 1225.2C1164.1 1230.2 1161.0 1234.1 1157.9 1239.2C1154.7 1244.3 1151.6 1251.3 1146.2 1255.6C1140.7 1259.9 1129.4 1260.7 1125.1 1265.0C1120.8 1269.3 1123.1 1275.5 1120.4 1281.4C1117.6 1287.3 1111.8 1293.5 1108.7 1300.2C1105.5 1306.8 1104.0 1314.2 1101.6 1321.2C1099.3 1328.3 1095.8 1338.8 1094.6 1342.3" fill="none" stroke="#dcd0e4" stroke-width="4.500" stroke-linecap="round" stroke-linejoin="round"/><path d="M1251.6 1040.0C1250.1 1041.6 1246.2 1046.6 1242.2 1049.4C1238.3 1052.1 1232.1 1052.1 1228.2 1056.4C1224.3 1060.7 1223.1 1071.2 1218.8 1075.2C1214.5 1079.1 1205.9 1075.9 1202.4 1079.8C1198.9 1083.7 1198.1 1091.6 1197.7 1098.6C1197.3 1105.6 1202.4 1116.6 1200.1 1122.0C1197.7 1127.5 1188.0 1127.5 1183.7 1131.4C1179.4 1135.3 1176.6 1140.4 1174.3 1145.5C1171.9 1150.5 1172.7 1156.8 1169.6 1161.9C1166.5 1167.0 1157.1 1172.4 1155.5 1175.9C1154.0 1179.5 1161.4 1180.6 1160.2 1183.0C1159.0 1185.3 1149.7 1187.3 1148.5 1190.0C1147.3 1192.7 1150.8 1196.2 1153.2 1199.4C1155.5 1202.5 1160.6 1204.5 1162.6 1208.7C1164.5 1213.0 1165.7 1220.1 1164.9 1225.2C1164.1 1230.2 1161.0 1234.1 1157.9 1239.2C1154.7 1244.3 1151.6 1251.3 1146.2 1255.6C1140.7 1259.9 1129.4 1260.7 1125.1 1265.0C1120.8 1269.3 1123.1 1275.5 1120.4 1281.4C1117.6 1287.3 1111.8 1293.5 1108.7 1300.2C1105.5 1306.8 1104.0 1314.2 1101.6 1321.2C1099.3 1328.3 1095.8 1338.8 1094.6 1342.3" fill="none" stroke="#a79bb5" stroke-width="1" stroke-dasharray="7 4"/><path d="M1380.5 1342.3C1380.9 1338.8 1379.4 1326.3 1382.9 1321.2C1386.4 1316.2 1394.6 1315.0 1401.6 1311.9C1408.7 1308.7 1419.6 1306.8 1425.1 1302.5C1430.5 1298.2 1429.7 1290.4 1434.4 1286.1C1439.1 1281.8 1445.4 1279.6 1453.2 1276.7C1461.0 1273.8 1473.9 1268.1 1481.3 1268.5C1488.7 1268.9 1490.7 1276.1 1497.7 1279.1C1504.7 1282.0 1516.5 1283.7 1523.5 1286.1C1530.5 1288.4 1536.4 1288.0 1539.9 1293.1C1543.4 1298.2 1540.7 1310.7 1544.6 1316.6C1548.5 1322.4 1560.2 1326.3 1563.3 1328.3" fill="none" stroke="#dcd0e4" stroke-width="4.500" stroke-linecap="round" stroke-linejoin="round"/><path d="M1380.5 1342.3C1380.9 1338.8 1379.4 1326.3 1382.9 1321.2C1386.4 1316.2 1394.6 1315.0 1401.6 1311.9C1408.7 1308.7 1419.6 1306.8 1425.1 1302.5C1430.5 1298.2 1429.7 1290.4 1434.4 1286.1C1439.1 1281.8 1445.4 1279.6 1453.2 1276.7C1461.0 1273.8 1473.9 1268.1 1481.3 1268.5C1488.7 1268.9 1490.7 1276.1 1497.7 1279.1C1504.7 1282.0 1516.5 1283.7 1523.5 1286.1C1530.5 1288.4 1536.4 1288.0 1539.9 1293.1C1543.4 1298.2 1540.7 1310.7 1544.6 1316.6C1548.5 1322.4 1560.2 1326.3 1563.3 1328.3" fill="none" stroke="#a79bb5" stroke-width="1" stroke-dasharray="7 4"/><path d="M1282.1 1021.4 1300.8 1028.4 1326.6 1023.7 1340.7 1032.0 1359.4 1021.4 1389.9 1024.9 1406.3 1009.7 1425.1 1008.5 1434.4 1033.1 1453.2 1012.0 1476.6 1023.7 1488.3 1033.1 1500.1 1061.2 1511.8 1082.3" fill="none" stroke="#8d8d8d" stroke-width=".900" stroke-dasharray="6 4" stroke-linejoin="round"/><path d="M1633.1 978.4 1642.4 970.2 1670.6 969.1 1670.6 948.0 1689.3 940.9 1719.8 937.4 1754.9 943.3" fill="none" stroke="#8d8d8d" stroke-width=".900" stroke-dasharray="6 4" stroke-linejoin="round"/><path d="M1633.1 978.4 1640.1 990.2 1626.0 997.2 1635.4 1011.2 1649.5 1015.9 1653.0 1032.3" fill="none" stroke="#8d8d8d" stroke-width=".900" stroke-dasharray="6 4" stroke-linejoin="round"/><path d="M1541.7 1153.7 1553.4 1146.6 1579.2 1150.2 1614.3 1145.5 1616.7 1164.2 1656.5 1178.3 1672.9 1174.8 1671.7 1152.5 1663.5 1143.1 1670.6 1133.7 1684.6 1110.3 1694.0 1070.5 1689.3 1056.4 1679.9 1043.5 1656.5 1043.5" fill="none" stroke="#8d8d8d" stroke-width=".900" stroke-dasharray="6 4" stroke-linejoin="round"/><path d="M1694.0 1057.6 1719.8 1063.4 1743.2 1079.8 1769.0 1058.7 1792.4 1068.1 1801.8 1051.7 1818.2 1056.4 1820.6 1075.2 1844.0 1093.9 1848.7 1115.0" fill="none" stroke="#8d8d8d" stroke-width=".900" stroke-dasharray="6 4" stroke-linejoin="round"/><path d="M1753.8 1168.9 1848.7 1115.0 1914.3 1089.2 1919.0 1100.9 1942.4 1103.3 1947.1 1091.6 1989.3 1089.2 1998.7 1112.7 1989.3 1126.7 2015.1 1129.1 2017.4 1204.1 2015.1 1236.9 2036.2 1265.0 2031.5 1297.8 2022.1 1316.6 2012.7 1342.3" fill="none" stroke="#8d8d8d" stroke-width=".900" stroke-dasharray="6 4" stroke-linejoin="round"/><path d="M1753.8 1168.9 1769.0 1190.0 1774.9 1204.1" fill="none" stroke="#8d8d8d" stroke-width=".900" stroke-dasharray="6 4" stroke-linejoin="round"/><path d="M1726.8 1261.5 1731.5 1281.4 1708.1 1283.7 1675.2 1314.2" fill="none" stroke="#8d8d8d" stroke-width=".900" stroke-dasharray="6 4" stroke-linejoin="round"/><path d="M2146.3 1157.2 2118.2 1161.9 2076.0 1175.9 2059.6 1192.3 2038.5 1215.8 2017.4 1204.1" fill="none" stroke="#8d8d8d" stroke-width=".900" stroke-dasharray="6 4" stroke-linejoin="round"/><path d="M958.7 1158.4 996.2 1145.5 1031.3 1133.7 1054.7 1127.9 1064.1 1136.1 1087.6 1129.1 1101.6 1138.4 1115.7 1133.7 1113.3 1122.0 1122.7 1117.3 1139.1 1123.2 1153.2 1129.1 1155.5 1143.1 1169.6 1147.8" fill="none" stroke="#8d8d8d" stroke-width=".900" stroke-dasharray="6 4" stroke-linejoin="round"/><path d="M1462.6 1260.3 1476.6 1180.6 1488.3 1154.8 1500.1 1180.6 1518.8 1157.2 1563.3 1153.7" fill="none" stroke="#8d8d8d" stroke-width=".900" stroke-dasharray="6 4" stroke-linejoin="round"/><path d="M1867.4 849.5 1881.5 864.8 1904.9 851.9 1942.4 828.4 1956.5 840.2 1982.3 860.1" fill="none" stroke="#8d8d8d" stroke-width=".900" stroke-dasharray="6 4" stroke-linejoin="round"/><path d="M1497.7 1040.0 1514.1 1075.2 1509.4 1110.3 1516.5 1150.2" fill="none" stroke="#8d8d8d" stroke-width=".900" stroke-dasharray="6 4" stroke-linejoin="round"/><path d="M961.0 1054.1 975.1 1051.7 975.1 1324.8 961.0 1324.8" fill="none" stroke="#8d8d8d" stroke-width=".900" stroke-dasharray="6 4" stroke-linejoin="round"/><path d="M975.1 1241.6 989.1 1274.4 1007.9 1309.5 1014.9 1342.3" fill="none" stroke="#8d8d8d" stroke-width=".900" stroke-dasharray="6 4" stroke-linejoin="round"/><path d="M1675.2 1314.2 1694.0 1321.2 1701.0 1342.3" fill="none" stroke="#8d8d8d" stroke-width=".900" stroke-dasharray="6 4" stroke-linejoin="round"/><path d="M2106.5 1342.3 2111.2 1316.6 2129.9 1297.8" fill="none" stroke="#8d8d8d" stroke-width=".900" stroke-dasharray="6 4" stroke-linejoin="round"/></g></svg>
<div class="b" style="left:1069px;top:1023px;width:32px;height:19px;background:#fff;border:1px solid #8a8a8a;border-radius:2px;z-index:2"></div>
<div class="b" style="left:2014px;top:1073px;width:32px;height:19px;background:#fff;border:1px solid #8a8a8a;border-radius:2px;z-index:2"></div>
<div class="b" style="left:2078px;top:1242px;width:32px;height:19px;background:#fff;border:1px solid #8a8a8a;border-radius:2px;z-index:2"></div>
<div class="b" style="left:961px;top:947px;width:12px;height:20px;background:#fff;border:1px solid #8a8a8a;border-left:none;border-radius:0 2px 2px 0;z-index:2"></div>
<svg style="left:2108px;top:1308px" width="28" height="26" viewBox="0 0 28 26"><path d="M.800 22v-17.500l5-3.100h6.200l1.300 2.500h11.200l1.900 1.900v16.200h-6.900v-2.500h-3.700v2.500h-4.400v-2.500h-3.800v2.500z" fill="#fbfbf9" stroke="#5a5a5a" stroke-width="1.500" stroke-linejoin="round"/><path d="M5.800 9.500h15.600M5.800 12.600h15.600M5.800 15.700h15.600" stroke="#8a8a8a" stroke-width="1.300"/></svg>
<span class="t" id="t0" style="left:290.2px;top:13.9px;font-size:15.5px;color:#4a4a4a;letter-spacing:-0.201px;">MyProject</span>
<span class="t" id="t1" style="left:1235.2px;top:14.1px;font-size:13.5px;color:#767676;font-style:italic;letter-spacing:0.267px;">Command Search (Alt+Q)</span>
<span class="t" id="t2" style="left:2106.2px;top:13.9px;font-size:15.5px;color:#4a4a4a;letter-spacing:-0.358px;">Francis - Metaspectral</span>
<span class="t" id="t3" style="left:2267.7px;top:14.9px;font-size:12.5px;color:#1d6f67;font-weight:700;letter-spacing:0.628px;">FD</span>
<span class="t" id="t4" style="left:2362.7px;top:14.0px;font-size:16.5px;color:#3b3b3b;">?</span>
<span class="t" id="t5" style="left:22.2px;top:53.9px;font-size:15.5px;color:#262626;letter-spacing:0.175px;">Project</span>
<span class="t" id="t6" style="left:97.2px;top:53.9px;font-size:15.5px;color:#262626;letter-spacing:1.072px;">Map</span>
<span class="t" id="t7" style="left:155.2px;top:53.9px;font-size:15.5px;color:#262626;letter-spacing:0.307px;">Insert</span>
<span class="t" id="t8" style="left:220.2px;top:53.9px;font-size:15.5px;color:#262626;letter-spacing:0.012px;">Analysis</span>
<span class="t" id="t9" style="left:303.2px;top:53.9px;font-size:15.5px;color:#262626;letter-spacing:0.657px;">View</span>
<span class="t" id="t10" style="left:363.7px;top:53.9px;font-size:15.5px;color:#262626;letter-spacing:0.027px;">Edit</span>
<span class="t" id="t11" style="left:416.2px;top:53.9px;font-size:15.5px;color:#262626;letter-spacing:0.383px;">Imagery</span>
<span class="t" id="t12" style="left:500.2px;top:53.9px;font-size:15.5px;color:#262626;letter-spacing:-0.019px;">Share</span>
<span class="t" id="t13" style="left:564.7px;top:53.9px;font-size:15.5px;color:#1a1a1a;font-weight:700;letter-spacing:0.185px;-webkit-text-stroke:0;">Metaspectral</span>
<span class="t" id="t14" style="left:686.7px;top:53.9px;font-size:15.5px;color:#262626;letter-spacing:0.303px;">Help</span>
<span class="t" id="t15" style="left:774.2px;top:53.4px;font-size:15.5px;color:#262626;letter-spacing:-0.221px;">Raster Layer</span>
<span class="t" id="t16" style="left:885.2px;top:53.4px;font-size:15.5px;color:#262626;letter-spacing:-0.317px;">Data</span>
<span class="t" id="t17" style="left:245.7px;top:99.1px;font-size:27px;color:#fff;font-weight:700;font-family:'Liberation Serif',serif;">i</span>
<span class="t" id="t18" style="left:33.2px;top:139.4px;font-size:15.5px;color:#262626;letter-spacing:-0.245px;">Settings</span>
<span class="t" id="t19" style="left:109.2px;top:139.4px;font-size:15.5px;color:#262626;letter-spacing:-0.455px;">Inferences</span>
<span class="t" id="t20" style="left:198.2px;top:139.4px;font-size:15.5px;color:#262626;">Documentation</span>
<span class="t" id="t21" style="left:125.2px;top:190.6px;font-size:13.5px;color:#333;letter-spacing:0.228px;">Metaspectral</span>
<span class="t" id="t22" style="left:16.2px;top:230.0px;font-size:19.5px;color:#1b7ac0;letter-spacing:-0.474px;">Inferences</span>
<span class="t" id="t23" style="left:28.7px;top:273.7px;font-size:14.5px;color:#a6a6a6;letter-spacing:0.625px;">Add to Map</span>
<span class="t" id="t24" style="left:187.2px;top:273.7px;font-size:14.5px;color:#1a1a1a;letter-spacing:-0.060px;">Post processing:</span>
<span class="t" id="t25" style="left:307.2px;top:273.7px;font-size:14.5px;color:#1a1a1a;letter-spacing:0.876px;">None</span>
<span class="t" id="t26" style="left:14.7px;top:314.5px;font-size:19.5px;color:#111;font-weight:700;letter-spacing:-0.905px;">Jobs</span>
<span class="t" id="t27" style="left:15.2px;top:379.7px;font-size:14.5px;color:#111;font-weight:700;letter-spacing:-0.339px;">ArcGIS Class v1</span>
<span class="t" id="t28" style="left:15.2px;top:400.2px;font-size:14.5px;color:#1a1a1a;letter-spacing:0.301px;">Provisioning (~5min)</span>
<span class="t" id="t29" style="left:15.2px;top:419.7px;font-size:14.5px;color:#1a1a1a;letter-spacing:0.331px;">0%</span>
<span class="t" id="t30" style="left:14.7px;top:456.5px;font-size:19.5px;color:#111;font-weight:700;letter-spacing:0.137px;">Inferences</span>
<span class="t" id="t31" style="left:558.7px;top:230.0px;font-size:19.5px;color:#1f1f1f;letter-spacing:-0.038px;">Contents</span>
<span class="t" id="t32" style="left:589.2px;top:269.7px;font-size:14.5px;color:#555;font-style:italic;letter-spacing:-0.531px;">Search</span>
<span class="t" id="t33" style="left:569.7px;top:362.1px;font-size:17px;color:#333;font-weight:700;letter-spacing:0.517px;">Drawing Order</span>
<span class="t" id="t34" style="left:593.7px;top:397.2px;font-size:14.5px;color:#333;letter-spacing:0.791px;">Map</span>
<span class="t" id="t35" style="left:605.7px;top:428.7px;font-size:14.5px;color:#333;letter-spacing:0.485px;">World Topographic Map</span>
<span class="t" id="t36" style="left:605.7px;top:459.7px;font-size:14.5px;color:#333;letter-spacing:0.358px;">World Hillshade</span>
<span class="t" id="t37" style="left:605.7px;top:490.2px;font-size:14.5px;color:#333;letter-spacing:-0.361px;">ENMAP01-____L1C-DT0000002446_20220810T112...</span>
<span class="t" id="t38" style="left:585.7px;top:519.1px;font-size:14px;color:#333;letter-spacing:-1.022px;">RGB</span>
<span class="t" id="t39" style="left:618.7px;top:545.2px;font-size:14.5px;color:#333;letter-spacing:-0.285px;">Red: &nbsp; Band_1</span>
<span class="t" id="t40" style="left:618.7px;top:569.2px;font-size:14.5px;color:#333;letter-spacing:-0.338px;">Green: Band_2</span>
<span class="t" id="t41" style="left:618.7px;top:593.2px;font-size:14.5px;color:#333;letter-spacing:-0.234px;">Blue: &nbsp;Band_3</span>
<span class="t" id="t42" style="left:995.2px;top:226.3px;font-size:14.5px;color:#333;letter-spacing:0.541px;">Map</span>
<span class="t" id="t43" style="left:2160.7px;top:230.0px;font-size:19.5px;color:#1f1f1f;letter-spacing:0.097px;">Catalog</span>
<span class="t" id="t44" style="left:2160.2px;top:263.9px;font-size:15.5px;color:#333;letter-spacing:0.758px;">Project</span>
<span class="t" id="t45" style="left:2224.2px;top:263.9px;font-size:15.5px;color:#444;letter-spacing:0.060px;">Portal</span>
<span class="t" id="t46" style="left:2276.7px;top:263.9px;font-size:15.5px;color:#444;letter-spacing:0.320px;">Computer</span>
<span class="t" id="t47" style="left:2358.7px;top:263.9px;font-size:15.5px;color:#444;letter-spacing:-0.181px;">Favorites</span>
<span class="t" id="t48" style="left:2252.7px;top:306.2px;font-size:14.5px;color:#555;font-style:italic;letter-spacing:-0.255px;">Search Project</span>
<span class="t" id="t49" style="left:2215.7px;top:342.9px;font-size:15.5px;color:#333;letter-spacing:-0.535px;">Maps</span>
<span class="t" id="t50" style="left:2215.7px;top:372.9px;font-size:15.5px;color:#333;letter-spacing:-0.125px;">Toolboxes</span>
<span class="t" id="t51" style="left:2215.7px;top:402.9px;font-size:15.5px;color:#333;letter-spacing:-0.539px;">Databases</span>
<span class="t" id="t52" style="left:2215.7px;top:432.9px;font-size:15.5px;color:#333;letter-spacing:-0.684px;">Styles</span>
<span class="t" id="t53" style="left:2215.7px;top:462.9px;font-size:15.5px;color:#333;letter-spacing:-0.565px;">Folders</span>
<span class="t" id="t54" style="left:2215.7px;top:492.9px;font-size:15.5px;color:#333;letter-spacing:-0.379px;">Locators</span>
<span class="t" id="t55" style="left:973.7px;top:1349.2px;font-size:14.5px;color:#222;letter-spacing:-0.339px;">1:252,283</span>
<span class="t" id="t56" style="left:1206.7px;top:1351.1px;font-size:13.5px;color:#2f7fc0;font-weight:700;">N</span>
<span class="t" id="t57" style="left:1449.2px;top:1350.2px;font-size:14.5px;color:#333;letter-spacing:-0.220px;">267,534.00E 5,940,216.00N m</span>
<span class="t" id="t58" style="left:1894.2px;top:1349.7px;font-size:14.5px;color:#9a9a9a;letter-spacing:-0.106px;">Selected Features: 0</span>
<span class="t" id="t104" style="left:1071.7px;top:1027.6px;font-size:10.5px;color:#444;font-weight:700;letter-spacing:0.397px;z-index:3;">N358</span>
<span class="t" id="t105" style="left:2016.7px;top:1077.6px;font-size:10.5px;color:#444;font-weight:700;letter-spacing:0.397px;z-index:3;">N362</span>
<span class="t" id="t106" style="left:2080.7px;top:1246.6px;font-size:10.5px;color:#444;font-weight:700;letter-spacing:0.397px;z-index:3;">N362</span>
<span class="t" id="t107" style="left:962.2px;top:952.1px;font-size:10.5px;color:#444;font-weight:700;z-index:3;">1</span>
<div class="b" style="left:961px;top:248px;width:1183px;height:1092px;overflow:hidden;will-change:transform">
<span class="t" id="t59" style="left:81.8px;top:428.0px;font-size:11.8px;color:#3a3a3a;font-family:'DejaVu Sans',sans-serif;letter-spacing:0.950px;text-shadow:0 0 2px #fff,0 0 2px #fff,1px 0 1px #fff,-1px 0 1px #fff,0 1px 1px #fff,0 -1px 1px #fff;-webkit-text-stroke:.250px currentColor;">Schiermonnikoog</span>
<span class="t" id="t60" style="left:165.8px;top:592.0px;font-size:11.8px;color:#3a3a3a;font-family:'DejaVu Sans',sans-serif;letter-spacing:0.899px;text-shadow:0 0 2px #fff,0 0 2px #fff,1px 0 1px #fff,-1px 0 1px #fff,0 1px 1px #fff,0 -1px 1px #fff;-webkit-text-stroke:.250px currentColor;">Lauwersoog</span>
<span class="t" id="t61" style="left:373.8px;top:630.0px;font-size:11.8px;color:#3a3a3a;font-family:'DejaVu Sans',sans-serif;letter-spacing:0.881px;text-shadow:0 0 2px #fff,0 0 2px #fff,1px 0 1px #fff,-1px 0 1px #fff,0 1px 1px #fff,0 -1px 1px #fff;-webkit-text-stroke:.250px currentColor;">Kloosterburen</span>
<span class="t" id="t62" style="left:324.8px;top:686.0px;font-size:11.8px;color:#3a3a3a;font-family:'DejaVu Sans',sans-serif;letter-spacing:1.366px;text-shadow:0 0 2px #fff,0 0 2px #fff,1px 0 1px #fff,-1px 0 1px #fff,0 1px 1px #fff,0 -1px 1px #fff;-webkit-text-stroke:.250px currentColor;">Ulrum</span>
<span class="t" id="t63" style="left:266.8px;top:730.0px;font-size:11.8px;color:#3a3a3a;font-family:'DejaVu Sans',sans-serif;letter-spacing:0.709px;text-shadow:0 0 2px #fff,0 0 2px #fff,1px 0 1px #fff,-1px 0 1px #fff,0 1px 1px #fff,0 -1px 1px #fff;-webkit-text-stroke:.250px currentColor;">Zoutkamp</span>
<span class="t" id="t64" style="left:544.8px;top:676.0px;font-size:11.8px;color:#3a3a3a;font-family:'DejaVu Sans',sans-serif;letter-spacing:0.598px;text-shadow:0 0 2px #fff,0 0 2px #fff,1px 0 1px #fff,-1px 0 1px #fff,0 1px 1px #fff,0 -1px 1px #fff;-webkit-text-stroke:.250px currentColor;">Rasquert</span>
<span class="t" id="t65" style="left:688.8px;top:725.0px;font-size:11.8px;color:#3a3a3a;font-family:'DejaVu Sans',sans-serif;letter-spacing:0.942px;text-shadow:0 0 2px #fff,0 0 2px #fff,1px 0 1px #fff,-1px 0 1px #fff,0 1px 1px #fff,0 -1px 1px #fff;-webkit-text-stroke:.250px currentColor;">Middelstum</span>
<span class="t" id="t66" style="left:651.3px;top:820.0px;font-size:11.8px;color:#3a3a3a;font-family:'DejaVu Sans',sans-serif;letter-spacing:0.722px;text-shadow:0 0 2px #fff,0 0 2px #fff,1px 0 1px #fff,-1px 0 1px #fff,0 1px 1px #fff,0 -1px 1px #fff;-webkit-text-stroke:.250px currentColor;">Bedum</span>
<span class="t" id="t67" style="left:821.8px;top:761.5px;font-size:11.8px;color:#3a3a3a;font-family:'DejaVu Sans',sans-serif;letter-spacing:0.800px;text-shadow:0 0 2px #fff,0 0 2px #fff,1px 0 1px #fff,-1px 0 1px #fff,0 1px 1px #fff,0 -1px 1px #fff;-webkit-text-stroke:.250px currentColor;">Loppersum</span>
<span class="t" id="t68" style="left:1058.8px;top:765.0px;font-size:11.8px;color:#3a3a3a;font-family:'DejaVu Sans',sans-serif;letter-spacing:0.913px;text-shadow:0 0 2px #fff,0 0 2px #fff,1px 0 1px #fff,-1px 0 1px #fff,0 1px 1px #fff,0 -1px 1px #fff;-webkit-text-stroke:.250px currentColor;">Delfzijl</span>
<span class="t" id="t69" style="left:982.8px;top:661.0px;font-size:11.8px;color:#3a3a3a;font-family:'DejaVu Sans',sans-serif;letter-spacing:0.749px;text-shadow:0 0 2px #fff,0 0 2px #fff,1px 0 1px #fff,-1px 0 1px #fff,0 1px 1px #fff,0 -1px 1px #fff;-webkit-text-stroke:.250px currentColor;">Bierum</span>
<span class="t" id="t70" style="left:925.8px;top:535.0px;font-size:11.8px;color:#3a3a3a;font-family:'DejaVu Sans',sans-serif;letter-spacing:0.677px;text-shadow:0 0 2px #fff,0 0 2px #fff,1px 0 1px #fff,-1px 0 1px #fff,0 1px 1px #fff,0 -1px 1px #fff;-webkit-text-stroke:.250px currentColor;">Eemshaven</span>
<span class="t" id="t71" style="left:269.8px;top:883.0px;font-size:11.8px;color:#3a3a3a;font-family:'DejaVu Sans',sans-serif;letter-spacing:0.850px;text-shadow:0 0 2px #fff,0 0 2px #fff,1px 0 1px #fff,-1px 0 1px #fff,0 1px 1px #fff,0 -1px 1px #fff;-webkit-text-stroke:.250px currentColor;">Grijpskerk</span>
<span class="t" id="t72" style="left:64.8px;top:902.0px;font-size:11.8px;color:#3a3a3a;font-family:'DejaVu Sans',sans-serif;letter-spacing:1.057px;text-shadow:0 0 2px #fff,0 0 2px #fff,1px 0 1px #fff,-1px 0 1px #fff,0 1px 1px #fff,0 -1px 1px #fff;-webkit-text-stroke:.250px currentColor;">Buitenpost</span>
<span class="t" id="t73" style="left:470.8px;top:911.0px;font-size:11.8px;color:#3a3a3a;font-family:'DejaVu Sans',sans-serif;letter-spacing:0.999px;text-shadow:0 0 2px #fff,0 0 2px #fff,1px 0 1px #fff,-1px 0 1px #fff,0 1px 1px #fff,0 -1px 1px #fff;-webkit-text-stroke:.250px currentColor;">Aduard</span>
<span class="t" id="t74" style="left:386.8px;top:933.0px;font-size:11.8px;color:#3a3a3a;font-family:'DejaVu Sans',sans-serif;letter-spacing:0.919px;text-shadow:0 0 2px #fff,0 0 2px #fff,1px 0 1px #fff,-1px 0 1px #fff,0 1px 1px #fff,0 -1px 1px #fff;-webkit-text-stroke:.250px currentColor;">Briltil</span>
<span class="t" id="t75" style="left:625.8px;top:898.0px;font-size:11.8px;color:#3a3a3a;font-family:'DejaVu Sans',sans-serif;letter-spacing:0.748px;text-shadow:0 0 2px #fff,0 0 2px #fff,1px 0 1px #fff,-1px 0 1px #fff,0 1px 1px #fff,0 -1px 1px #fff;-webkit-text-stroke:.250px currentColor;">Zuidwolde</span>
<span class="t" id="t76" style="left:758.8px;top:871.0px;font-size:11.8px;color:#3a3a3a;font-family:'DejaVu Sans',sans-serif;letter-spacing:1.013px;text-shadow:0 0 2px #fff,0 0 2px #fff,1px 0 1px #fff,-1px 0 1px #fff,0 1px 1px #fff,0 -1px 1px #fff;-webkit-text-stroke:.250px currentColor;">Ten Boer</span>
<span class="t" id="t77" style="left:960.8px;top:940.0px;font-size:11.8px;color:#3a3a3a;font-family:'DejaVu Sans',sans-serif;letter-spacing:0.878px;text-shadow:0 0 2px #fff,0 0 2px #fff,1px 0 1px #fff,-1px 0 1px #fff,0 1px 1px #fff,0 -1px 1px #fff;-webkit-text-stroke:.250px currentColor;">Siddeburen</span>
<span class="t" id="t78" style="left:886.8px;top:993.0px;font-size:11.8px;color:#3a3a3a;font-family:'DejaVu Sans',sans-serif;letter-spacing:0.783px;text-shadow:0 0 2px #fff,0 0 2px #fff,1px 0 1px #fff,-1px 0 1px #fff,0 1px 1px #fff,0 -1px 1px #fff;-webkit-text-stroke:.250px currentColor;">Slochteren</span>
<span class="t" id="t79" style="left:58.8px;top:1039.0px;font-size:11.8px;color:#3a3a3a;font-family:'DejaVu Sans',sans-serif;letter-spacing:0.809px;text-shadow:0 0 2px #fff,0 0 2px #fff,1px 0 1px #fff,-1px 0 1px #fff,0 1px 1px #fff,0 -1px 1px #fff;-webkit-text-stroke:.250px currentColor;">Harkema</span>
<span class="t" id="t80" style="left:0.3px;top:979.0px;font-size:11.8px;color:#3a3a3a;font-family:'DejaVu Sans',sans-serif;letter-spacing:0.777px;text-shadow:0 0 2px #fff,0 0 2px #fff,1px 0 1px #fff,-1px 0 1px #fff,0 1px 1px #fff,0 -1px 1px #fff;-webkit-text-stroke:.250px currentColor;">ootstertille</span>
<span class="t" id="t81" style="left:647.8px;top:1085.0px;font-size:11.8px;color:#3a3a3a;font-family:'DejaVu Sans',sans-serif;letter-spacing:0.691px;text-shadow:0 0 2px #fff,0 0 2px #fff,1px 0 1px #fff,-1px 0 1px #fff,0 1px 1px #fff,0 -1px 1px #fff;-webkit-text-stroke:.250px currentColor;">Haren</span>
<span class="t" id="t82" style="left:780.8px;top:240.0px;font-size:11.8px;color:#3a3a3a;font-family:'DejaVu Sans',sans-serif;letter-spacing:0.818px;text-shadow:0 0 2px #fff,0 0 2px #fff,1px 0 1px #fff,-1px 0 1px #fff,0 1px 1px #fff,0 -1px 1px #fff;-webkit-text-stroke:.250px currentColor;">Borkum</span>
<span class="t" id="t83" style="left:540.3px;top:751.5px;font-size:12.8px;color:#333;font-family:'DejaVu Sans',sans-serif;letter-spacing:1.484px;text-shadow:0 0 2px #fff,0 0 2px #fff,1px 0 1px #fff,-1px 0 1px #fff,0 1px 1px #fff,0 -1px 1px #fff;-webkit-text-stroke:.250px currentColor;">Winsum</span>
<span class="t" id="t84" style="left:582.3px;top:996.1px;font-size:14.6px;color:#333;font-family:'DejaVu Sans',sans-serif;letter-spacing:1.091px;text-shadow:0 0 2px #fff,0 0 2px #fff,1px 0 1px #fff,-1px 0 1px #fff,0 1px 1px #fff,0 -1px 1px #fff;-webkit-text-stroke:.250px currentColor;">Groningen</span>
<span class="t" id="t85" style="left:586.3px;top:544.0px;font-size:11.8px;color:#8d867b;font-family:'DejaVu Sans',sans-serif;letter-spacing:3.467px;text-shadow:0 0 2px #fff,0 0 2px #fff,1px 0 1px #fff,-1px 0 1px #fff,0 1px 1px #fff,0 -1px 1px #fff;-webkit-text-stroke:.250px currentColor;">Het</span>
<span class="t" id="t86" style="left:559.8px;top:561.0px;font-size:11.8px;color:#8d867b;font-family:'DejaVu Sans',sans-serif;letter-spacing:3.341px;text-shadow:0 0 2px #fff,0 0 2px #fff,1px 0 1px #fff,-1px 0 1px #fff,0 1px 1px #fff,0 -1px 1px #fff;-webkit-text-stroke:.250px currentColor;">Hogeland</span>
<span class="t" id="t87" style="left:960.8px;top:721.0px;font-size:11.8px;color:#8d867b;font-family:'DejaVu Sans',sans-serif;letter-spacing:3.121px;text-shadow:0 0 2px #fff,0 0 2px #fff,1px 0 1px #fff,-1px 0 1px #fff,0 1px 1px #fff,0 -1px 1px #fff;-webkit-text-stroke:.250px currentColor;">Eemsdelta</span>
<span class="t" id="t88" style="left:274.3px;top:979.0px;font-size:11.8px;color:#8d867b;font-family:'DejaVu Sans',sans-serif;letter-spacing:3.155px;text-shadow:0 0 2px #fff,0 0 2px #fff,1px 0 1px #fff,-1px 0 1px #fff,0 1px 1px #fff,0 -1px 1px #fff;-webkit-text-stroke:.250px currentColor;">Westerkwartier</span>
<span class="t" id="t89" style="left:845.8px;top:1048.0px;font-size:11.8px;color:#8d867b;font-family:'DejaVu Sans',sans-serif;letter-spacing:3.329px;text-shadow:0 0 2px #fff,0 0 2px #fff,1px 0 1px #fff,-1px 0 1px #fff,0 1px 1px #fff,0 -1px 1px #fff;-webkit-text-stroke:.250px currentColor;">Midden-Groningen</span>
<span class="t" id="t90" style="left:730.8px;top:248.7px;font-size:10.2px;color:#74875f;font-weight:700;font-family:'DejaVu Sans',sans-serif;letter-spacing:0.057px;text-shadow:0 0 2px #fff,0 0 2px #fff,1px 0 1px #fff,-1px 0 1px #fff,0 1px 1px #fff,0 -1px 1px #fff;">Niedersächsisches</span>
<span class="t" id="t91" style="left:748.8px;top:262.7px;font-size:10.2px;color:#74875f;font-weight:700;font-family:'DejaVu Sans',sans-serif;letter-spacing:0.121px;text-shadow:0 0 2px #fff,0 0 2px #fff,1px 0 1px #fff,-1px 0 1px #fff,0 1px 1px #fff,0 -1px 1px #fff;">Wattenmeer</span>
<span class="t" id="t92" style="left:1020.8px;top:88.7px;font-size:10.2px;color:#74875f;font-weight:700;font-family:'DejaVu Sans',sans-serif;letter-spacing:0.078px;text-shadow:0 0 2px #fff,0 0 2px #fff,1px 0 1px #fff,-1px 0 1px #fff,0 1px 1px #fff,0 -1px 1px #fff;">Lower Saxon</span>
<span class="t" id="t93" style="left:1021.8px;top:103.2px;font-size:10.2px;color:#74875f;font-weight:700;font-family:'DejaVu Sans',sans-serif;letter-spacing:0.114px;text-shadow:0 0 2px #fff,0 0 2px #fff,1px 0 1px #fff,-1px 0 1px #fff,0 1px 1px #fff,0 -1px 1px #fff;">Wadden Sea</span>
<span class="t" id="t94" style="left:1018.8px;top:117.2px;font-size:10.2px;color:#74875f;font-weight:700;font-family:'DejaVu Sans',sans-serif;letter-spacing:0.117px;text-shadow:0 0 2px #fff,0 0 2px #fff,1px 0 1px #fff,-1px 0 1px #fff,0 1px 1px #fff,0 -1px 1px #fff;">National Park</span>
<span class="t" id="t95" style="left:1122.8px;top:491.7px;font-size:10.2px;color:#74875f;font-weight:700;font-family:'DejaVu Sans',sans-serif;letter-spacing:0.320px;text-shadow:0 0 2px #fff,0 0 2px #fff,1px 0 1px #fff,-1px 0 1px #fff,0 1px 1px #fff,0 -1px 1px #fff;">Niedersäc</span>
<span class="t" id="t96" style="left:1139.8px;top:505.7px;font-size:10.2px;color:#74875f;font-weight:700;font-family:'DejaVu Sans',sans-serif;letter-spacing:0.209px;text-shadow:0 0 2px #fff,0 0 2px #fff,1px 0 1px #fff,-1px 0 1px #fff,0 1px 1px #fff,0 -1px 1px #fff;">Watten</span>
<span class="t" id="t97" style="left:1177.3px;top:51.0px;font-size:11.8px;color:#3a3a3a;font-family:'DejaVu Sans',sans-serif;text-shadow:0 0 2px #fff,0 0 2px #fff,1px 0 1px #fff,-1px 0 1px #fff,0 1px 1px #fff,0 -1px 1px #fff;-webkit-text-stroke:.250px currentColor;">J</span>
<span class="t" id="t98" style="left:0.8px;top:801.0px;font-size:11.8px;color:#3a3a3a;font-family:'DejaVu Sans',sans-serif;letter-spacing:-1.600px;text-shadow:0 0 2px #fff,0 0 2px #fff,1px 0 1px #fff,-1px 0 1px #fff,0 1px 1px #fff,0 -1px 1px #fff;-webkit-text-stroke:.250px currentColor;">m</span>
<span class="t" id="t99" style="left:0.8px;top:875.6px;font-size:10.5px;color:#8a8a8a;font-family:'DejaVu Sans',sans-serif;letter-spacing:0.412px;text-shadow:0 0 2px #fff,0 0 2px #fff,1px 0 1px #fff,-1px 0 1px #fff,0 1px 1px #fff,0 -1px 1px #fff;-webkit-text-stroke:.250px currentColor;transform:rotate(-8deg);">oarwei</span>
<span class="t" id="t100" style="left:703.8px;top:944.7px;font-size:10.3px;color:#555;font-weight:700;font-family:'DejaVu Sans',sans-serif;letter-spacing:1.194px;text-shadow:0 0 2px #fff,0 0 2px #fff,1px 0 1px #fff,-1px 0 1px #fff,0 1px 1px #fff,0 -1px 1px #fff;transform:rotate(-38deg);transform-origin:50% 50%;">Rijksweg</span>
<span class="t" id="t101" style="left:776.8px;top:976.6px;font-size:10.5px;color:#7a7a7a;font-family:'DejaVu Sans',sans-serif;letter-spacing:1.584px;text-shadow:0 0 2px #fff,0 0 2px #fff,1px 0 1px #fff,-1px 0 1px #fff,0 1px 1px #fff,0 -1px 1px #fff;transform:rotate(-61deg);transform-origin:50% 50%;">Hamweg</span>
<span class="t" id="t102" style="left:114.8px;top:984.6px;font-size:10.5px;color:#7a7a7a;font-family:'DejaVu Sans',sans-serif;letter-spacing:1.609px;text-shadow:0 0 2px #fff,0 0 2px #fff,1px 0 1px #fff,-1px 0 1px #fff,0 1px 1px #fff,0 -1px 1px #fff;transform:rotate(82deg);transform-origin:50% 50%;">Uterwei</span>
<span class="t" id="t103" style="left:535.8px;top:878.9px;font-size:9.8px;color:#5f9fc4;font-style:italic;font-family:'DejaVu Sans',sans-serif;letter-spacing:0.515px;text-shadow:0 0 2px #fff,0 0 2px #fff,1px 0 1px #fff,-1px 0 1px #fff,0 1px 1px #fff,0 -1px 1px #fff;transform:rotate(82deg);transform-origin:50% 50%;">Reitdiep</span>
</div>
</body></html>
